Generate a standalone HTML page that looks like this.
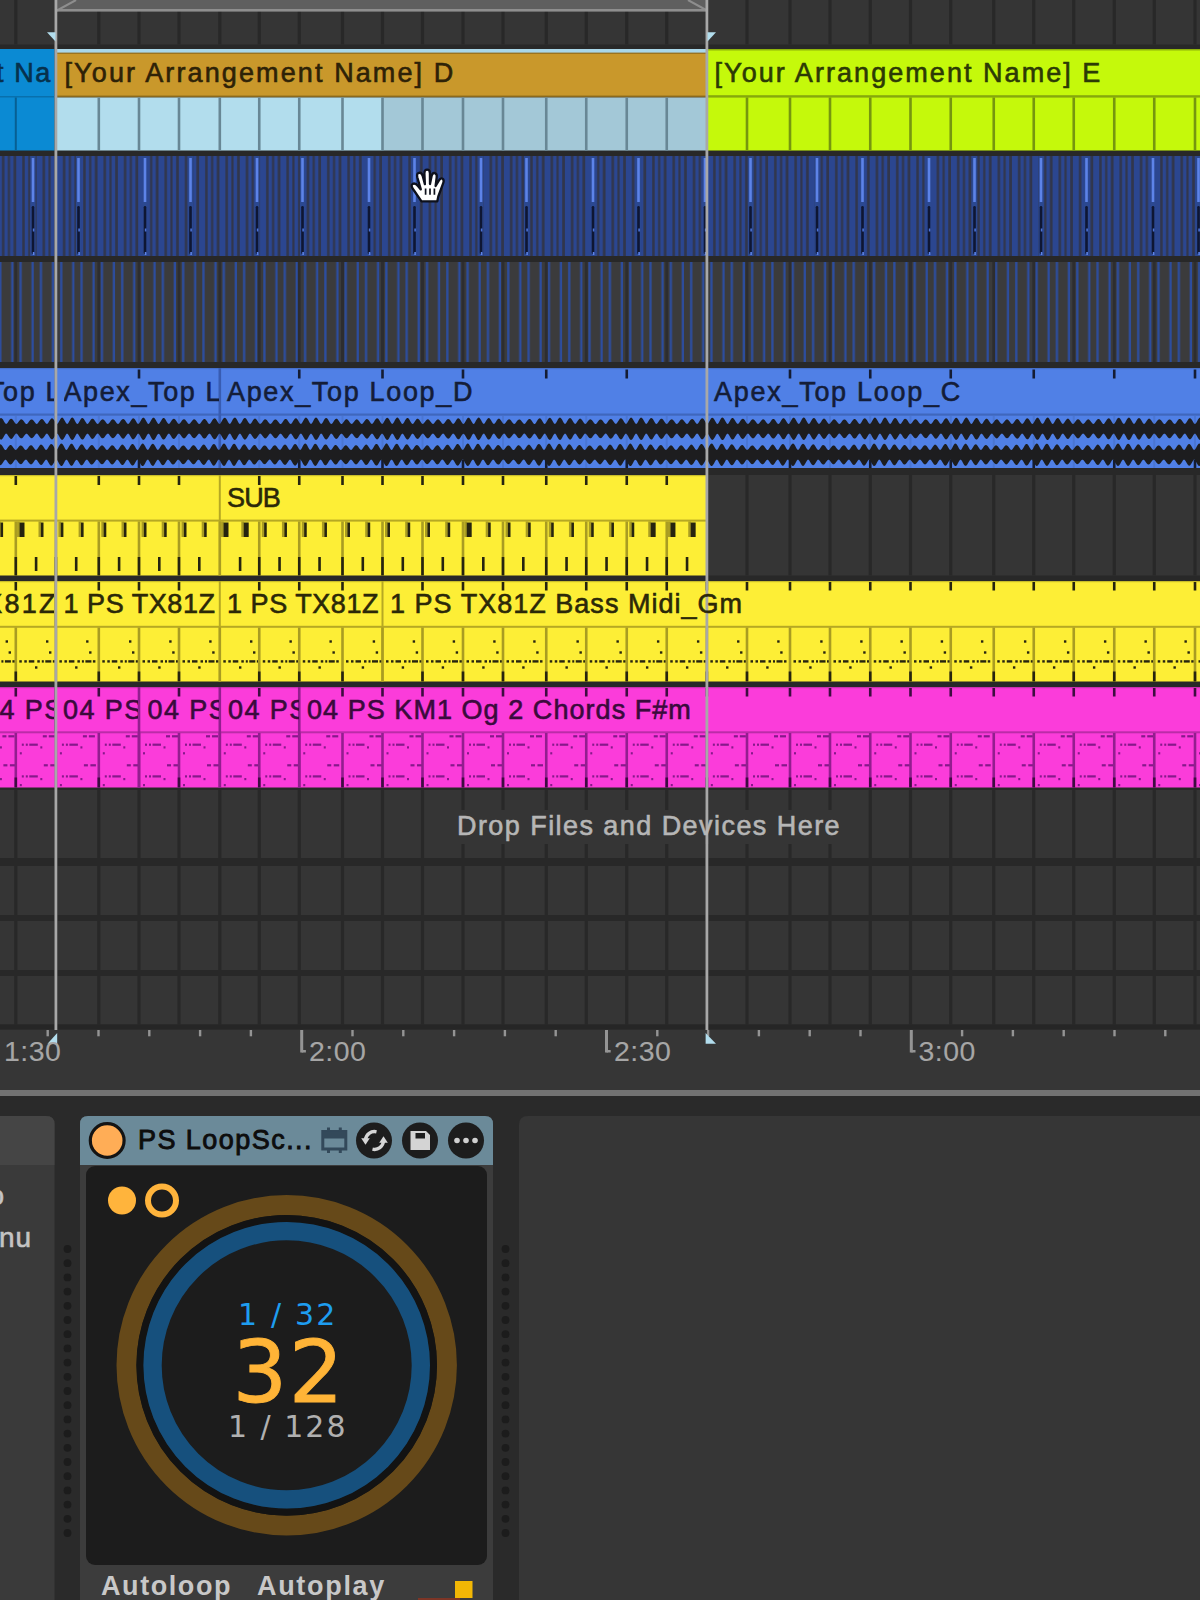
<!DOCTYPE html>
<html><head><meta charset="utf-8"><title>Arrangement</title>
<style>
html,body{margin:0;padding:0;background:#2a2a2a;}
#root{position:relative;width:1200px;height:1600px;overflow:hidden;background:#2a2a2a;}
#root svg{position:absolute;left:0;top:0;}
.t{position:absolute;white-space:nowrap;line-height:1.15;}
</style></head><body>
<div id="root">
<svg width="1200" height="1600" viewBox="0 0 1200 1600">
<rect x="0.00" y="0.00" width="1200.00" height="1600.00" fill="#282828"/>
<rect x="0.00" y="0.00" width="1200.00" height="44.50" fill="#353535"/>
<rect x="14.20" y="0.00" width="3.20" height="44.50" fill="#282828"/>
<rect x="54.30" y="0.00" width="3.20" height="44.50" fill="#282828"/>
<rect x="97.20" y="0.00" width="3.20" height="44.50" fill="#282828"/>
<rect x="137.40" y="0.00" width="3.20" height="44.50" fill="#282828"/>
<rect x="177.40" y="0.00" width="3.20" height="44.50" fill="#282828"/>
<rect x="218.20" y="0.00" width="3.20" height="44.50" fill="#282828"/>
<rect x="257.65" y="0.00" width="3.20" height="44.50" fill="#282828"/>
<rect x="297.65" y="0.00" width="3.20" height="44.50" fill="#282828"/>
<rect x="340.90" y="0.00" width="3.20" height="44.50" fill="#282828"/>
<rect x="380.90" y="0.00" width="3.20" height="44.50" fill="#282828"/>
<rect x="420.90" y="0.00" width="3.20" height="44.50" fill="#282828"/>
<rect x="461.40" y="0.00" width="3.20" height="44.50" fill="#282828"/>
<rect x="501.40" y="0.00" width="3.20" height="44.50" fill="#282828"/>
<rect x="544.65" y="0.00" width="3.20" height="44.50" fill="#282828"/>
<rect x="584.65" y="0.00" width="3.20" height="44.50" fill="#282828"/>
<rect x="625.15" y="0.00" width="3.20" height="44.50" fill="#282828"/>
<rect x="665.15" y="0.00" width="3.20" height="44.50" fill="#282828"/>
<rect x="705.25" y="0.00" width="3.20" height="44.50" fill="#282828"/>
<rect x="745.40" y="0.00" width="3.20" height="44.50" fill="#282828"/>
<rect x="788.40" y="0.00" width="3.20" height="44.50" fill="#282828"/>
<rect x="828.40" y="0.00" width="3.20" height="44.50" fill="#282828"/>
<rect x="868.65" y="0.00" width="3.20" height="44.50" fill="#282828"/>
<rect x="908.90" y="0.00" width="3.20" height="44.50" fill="#282828"/>
<rect x="949.15" y="0.00" width="3.20" height="44.50" fill="#282828"/>
<rect x="992.15" y="0.00" width="3.20" height="44.50" fill="#282828"/>
<rect x="1032.15" y="0.00" width="3.20" height="44.50" fill="#282828"/>
<rect x="1072.15" y="0.00" width="3.20" height="44.50" fill="#282828"/>
<rect x="1112.65" y="0.00" width="3.20" height="44.50" fill="#282828"/>
<rect x="1152.65" y="0.00" width="3.20" height="44.50" fill="#282828"/>
<rect x="1193.40" y="0.00" width="3.20" height="44.50" fill="#282828"/>
<rect x="0.00" y="790.00" width="1200.00" height="68.00" fill="#353535"/>
<rect x="14.20" y="790.00" width="3.20" height="68.00" fill="#282828"/>
<rect x="54.30" y="790.00" width="3.20" height="68.00" fill="#282828"/>
<rect x="97.20" y="790.00" width="3.20" height="68.00" fill="#282828"/>
<rect x="137.40" y="790.00" width="3.20" height="68.00" fill="#282828"/>
<rect x="177.40" y="790.00" width="3.20" height="68.00" fill="#282828"/>
<rect x="218.20" y="790.00" width="3.20" height="68.00" fill="#282828"/>
<rect x="257.65" y="790.00" width="3.20" height="68.00" fill="#282828"/>
<rect x="297.65" y="790.00" width="3.20" height="68.00" fill="#282828"/>
<rect x="340.90" y="790.00" width="3.20" height="68.00" fill="#282828"/>
<rect x="380.90" y="790.00" width="3.20" height="68.00" fill="#282828"/>
<rect x="420.90" y="790.00" width="3.20" height="68.00" fill="#282828"/>
<rect x="461.40" y="790.00" width="3.20" height="68.00" fill="#282828"/>
<rect x="501.40" y="790.00" width="3.20" height="68.00" fill="#282828"/>
<rect x="544.65" y="790.00" width="3.20" height="68.00" fill="#282828"/>
<rect x="584.65" y="790.00" width="3.20" height="68.00" fill="#282828"/>
<rect x="625.15" y="790.00" width="3.20" height="68.00" fill="#282828"/>
<rect x="665.15" y="790.00" width="3.20" height="68.00" fill="#282828"/>
<rect x="705.25" y="790.00" width="3.20" height="68.00" fill="#282828"/>
<rect x="745.40" y="790.00" width="3.20" height="68.00" fill="#282828"/>
<rect x="788.40" y="790.00" width="3.20" height="68.00" fill="#282828"/>
<rect x="828.40" y="790.00" width="3.20" height="68.00" fill="#282828"/>
<rect x="868.65" y="790.00" width="3.20" height="68.00" fill="#282828"/>
<rect x="908.90" y="790.00" width="3.20" height="68.00" fill="#282828"/>
<rect x="949.15" y="790.00" width="3.20" height="68.00" fill="#282828"/>
<rect x="992.15" y="790.00" width="3.20" height="68.00" fill="#282828"/>
<rect x="1032.15" y="790.00" width="3.20" height="68.00" fill="#282828"/>
<rect x="1072.15" y="790.00" width="3.20" height="68.00" fill="#282828"/>
<rect x="1112.65" y="790.00" width="3.20" height="68.00" fill="#282828"/>
<rect x="1152.65" y="790.00" width="3.20" height="68.00" fill="#282828"/>
<rect x="1193.40" y="790.00" width="3.20" height="68.00" fill="#282828"/>
<rect x="0.00" y="866.00" width="1200.00" height="49.00" fill="#353535"/>
<rect x="14.20" y="866.00" width="3.20" height="49.00" fill="#282828"/>
<rect x="54.30" y="866.00" width="3.20" height="49.00" fill="#282828"/>
<rect x="97.20" y="866.00" width="3.20" height="49.00" fill="#282828"/>
<rect x="137.40" y="866.00" width="3.20" height="49.00" fill="#282828"/>
<rect x="177.40" y="866.00" width="3.20" height="49.00" fill="#282828"/>
<rect x="218.20" y="866.00" width="3.20" height="49.00" fill="#282828"/>
<rect x="257.65" y="866.00" width="3.20" height="49.00" fill="#282828"/>
<rect x="297.65" y="866.00" width="3.20" height="49.00" fill="#282828"/>
<rect x="340.90" y="866.00" width="3.20" height="49.00" fill="#282828"/>
<rect x="380.90" y="866.00" width="3.20" height="49.00" fill="#282828"/>
<rect x="420.90" y="866.00" width="3.20" height="49.00" fill="#282828"/>
<rect x="461.40" y="866.00" width="3.20" height="49.00" fill="#282828"/>
<rect x="501.40" y="866.00" width="3.20" height="49.00" fill="#282828"/>
<rect x="544.65" y="866.00" width="3.20" height="49.00" fill="#282828"/>
<rect x="584.65" y="866.00" width="3.20" height="49.00" fill="#282828"/>
<rect x="625.15" y="866.00" width="3.20" height="49.00" fill="#282828"/>
<rect x="665.15" y="866.00" width="3.20" height="49.00" fill="#282828"/>
<rect x="705.25" y="866.00" width="3.20" height="49.00" fill="#282828"/>
<rect x="745.40" y="866.00" width="3.20" height="49.00" fill="#282828"/>
<rect x="788.40" y="866.00" width="3.20" height="49.00" fill="#282828"/>
<rect x="828.40" y="866.00" width="3.20" height="49.00" fill="#282828"/>
<rect x="868.65" y="866.00" width="3.20" height="49.00" fill="#282828"/>
<rect x="908.90" y="866.00" width="3.20" height="49.00" fill="#282828"/>
<rect x="949.15" y="866.00" width="3.20" height="49.00" fill="#282828"/>
<rect x="992.15" y="866.00" width="3.20" height="49.00" fill="#282828"/>
<rect x="1032.15" y="866.00" width="3.20" height="49.00" fill="#282828"/>
<rect x="1072.15" y="866.00" width="3.20" height="49.00" fill="#282828"/>
<rect x="1112.65" y="866.00" width="3.20" height="49.00" fill="#282828"/>
<rect x="1152.65" y="866.00" width="3.20" height="49.00" fill="#282828"/>
<rect x="1193.40" y="866.00" width="3.20" height="49.00" fill="#282828"/>
<rect x="0.00" y="921.00" width="1200.00" height="49.00" fill="#353535"/>
<rect x="14.20" y="921.00" width="3.20" height="49.00" fill="#282828"/>
<rect x="54.30" y="921.00" width="3.20" height="49.00" fill="#282828"/>
<rect x="97.20" y="921.00" width="3.20" height="49.00" fill="#282828"/>
<rect x="137.40" y="921.00" width="3.20" height="49.00" fill="#282828"/>
<rect x="177.40" y="921.00" width="3.20" height="49.00" fill="#282828"/>
<rect x="218.20" y="921.00" width="3.20" height="49.00" fill="#282828"/>
<rect x="257.65" y="921.00" width="3.20" height="49.00" fill="#282828"/>
<rect x="297.65" y="921.00" width="3.20" height="49.00" fill="#282828"/>
<rect x="340.90" y="921.00" width="3.20" height="49.00" fill="#282828"/>
<rect x="380.90" y="921.00" width="3.20" height="49.00" fill="#282828"/>
<rect x="420.90" y="921.00" width="3.20" height="49.00" fill="#282828"/>
<rect x="461.40" y="921.00" width="3.20" height="49.00" fill="#282828"/>
<rect x="501.40" y="921.00" width="3.20" height="49.00" fill="#282828"/>
<rect x="544.65" y="921.00" width="3.20" height="49.00" fill="#282828"/>
<rect x="584.65" y="921.00" width="3.20" height="49.00" fill="#282828"/>
<rect x="625.15" y="921.00" width="3.20" height="49.00" fill="#282828"/>
<rect x="665.15" y="921.00" width="3.20" height="49.00" fill="#282828"/>
<rect x="705.25" y="921.00" width="3.20" height="49.00" fill="#282828"/>
<rect x="745.40" y="921.00" width="3.20" height="49.00" fill="#282828"/>
<rect x="788.40" y="921.00" width="3.20" height="49.00" fill="#282828"/>
<rect x="828.40" y="921.00" width="3.20" height="49.00" fill="#282828"/>
<rect x="868.65" y="921.00" width="3.20" height="49.00" fill="#282828"/>
<rect x="908.90" y="921.00" width="3.20" height="49.00" fill="#282828"/>
<rect x="949.15" y="921.00" width="3.20" height="49.00" fill="#282828"/>
<rect x="992.15" y="921.00" width="3.20" height="49.00" fill="#282828"/>
<rect x="1032.15" y="921.00" width="3.20" height="49.00" fill="#282828"/>
<rect x="1072.15" y="921.00" width="3.20" height="49.00" fill="#282828"/>
<rect x="1112.65" y="921.00" width="3.20" height="49.00" fill="#282828"/>
<rect x="1152.65" y="921.00" width="3.20" height="49.00" fill="#282828"/>
<rect x="1193.40" y="921.00" width="3.20" height="49.00" fill="#282828"/>
<rect x="0.00" y="976.00" width="1200.00" height="48.50" fill="#353535"/>
<rect x="14.20" y="976.00" width="3.20" height="48.50" fill="#282828"/>
<rect x="54.30" y="976.00" width="3.20" height="48.50" fill="#282828"/>
<rect x="97.20" y="976.00" width="3.20" height="48.50" fill="#282828"/>
<rect x="137.40" y="976.00" width="3.20" height="48.50" fill="#282828"/>
<rect x="177.40" y="976.00" width="3.20" height="48.50" fill="#282828"/>
<rect x="218.20" y="976.00" width="3.20" height="48.50" fill="#282828"/>
<rect x="257.65" y="976.00" width="3.20" height="48.50" fill="#282828"/>
<rect x="297.65" y="976.00" width="3.20" height="48.50" fill="#282828"/>
<rect x="340.90" y="976.00" width="3.20" height="48.50" fill="#282828"/>
<rect x="380.90" y="976.00" width="3.20" height="48.50" fill="#282828"/>
<rect x="420.90" y="976.00" width="3.20" height="48.50" fill="#282828"/>
<rect x="461.40" y="976.00" width="3.20" height="48.50" fill="#282828"/>
<rect x="501.40" y="976.00" width="3.20" height="48.50" fill="#282828"/>
<rect x="544.65" y="976.00" width="3.20" height="48.50" fill="#282828"/>
<rect x="584.65" y="976.00" width="3.20" height="48.50" fill="#282828"/>
<rect x="625.15" y="976.00" width="3.20" height="48.50" fill="#282828"/>
<rect x="665.15" y="976.00" width="3.20" height="48.50" fill="#282828"/>
<rect x="705.25" y="976.00" width="3.20" height="48.50" fill="#282828"/>
<rect x="745.40" y="976.00" width="3.20" height="48.50" fill="#282828"/>
<rect x="788.40" y="976.00" width="3.20" height="48.50" fill="#282828"/>
<rect x="828.40" y="976.00" width="3.20" height="48.50" fill="#282828"/>
<rect x="868.65" y="976.00" width="3.20" height="48.50" fill="#282828"/>
<rect x="908.90" y="976.00" width="3.20" height="48.50" fill="#282828"/>
<rect x="949.15" y="976.00" width="3.20" height="48.50" fill="#282828"/>
<rect x="992.15" y="976.00" width="3.20" height="48.50" fill="#282828"/>
<rect x="1032.15" y="976.00" width="3.20" height="48.50" fill="#282828"/>
<rect x="1072.15" y="976.00" width="3.20" height="48.50" fill="#282828"/>
<rect x="1112.65" y="976.00" width="3.20" height="48.50" fill="#282828"/>
<rect x="1152.65" y="976.00" width="3.20" height="48.50" fill="#282828"/>
<rect x="1193.40" y="976.00" width="3.20" height="48.50" fill="#282828"/>
<rect x="708.00" y="475.00" width="492.00" height="100.50" fill="#353535"/>
<rect x="705.25" y="475.00" width="3.20" height="100.50" fill="#282828"/>
<rect x="745.40" y="475.00" width="3.20" height="100.50" fill="#282828"/>
<rect x="788.40" y="475.00" width="3.20" height="100.50" fill="#282828"/>
<rect x="828.40" y="475.00" width="3.20" height="100.50" fill="#282828"/>
<rect x="868.65" y="475.00" width="3.20" height="100.50" fill="#282828"/>
<rect x="908.90" y="475.00" width="3.20" height="100.50" fill="#282828"/>
<rect x="949.15" y="475.00" width="3.20" height="100.50" fill="#282828"/>
<rect x="992.15" y="475.00" width="3.20" height="100.50" fill="#282828"/>
<rect x="1032.15" y="475.00" width="3.20" height="100.50" fill="#282828"/>
<rect x="1072.15" y="475.00" width="3.20" height="100.50" fill="#282828"/>
<rect x="1112.65" y="475.00" width="3.20" height="100.50" fill="#282828"/>
<rect x="1152.65" y="475.00" width="3.20" height="100.50" fill="#282828"/>
<rect x="1193.40" y="475.00" width="3.20" height="100.50" fill="#282828"/>
<rect x="57.00" y="0.00" width="650.00" height="9.50" fill="#5f5f5f"/>
<rect x="57.00" y="9.00" width="650.00" height="2.60" fill="#8e8e8e"/>
<path d="M57 10.5 L76 0" stroke="#8e8e8e" stroke-width="2" fill="none"/>
<path d="M707 10.5 L688 0" stroke="#8e8e8e" stroke-width="2" fill="none"/>
<rect x="0.00" y="49.00" width="54.50" height="101.50" fill="#0b8ad3"/>
<rect x="0.00" y="96.00" width="54.50" height="1.50" fill="#0870ad"/>
<rect x="14.80" y="97.50" width="2.00" height="53.00" fill="#075f93"/>
<rect x="57.00" y="49.00" width="650.00" height="4.00" fill="#a9d7e9"/>
<rect x="57.00" y="53.00" width="650.00" height="43.50" fill="#c9982b"/>
<rect x="57.00" y="52.60" width="650.00" height="1.20" fill="#8f6c1e"/>
<rect x="57.00" y="95.60" width="650.00" height="2.00" fill="#8a691d"/>
<rect x="57.00" y="97.50" width="325.00" height="53.00" fill="#b2dded"/>
<rect x="382.00" y="97.50" width="325.00" height="53.00" fill="#a3c8d7"/>
<rect x="97.50" y="97.50" width="2.60" height="53.00" fill="#688795"/>
<rect x="137.70" y="97.50" width="2.60" height="53.00" fill="#688795"/>
<rect x="177.70" y="97.50" width="2.60" height="53.00" fill="#688795"/>
<rect x="218.50" y="97.50" width="2.60" height="53.00" fill="#688795"/>
<rect x="257.95" y="97.50" width="2.60" height="53.00" fill="#688795"/>
<rect x="297.95" y="97.50" width="2.60" height="53.00" fill="#688795"/>
<rect x="341.20" y="97.50" width="2.60" height="53.00" fill="#688795"/>
<rect x="381.20" y="97.50" width="2.60" height="53.00" fill="#688795"/>
<rect x="421.20" y="97.50" width="2.60" height="53.00" fill="#688795"/>
<rect x="461.70" y="97.50" width="2.60" height="53.00" fill="#688795"/>
<rect x="501.70" y="97.50" width="2.60" height="53.00" fill="#688795"/>
<rect x="544.95" y="97.50" width="2.60" height="53.00" fill="#688795"/>
<rect x="584.95" y="97.50" width="2.60" height="53.00" fill="#688795"/>
<rect x="625.45" y="97.50" width="2.60" height="53.00" fill="#688795"/>
<rect x="665.45" y="97.50" width="2.60" height="53.00" fill="#688795"/>
<rect x="708.00" y="49.00" width="492.00" height="101.50" fill="#c5f90b"/>
<rect x="708.00" y="49.00" width="492.00" height="1.50" fill="#8fb40a"/>
<rect x="708.00" y="95.20" width="492.00" height="2.40" fill="#86a80c"/>
<rect x="745.70" y="97.50" width="2.60" height="53.00" fill="#76960f"/>
<rect x="788.70" y="97.50" width="2.60" height="53.00" fill="#76960f"/>
<rect x="828.70" y="97.50" width="2.60" height="53.00" fill="#76960f"/>
<rect x="868.95" y="97.50" width="2.60" height="53.00" fill="#76960f"/>
<rect x="909.20" y="97.50" width="2.60" height="53.00" fill="#76960f"/>
<rect x="949.45" y="97.50" width="2.60" height="53.00" fill="#76960f"/>
<rect x="992.45" y="97.50" width="2.60" height="53.00" fill="#76960f"/>
<rect x="1032.45" y="97.50" width="2.60" height="53.00" fill="#76960f"/>
<rect x="1072.45" y="97.50" width="2.60" height="53.00" fill="#76960f"/>
<rect x="1112.95" y="97.50" width="2.60" height="53.00" fill="#76960f"/>
<rect x="1152.95" y="97.50" width="2.60" height="53.00" fill="#76960f"/>
<rect x="1193.70" y="97.50" width="2.60" height="53.00" fill="#76960f"/>
<rect x="1234.20" y="97.50" width="2.60" height="53.00" fill="#76960f"/>
<defs><pattern id="st1" x="56.9" y="0" width="20.32" height="10" patternUnits="userSpaceOnUse"><rect x="0" y="0" width="20.32" height="10" fill="#2b4690"/><rect x="6" y="0" width="2.5" height="10" fill="#31364c"/><rect x="11.9" y="0" width="2.2" height="10" fill="#31364c"/><rect x="17.6" y="0" width="2.72" height="10" fill="#31364c"/></pattern><pattern id="st2" x="57" y="0" width="20.32" height="10" patternUnits="userSpaceOnUse"><rect x="0" y="0" width="20.32" height="10" fill="#3b3b3c"/><rect x="3.1" y="0" width="2.3" height="10" fill="#2c4d9f"/><rect x="15.1" y="0" width="2.3" height="10" fill="#2c4d9f"/></pattern></defs>
<rect x="0.00" y="156.00" width="1200.00" height="100.00" fill="url(#st1)"/>
<rect x="30.40" y="156.00" width="5.20" height="100.00" fill="#2b4890"/>
<rect x="31.70" y="158.00" width="2.60" height="44.00" fill="#5d83e8"/>
<rect x="31.70" y="206.00" width="2.60" height="48.00" fill="#0e1633" rx="1.3"/>
<rect x="32.80" y="228.50" width="1.60" height="3.00" fill="#4c72d4"/>
<rect x="32.80" y="252.00" width="1.60" height="3.00" fill="#5d83e8"/>
<rect x="75.90" y="156.00" width="5.20" height="100.00" fill="#2b4890"/>
<rect x="77.20" y="158.00" width="2.60" height="44.00" fill="#5d83e8"/>
<rect x="77.20" y="206.00" width="2.60" height="48.00" fill="#0e1633" rx="1.3"/>
<rect x="78.30" y="228.50" width="1.60" height="3.00" fill="#4c72d4"/>
<rect x="78.30" y="252.00" width="1.60" height="3.00" fill="#5d83e8"/>
<rect x="142.40" y="156.00" width="5.20" height="100.00" fill="#2b4890"/>
<rect x="143.70" y="158.00" width="2.60" height="44.00" fill="#5d83e8"/>
<rect x="143.70" y="206.00" width="2.60" height="48.00" fill="#0e1633" rx="1.3"/>
<rect x="144.80" y="228.50" width="1.60" height="3.00" fill="#4c72d4"/>
<rect x="144.80" y="252.00" width="1.60" height="3.00" fill="#5d83e8"/>
<rect x="187.90" y="156.00" width="5.20" height="100.00" fill="#2b4890"/>
<rect x="189.20" y="158.00" width="2.60" height="44.00" fill="#5d83e8"/>
<rect x="189.20" y="206.00" width="2.60" height="48.00" fill="#0e1633" rx="1.3"/>
<rect x="190.30" y="228.50" width="1.60" height="3.00" fill="#4c72d4"/>
<rect x="190.30" y="252.00" width="1.60" height="3.00" fill="#5d83e8"/>
<rect x="254.40" y="156.00" width="5.20" height="100.00" fill="#2b4890"/>
<rect x="255.70" y="158.00" width="2.60" height="44.00" fill="#5d83e8"/>
<rect x="255.70" y="206.00" width="2.60" height="48.00" fill="#0e1633" rx="1.3"/>
<rect x="256.80" y="228.50" width="1.60" height="3.00" fill="#4c72d4"/>
<rect x="256.80" y="252.00" width="1.60" height="3.00" fill="#5d83e8"/>
<rect x="299.90" y="156.00" width="5.20" height="100.00" fill="#2b4890"/>
<rect x="301.20" y="158.00" width="2.60" height="44.00" fill="#5d83e8"/>
<rect x="301.20" y="206.00" width="2.60" height="48.00" fill="#0e1633" rx="1.3"/>
<rect x="302.30" y="228.50" width="1.60" height="3.00" fill="#4c72d4"/>
<rect x="302.30" y="252.00" width="1.60" height="3.00" fill="#5d83e8"/>
<rect x="366.40" y="156.00" width="5.20" height="100.00" fill="#2b4890"/>
<rect x="367.70" y="158.00" width="2.60" height="44.00" fill="#5d83e8"/>
<rect x="367.70" y="206.00" width="2.60" height="48.00" fill="#0e1633" rx="1.3"/>
<rect x="368.80" y="228.50" width="1.60" height="3.00" fill="#4c72d4"/>
<rect x="368.80" y="252.00" width="1.60" height="3.00" fill="#5d83e8"/>
<rect x="411.90" y="156.00" width="5.20" height="100.00" fill="#2b4890"/>
<rect x="413.20" y="158.00" width="2.60" height="44.00" fill="#5d83e8"/>
<rect x="413.20" y="206.00" width="2.60" height="48.00" fill="#0e1633" rx="1.3"/>
<rect x="414.30" y="228.50" width="1.60" height="3.00" fill="#4c72d4"/>
<rect x="414.30" y="252.00" width="1.60" height="3.00" fill="#5d83e8"/>
<rect x="478.40" y="156.00" width="5.20" height="100.00" fill="#2b4890"/>
<rect x="479.70" y="158.00" width="2.60" height="44.00" fill="#5d83e8"/>
<rect x="479.70" y="206.00" width="2.60" height="48.00" fill="#0e1633" rx="1.3"/>
<rect x="480.80" y="228.50" width="1.60" height="3.00" fill="#4c72d4"/>
<rect x="480.80" y="252.00" width="1.60" height="3.00" fill="#5d83e8"/>
<rect x="523.90" y="156.00" width="5.20" height="100.00" fill="#2b4890"/>
<rect x="525.20" y="158.00" width="2.60" height="44.00" fill="#5d83e8"/>
<rect x="525.20" y="206.00" width="2.60" height="48.00" fill="#0e1633" rx="1.3"/>
<rect x="526.30" y="228.50" width="1.60" height="3.00" fill="#4c72d4"/>
<rect x="526.30" y="252.00" width="1.60" height="3.00" fill="#5d83e8"/>
<rect x="590.40" y="156.00" width="5.20" height="100.00" fill="#2b4890"/>
<rect x="591.70" y="158.00" width="2.60" height="44.00" fill="#5d83e8"/>
<rect x="591.70" y="206.00" width="2.60" height="48.00" fill="#0e1633" rx="1.3"/>
<rect x="592.80" y="228.50" width="1.60" height="3.00" fill="#4c72d4"/>
<rect x="592.80" y="252.00" width="1.60" height="3.00" fill="#5d83e8"/>
<rect x="635.90" y="156.00" width="5.20" height="100.00" fill="#2b4890"/>
<rect x="637.20" y="158.00" width="2.60" height="44.00" fill="#5d83e8"/>
<rect x="637.20" y="206.00" width="2.60" height="48.00" fill="#0e1633" rx="1.3"/>
<rect x="638.30" y="228.50" width="1.60" height="3.00" fill="#4c72d4"/>
<rect x="638.30" y="252.00" width="1.60" height="3.00" fill="#5d83e8"/>
<rect x="702.40" y="156.00" width="5.20" height="100.00" fill="#2b4890"/>
<rect x="703.70" y="158.00" width="2.60" height="44.00" fill="#5d83e8"/>
<rect x="703.70" y="206.00" width="2.60" height="48.00" fill="#0e1633" rx="1.3"/>
<rect x="704.80" y="228.50" width="1.60" height="3.00" fill="#4c72d4"/>
<rect x="704.80" y="252.00" width="1.60" height="3.00" fill="#5d83e8"/>
<rect x="747.90" y="156.00" width="5.20" height="100.00" fill="#2b4890"/>
<rect x="749.20" y="158.00" width="2.60" height="44.00" fill="#5d83e8"/>
<rect x="749.20" y="206.00" width="2.60" height="48.00" fill="#0e1633" rx="1.3"/>
<rect x="750.30" y="228.50" width="1.60" height="3.00" fill="#4c72d4"/>
<rect x="750.30" y="252.00" width="1.60" height="3.00" fill="#5d83e8"/>
<rect x="814.40" y="156.00" width="5.20" height="100.00" fill="#2b4890"/>
<rect x="815.70" y="158.00" width="2.60" height="44.00" fill="#5d83e8"/>
<rect x="815.70" y="206.00" width="2.60" height="48.00" fill="#0e1633" rx="1.3"/>
<rect x="816.80" y="228.50" width="1.60" height="3.00" fill="#4c72d4"/>
<rect x="816.80" y="252.00" width="1.60" height="3.00" fill="#5d83e8"/>
<rect x="859.90" y="156.00" width="5.20" height="100.00" fill="#2b4890"/>
<rect x="861.20" y="158.00" width="2.60" height="44.00" fill="#5d83e8"/>
<rect x="861.20" y="206.00" width="2.60" height="48.00" fill="#0e1633" rx="1.3"/>
<rect x="862.30" y="228.50" width="1.60" height="3.00" fill="#4c72d4"/>
<rect x="862.30" y="252.00" width="1.60" height="3.00" fill="#5d83e8"/>
<rect x="926.40" y="156.00" width="5.20" height="100.00" fill="#2b4890"/>
<rect x="927.70" y="158.00" width="2.60" height="44.00" fill="#5d83e8"/>
<rect x="927.70" y="206.00" width="2.60" height="48.00" fill="#0e1633" rx="1.3"/>
<rect x="928.80" y="228.50" width="1.60" height="3.00" fill="#4c72d4"/>
<rect x="928.80" y="252.00" width="1.60" height="3.00" fill="#5d83e8"/>
<rect x="971.90" y="156.00" width="5.20" height="100.00" fill="#2b4890"/>
<rect x="973.20" y="158.00" width="2.60" height="44.00" fill="#5d83e8"/>
<rect x="973.20" y="206.00" width="2.60" height="48.00" fill="#0e1633" rx="1.3"/>
<rect x="974.30" y="228.50" width="1.60" height="3.00" fill="#4c72d4"/>
<rect x="974.30" y="252.00" width="1.60" height="3.00" fill="#5d83e8"/>
<rect x="1038.40" y="156.00" width="5.20" height="100.00" fill="#2b4890"/>
<rect x="1039.70" y="158.00" width="2.60" height="44.00" fill="#5d83e8"/>
<rect x="1039.70" y="206.00" width="2.60" height="48.00" fill="#0e1633" rx="1.3"/>
<rect x="1040.80" y="228.50" width="1.60" height="3.00" fill="#4c72d4"/>
<rect x="1040.80" y="252.00" width="1.60" height="3.00" fill="#5d83e8"/>
<rect x="1083.90" y="156.00" width="5.20" height="100.00" fill="#2b4890"/>
<rect x="1085.20" y="158.00" width="2.60" height="44.00" fill="#5d83e8"/>
<rect x="1085.20" y="206.00" width="2.60" height="48.00" fill="#0e1633" rx="1.3"/>
<rect x="1086.30" y="228.50" width="1.60" height="3.00" fill="#4c72d4"/>
<rect x="1086.30" y="252.00" width="1.60" height="3.00" fill="#5d83e8"/>
<rect x="1150.40" y="156.00" width="5.20" height="100.00" fill="#2b4890"/>
<rect x="1151.70" y="158.00" width="2.60" height="44.00" fill="#5d83e8"/>
<rect x="1151.70" y="206.00" width="2.60" height="48.00" fill="#0e1633" rx="1.3"/>
<rect x="1152.80" y="228.50" width="1.60" height="3.00" fill="#4c72d4"/>
<rect x="1152.80" y="252.00" width="1.60" height="3.00" fill="#5d83e8"/>
<rect x="1195.90" y="156.00" width="5.20" height="100.00" fill="#2b4890"/>
<rect x="1197.20" y="158.00" width="2.60" height="44.00" fill="#5d83e8"/>
<rect x="1197.20" y="206.00" width="2.60" height="48.00" fill="#0e1633" rx="1.3"/>
<rect x="1198.30" y="228.50" width="1.60" height="3.00" fill="#4c72d4"/>
<rect x="1198.30" y="252.00" width="1.60" height="3.00" fill="#5d83e8"/>
<rect x="0.00" y="262.00" width="1200.00" height="100.00" fill="url(#st2)"/>
<rect x="-26.00" y="262.00" width="2.80" height="100.00" fill="#2d2d2f"/>
<rect x="14.40" y="262.00" width="2.80" height="100.00" fill="#2d2d2f"/>
<rect x="54.50" y="262.00" width="2.80" height="100.00" fill="#2d2d2f"/>
<rect x="97.40" y="262.00" width="2.80" height="100.00" fill="#2d2d2f"/>
<rect x="137.60" y="262.00" width="2.80" height="100.00" fill="#2d2d2f"/>
<rect x="177.60" y="262.00" width="2.80" height="100.00" fill="#2d2d2f"/>
<rect x="218.40" y="262.00" width="2.80" height="100.00" fill="#2d2d2f"/>
<rect x="257.85" y="262.00" width="2.80" height="100.00" fill="#2d2d2f"/>
<rect x="297.85" y="262.00" width="2.80" height="100.00" fill="#2d2d2f"/>
<rect x="341.10" y="262.00" width="2.80" height="100.00" fill="#2d2d2f"/>
<rect x="381.10" y="262.00" width="2.80" height="100.00" fill="#2d2d2f"/>
<rect x="421.10" y="262.00" width="2.80" height="100.00" fill="#2d2d2f"/>
<rect x="461.60" y="262.00" width="2.80" height="100.00" fill="#2d2d2f"/>
<rect x="501.60" y="262.00" width="2.80" height="100.00" fill="#2d2d2f"/>
<rect x="544.85" y="262.00" width="2.80" height="100.00" fill="#2d2d2f"/>
<rect x="584.85" y="262.00" width="2.80" height="100.00" fill="#2d2d2f"/>
<rect x="625.35" y="262.00" width="2.80" height="100.00" fill="#2d2d2f"/>
<rect x="665.35" y="262.00" width="2.80" height="100.00" fill="#2d2d2f"/>
<rect x="705.45" y="262.00" width="2.80" height="100.00" fill="#2d2d2f"/>
<rect x="745.60" y="262.00" width="2.80" height="100.00" fill="#2d2d2f"/>
<rect x="788.60" y="262.00" width="2.80" height="100.00" fill="#2d2d2f"/>
<rect x="828.60" y="262.00" width="2.80" height="100.00" fill="#2d2d2f"/>
<rect x="868.85" y="262.00" width="2.80" height="100.00" fill="#2d2d2f"/>
<rect x="909.10" y="262.00" width="2.80" height="100.00" fill="#2d2d2f"/>
<rect x="949.35" y="262.00" width="2.80" height="100.00" fill="#2d2d2f"/>
<rect x="992.35" y="262.00" width="2.80" height="100.00" fill="#2d2d2f"/>
<rect x="1032.35" y="262.00" width="2.80" height="100.00" fill="#2d2d2f"/>
<rect x="1072.35" y="262.00" width="2.80" height="100.00" fill="#2d2d2f"/>
<rect x="1112.85" y="262.00" width="2.80" height="100.00" fill="#2d2d2f"/>
<rect x="1152.85" y="262.00" width="2.80" height="100.00" fill="#2d2d2f"/>
<rect x="1193.60" y="262.00" width="2.80" height="100.00" fill="#2d2d2f"/>
<rect x="1234.10" y="262.00" width="2.80" height="100.00" fill="#2d2d2f"/>
<rect x="0.00" y="368.00" width="1200.00" height="100.00" fill="#5080e6"/>
<rect x="0.00" y="368.00" width="1200.00" height="1.20" fill="#456fca"/>
<rect x="0.00" y="413.50" width="1200.00" height="2.20" fill="#3f67bd"/>
<rect x="-25.60" y="416.00" width="2.00" height="52.00" fill="#4a76d3"/>
<rect x="14.80" y="416.00" width="2.00" height="52.00" fill="#4a76d3"/>
<rect x="54.90" y="416.00" width="2.00" height="52.00" fill="#4a76d3"/>
<rect x="97.80" y="416.00" width="2.00" height="52.00" fill="#4a76d3"/>
<rect x="138.00" y="416.00" width="2.00" height="52.00" fill="#4a76d3"/>
<rect x="178.00" y="416.00" width="2.00" height="52.00" fill="#4a76d3"/>
<rect x="218.80" y="416.00" width="2.00" height="52.00" fill="#4a76d3"/>
<rect x="258.25" y="416.00" width="2.00" height="52.00" fill="#4a76d3"/>
<rect x="298.25" y="416.00" width="2.00" height="52.00" fill="#4a76d3"/>
<rect x="341.50" y="416.00" width="2.00" height="52.00" fill="#4a76d3"/>
<rect x="381.50" y="416.00" width="2.00" height="52.00" fill="#4a76d3"/>
<rect x="421.50" y="416.00" width="2.00" height="52.00" fill="#4a76d3"/>
<rect x="462.00" y="416.00" width="2.00" height="52.00" fill="#4a76d3"/>
<rect x="502.00" y="416.00" width="2.00" height="52.00" fill="#4a76d3"/>
<rect x="545.25" y="416.00" width="2.00" height="52.00" fill="#4a76d3"/>
<rect x="585.25" y="416.00" width="2.00" height="52.00" fill="#4a76d3"/>
<rect x="625.75" y="416.00" width="2.00" height="52.00" fill="#4a76d3"/>
<rect x="665.75" y="416.00" width="2.00" height="52.00" fill="#4a76d3"/>
<rect x="705.85" y="416.00" width="2.00" height="52.00" fill="#4a76d3"/>
<rect x="746.00" y="416.00" width="2.00" height="52.00" fill="#4a76d3"/>
<rect x="789.00" y="416.00" width="2.00" height="52.00" fill="#4a76d3"/>
<rect x="829.00" y="416.00" width="2.00" height="52.00" fill="#4a76d3"/>
<rect x="869.25" y="416.00" width="2.00" height="52.00" fill="#4a76d3"/>
<rect x="909.50" y="416.00" width="2.00" height="52.00" fill="#4a76d3"/>
<rect x="949.75" y="416.00" width="2.00" height="52.00" fill="#4a76d3"/>
<rect x="992.75" y="416.00" width="2.00" height="52.00" fill="#4a76d3"/>
<rect x="1032.75" y="416.00" width="2.00" height="52.00" fill="#4a76d3"/>
<rect x="1072.75" y="416.00" width="2.00" height="52.00" fill="#4a76d3"/>
<rect x="1113.25" y="416.00" width="2.00" height="52.00" fill="#4a76d3"/>
<rect x="1153.25" y="416.00" width="2.00" height="52.00" fill="#4a76d3"/>
<rect x="1194.00" y="416.00" width="2.00" height="52.00" fill="#4a76d3"/>
<rect x="1234.50" y="416.00" width="2.00" height="52.00" fill="#4a76d3"/>
<rect x="218.50" y="368.00" width="2.60" height="100.00" fill="#385cb2"/>
<rect x="54.00" y="368.00" width="1.00" height="100.00" fill="#3f67bd"/>
<rect x="-25.90" y="369.50" width="2.60" height="9.00" fill="#141c33"/>
<rect x="-25.90" y="460.00" width="2.60" height="8.00" fill="#141c33"/>
<rect x="137.70" y="369.50" width="2.60" height="9.00" fill="#141c33"/>
<rect x="137.70" y="460.00" width="2.60" height="8.00" fill="#141c33"/>
<rect x="297.95" y="369.50" width="2.60" height="9.00" fill="#141c33"/>
<rect x="297.95" y="460.00" width="2.60" height="8.00" fill="#141c33"/>
<rect x="381.20" y="369.50" width="2.60" height="9.00" fill="#141c33"/>
<rect x="381.20" y="460.00" width="2.60" height="8.00" fill="#141c33"/>
<rect x="461.70" y="369.50" width="2.60" height="9.00" fill="#141c33"/>
<rect x="461.70" y="460.00" width="2.60" height="8.00" fill="#141c33"/>
<rect x="544.95" y="369.50" width="2.60" height="9.00" fill="#141c33"/>
<rect x="544.95" y="460.00" width="2.60" height="8.00" fill="#141c33"/>
<rect x="625.45" y="369.50" width="2.60" height="9.00" fill="#141c33"/>
<rect x="625.45" y="460.00" width="2.60" height="8.00" fill="#141c33"/>
<rect x="788.70" y="369.50" width="2.60" height="9.00" fill="#141c33"/>
<rect x="788.70" y="460.00" width="2.60" height="8.00" fill="#141c33"/>
<rect x="868.95" y="369.50" width="2.60" height="9.00" fill="#141c33"/>
<rect x="868.95" y="460.00" width="2.60" height="8.00" fill="#141c33"/>
<rect x="949.45" y="369.50" width="2.60" height="9.00" fill="#141c33"/>
<rect x="949.45" y="460.00" width="2.60" height="8.00" fill="#141c33"/>
<rect x="1032.45" y="369.50" width="2.60" height="9.00" fill="#141c33"/>
<rect x="1032.45" y="460.00" width="2.60" height="8.00" fill="#141c33"/>
<rect x="1112.95" y="369.50" width="2.60" height="9.00" fill="#141c33"/>
<rect x="1112.95" y="460.00" width="2.60" height="8.00" fill="#141c33"/>
<rect x="1193.70" y="369.50" width="2.60" height="9.00" fill="#141c33"/>
<rect x="1193.70" y="460.00" width="2.60" height="8.00" fill="#141c33"/>
<path d="M-2.0 421.7 L-1.0 419.9 L0.0 418.5 L1.0 417.9 L2.0 418.4 L3.0 419.6 L4.0 421.4 L5.0 423.0 L6.0 424.0 L7.0 423.6 L8.0 422.2 L9.0 420.6 L10.0 419.3 L11.0 418.7 L12.0 418.9 L13.0 420.0 L14.0 421.5 L15.0 423.0 L16.0 424.0 L17.0 423.8 L18.0 422.6 L19.0 421.2 L20.0 419.9 L21.0 419.3 L22.0 419.4 L23.0 420.2 L24.0 421.5 L25.0 422.9 L26.0 423.9 L27.0 423.9 L28.0 422.9 L29.0 421.5 L30.0 420.3 L31.0 419.5 L32.0 419.4 L33.0 420.0 L34.0 421.2 L35.0 422.6 L36.0 423.8 L37.0 424.0 L38.0 423.1 L39.0 421.6 L40.0 420.2 L41.0 419.2 L42.0 418.9 L43.0 419.5 L44.0 420.7 L45.0 422.2 L46.0 423.6 L47.0 424.1 L48.0 423.2 L49.0 421.6 L50.0 419.9 L51.0 418.7 L52.0 418.2 L53.0 418.7 L54.0 420.0 L55.0 421.7 L56.0 423.3 L57.0 424.1 L58.0 423.3 L59.0 421.6 L60.0 419.7 L61.0 418.3 L62.0 417.6 L63.0 418.0 L64.0 419.4 L65.0 421.2 L66.0 423.0 L67.0 424.1 L68.0 423.4 L69.0 421.8 L70.0 419.9 L71.0 418.3 L72.0 417.6 L73.0 417.8 L74.0 419.1 L75.0 420.9 L76.0 422.8 L77.0 424.0 L78.0 423.7 L79.0 422.2 L80.0 420.4 L81.0 418.8 L82.0 418.0 L83.0 418.2 L84.0 419.2 L85.0 420.9 L86.0 422.6 L87.0 423.9 L88.0 423.8 L89.0 422.6 L90.0 421.0 L91.0 419.6 L92.0 418.7 L93.0 418.8 L94.0 419.6 L95.0 421.0 L96.0 422.6 L97.0 423.8 L98.0 424.0 L99.0 423.0 L100.0 421.6 L101.0 420.2 L102.0 419.4 L103.0 419.3 L104.0 419.9 L105.0 421.1 L106.0 422.5 L107.0 423.7 L108.0 424.1 L109.0 423.3 L110.0 421.9 L111.0 420.6 L112.0 419.6 L113.0 419.3 L114.0 419.8 L115.0 420.8 L116.0 422.2 L117.0 423.5 L118.0 424.1 L119.0 423.4 L120.0 422.1 L121.0 420.6 L122.0 419.4 L123.0 418.9 L124.0 419.2 L125.0 420.3 L126.0 421.8 L127.0 423.2 L128.0 424.1 L129.0 423.5 L130.0 422.1 L131.0 420.4 L132.0 418.9 L133.0 418.2 L134.0 418.5 L135.0 419.5 L136.0 421.2 L137.0 422.9 L138.0 424.0 L139.0 423.6 L140.0 422.1 L141.0 420.2 L142.0 418.6 L143.0 417.7 L144.0 417.8 L145.0 418.9 L146.0 420.7 L147.0 422.5 L148.0 423.9 L149.0 423.8 L150.0 422.3 L151.0 420.4 L152.0 418.7 L153.0 417.7 L154.0 417.7 L155.0 418.7 L156.0 420.4 L157.0 422.3 L158.0 423.7 L159.0 423.9 L160.0 422.6 L161.0 420.9 L162.0 419.2 L163.0 418.1 L164.0 418.0 L165.0 418.8 L166.0 420.4 L167.0 422.2 L168.0 423.6 L169.0 424.0 L170.0 423.0 L171.0 421.5 L172.0 419.9 L173.0 418.9 L174.0 418.7 L175.0 419.3 L176.0 420.6 L177.0 422.1 L178.0 423.5 L179.0 424.1 L180.0 423.3 L181.0 422.0 L182.0 420.6 L183.0 419.6 L184.0 419.2 L185.0 419.6 L186.0 420.7 L187.0 422.1 L188.0 423.4 L189.0 424.1 L190.0 423.6 L191.0 422.3 L192.0 420.9 L193.0 419.8 L194.0 419.3 L195.0 419.6 L196.0 420.5 L197.0 421.8 L198.0 423.2 L199.0 424.0 L200.0 423.7 L201.0 422.5 L202.0 421.0 L203.0 419.7 L204.0 419.0 L205.0 419.1 L206.0 419.9 L207.0 421.3 L208.0 422.9 L209.0 423.9 L210.0 423.8 L211.0 422.5 L212.0 420.8 L213.0 419.3 L214.0 418.4 L215.0 418.3 L216.0 419.2 L217.0 420.7 L218.0 422.4 L219.0 423.8 L220.0 423.9 L221.0 422.6 L222.0 420.8 L223.0 419.0 L224.0 417.9 L225.0 417.7 L226.0 418.5 L227.0 420.1 L228.0 422.0 L229.0 423.6 L230.0 424.0 L231.0 422.8 L232.0 420.9 L233.0 419.1 L234.0 417.9 L235.0 417.6 L236.0 418.3 L237.0 419.8 L238.0 421.8 L239.0 423.4 L240.0 424.1 L241.0 423.1 L242.0 421.4 L243.0 419.6 L244.0 418.3 L245.0 417.9 L246.0 418.5 L247.0 419.9 L248.0 421.7 L249.0 423.3 L250.0 424.1 L251.0 423.4 L252.0 421.9 L253.0 420.3 L254.0 419.1 L255.0 418.6 L256.0 419.0 L257.0 420.2 L258.0 421.7 L259.0 423.2 L260.0 424.1 L261.0 423.6 L262.0 422.4 L263.0 421.0 L264.0 419.8 L265.0 419.2 L266.0 419.4 L267.0 420.3 L268.0 421.7 L269.0 423.1 L270.0 424.0 L271.0 423.8 L272.0 422.7 L273.0 421.3 L274.0 420.1 L275.0 419.4 L276.0 419.4 L277.0 420.2 L278.0 421.4 L279.0 422.8 L280.0 423.9 L281.0 423.9 L282.0 422.9 L283.0 421.4 L284.0 420.0 L285.0 419.1 L286.0 418.9 L287.0 419.6 L288.0 420.9 L289.0 422.5 L290.0 423.7 L291.0 424.0 L292.0 422.9 L293.0 421.3 L294.0 419.7 L295.0 418.5 L296.0 418.2 L297.0 418.8 L298.0 420.2 L299.0 422.0 L300.0 423.5 L301.0 424.1 L302.0 423.0 L303.0 421.3 L304.0 419.5 L305.0 418.1 L306.0 417.6 L307.0 418.2 L308.0 419.6 L309.0 421.5 L310.0 423.2 L311.0 424.1 L312.0 423.2 L313.0 421.5 L314.0 419.6 L315.0 418.1 L316.0 417.5 L317.0 418.0 L318.0 419.4 L319.0 421.2 L320.0 423.0 L321.0 424.1 L322.0 423.5 L323.0 421.9 L324.0 420.1 L325.0 418.6 L326.0 418.0 L327.0 418.3 L328.0 419.5 L329.0 421.2 L330.0 422.9 L331.0 424.0 L332.0 423.7 L333.0 422.4 L334.0 420.7 L335.0 419.4 L336.0 418.7 L337.0 418.8 L338.0 419.8 L339.0 421.3 L340.0 422.8 L341.0 423.9 L342.0 423.9 L343.0 422.8 L344.0 421.4 L345.0 420.1 L346.0 419.3 L347.0 419.3 L348.0 420.0 L349.0 421.3 L350.0 422.7 L351.0 423.8 L352.0 424.0 L353.0 423.1 L354.0 421.7 L355.0 420.4 L356.0 419.5 L357.0 419.3 L358.0 419.9 L359.0 421.1 L360.0 422.5 L361.0 423.7 L362.0 424.1 L363.0 423.2 L364.0 421.8 L365.0 420.4 L366.0 419.3 L367.0 418.9 L368.0 419.4 L369.0 420.5 L370.0 422.0 L371.0 423.4 L372.0 424.1 L373.0 423.3 L374.0 421.8 L375.0 420.1 L376.0 418.8 L377.0 418.2 L378.0 418.6 L379.0 419.8 L380.0 421.5 L381.0 423.1 L382.0 424.1 L383.0 423.4 L384.0 421.8 L385.0 419.9 L386.0 418.4 L387.0 417.7 L388.0 417.9 L389.0 419.2 L390.0 421.0 L391.0 422.8 L392.0 424.0 L393.0 423.6 L394.0 422.0 L395.0 420.1 L396.0 418.5 L397.0 417.6 L398.0 417.8 L399.0 418.9 L400.0 420.7 L401.0 422.6 L402.0 423.9 L403.0 423.8 L404.0 422.4 L405.0 420.6 L406.0 419.0 L407.0 418.0 L408.0 418.1 L409.0 419.1 L410.0 420.7 L411.0 422.4 L412.0 423.8 L413.0 423.9 L414.0 422.8 L415.0 421.2 L416.0 419.7 L417.0 418.8 L418.0 418.7 L419.0 419.5 L420.0 420.8 L421.0 422.4 L422.0 423.7 L423.0 424.0 L424.0 423.1 L425.0 421.8 L426.0 420.4 L427.0 419.5 L428.0 419.2 L429.0 419.8 L430.0 420.9 L431.0 422.3 L432.0 423.5 L433.0 424.1 L434.0 423.4 L435.0 422.1 L436.0 420.7 L437.0 419.7 L438.0 419.3 L439.0 419.7 L440.0 420.7 L441.0 422.1 L442.0 423.4 L443.0 424.1 L444.0 423.5 L445.0 422.2 L446.0 420.7 L447.0 419.5 L448.0 418.9 L449.0 419.2 L450.0 420.1 L451.0 421.6 L452.0 423.1 L453.0 424.0 L454.0 423.6 L455.0 422.3 L456.0 420.6 L457.0 419.1 L458.0 418.3 L459.0 418.4 L460.0 419.4 L461.0 421.0 L462.0 422.7 L463.0 423.9 L464.0 423.7 L465.0 422.3 L466.0 420.5 L467.0 418.8 L468.0 417.8 L469.0 417.8 L470.0 418.7 L471.0 420.4 L472.0 422.3 L473.0 423.8 L474.0 423.9 L475.0 422.5 L476.0 420.6 L477.0 418.9 L478.0 417.7 L479.0 417.6 L480.0 418.5 L481.0 420.1 L482.0 422.1 L483.0 423.6 L484.0 424.0 L485.0 422.8 L486.0 421.1 L487.0 419.4 L488.0 418.2 L489.0 418.0 L490.0 418.7 L491.0 420.2 L492.0 422.0 L493.0 423.5 L494.0 424.1 L495.0 423.2 L496.0 421.7 L497.0 420.1 L498.0 419.0 L499.0 418.6 L500.0 419.2 L501.0 420.4 L502.0 422.0 L503.0 423.4 L504.0 424.1 L505.0 423.5 L506.0 422.2 L507.0 420.7 L508.0 419.7 L509.0 419.2 L510.0 419.5 L511.0 420.5 L512.0 421.9 L513.0 423.2 L514.0 424.1 L515.0 423.7 L516.0 422.5 L517.0 421.1 L518.0 419.9 L519.0 419.4 L520.0 419.5 L521.0 420.4 L522.0 421.7 L523.0 423.0 L524.0 424.0 L525.0 423.8 L526.0 422.6 L527.0 421.1 L528.0 419.8 L529.0 419.0 L530.0 419.0 L531.0 419.8 L532.0 421.2 L533.0 422.7 L534.0 423.9 L535.0 423.9 L536.0 422.7 L537.0 421.0 L538.0 419.4 L539.0 418.4 L540.0 418.3 L541.0 419.0 L542.0 420.5 L543.0 422.2 L544.0 423.7 L545.0 424.0 L546.0 422.8 L547.0 421.0 L548.0 419.2 L549.0 418.0 L550.0 417.7 L551.0 418.4 L552.0 419.9 L553.0 421.8 L554.0 423.4 L555.0 424.1 L556.0 423.0 L557.0 421.2 L558.0 419.3 L559.0 418.0 L560.0 417.5 L561.0 418.2 L562.0 419.6 L563.0 421.5 L564.0 423.2 L565.0 424.1 L566.0 423.3 L567.0 421.6 L568.0 419.8 L569.0 418.5 L570.0 417.9 L571.0 418.4 L572.0 419.7 L573.0 421.5 L574.0 423.1 L575.0 424.1 L576.0 423.5 L577.0 422.1 L578.0 420.5 L579.0 419.2 L580.0 418.6 L581.0 418.9 L582.0 420.0 L583.0 421.5 L584.0 423.0 L585.0 424.0 L586.0 423.7 L587.0 422.6 L588.0 421.1 L589.0 419.9 L590.0 419.3 L591.0 419.4 L592.0 420.2 L593.0 421.5 L594.0 422.9 L595.0 423.9 L596.0 423.9 L597.0 422.9 L598.0 421.5 L599.0 420.2 L600.0 419.5 L601.0 419.4 L602.0 420.1 L603.0 421.3 L604.0 422.7 L605.0 423.8 L606.0 424.0 L607.0 423.0 L608.0 421.6 L609.0 420.1 L610.0 419.2 L611.0 418.9 L612.0 419.5 L613.0 420.7 L614.0 422.3 L615.0 423.6 L616.0 424.1 L617.0 423.1 L618.0 421.5 L619.0 419.9 L620.0 418.6 L621.0 418.2 L622.0 418.7 L623.0 420.0 L624.0 421.8 L625.0 423.3 L626.0 424.1 L627.0 423.2 L628.0 421.5 L629.0 419.7 L630.0 418.2 L631.0 417.6 L632.0 418.1 L633.0 419.4 L634.0 421.3 L635.0 423.1 L636.0 424.1 L637.0 423.4 L638.0 421.7 L639.0 419.8 L640.0 418.3 L641.0 417.5 L642.0 417.9 L643.0 419.2 L644.0 421.0 L645.0 422.8 L646.0 424.0 L647.0 423.6 L648.0 422.1 L649.0 420.3 L650.0 418.8 L651.0 418.0 L652.0 418.2 L653.0 419.3 L654.0 421.0 L655.0 422.7 L656.0 423.9 L657.0 423.8 L658.0 422.6 L659.0 420.9 L660.0 419.5 L661.0 418.7 L662.0 418.8 L663.0 419.6 L664.0 421.1 L665.0 422.6 L666.0 423.8 L667.0 424.0 L668.0 422.9 L669.0 421.5 L670.0 420.2 L671.0 419.4 L672.0 419.3 L673.0 419.9 L674.0 421.1 L675.0 422.5 L676.0 423.7 L677.0 424.0 L678.0 423.2 L679.0 421.9 L680.0 420.5 L681.0 419.6 L682.0 419.3 L683.0 419.8 L684.0 420.9 L685.0 422.3 L686.0 423.5 L687.0 424.1 L688.0 423.4 L689.0 422.0 L690.0 420.5 L691.0 419.4 L692.0 418.9 L693.0 419.3 L694.0 420.3 L695.0 421.8 L696.0 423.3 L697.0 424.1 L698.0 423.5 L699.0 422.0 L700.0 420.3 L701.0 418.9 L702.0 418.2 L703.0 418.5 L704.0 419.6 L705.0 421.3 L706.0 422.9 L707.0 424.0 L708.0 423.6 L709.0 422.0 L710.0 420.2 L711.0 418.6 L712.0 417.7 L713.0 417.9 L714.0 419.0 L715.0 420.7 L716.0 422.6 L717.0 423.9 L718.0 423.7 L719.0 422.2 L720.0 420.3 L721.0 418.6 L722.0 417.6 L723.0 417.7 L724.0 418.7 L725.0 420.4 L726.0 422.3 L727.0 423.8 L728.0 423.9 L729.0 422.6 L730.0 420.8 L731.0 419.1 L732.0 418.1 L733.0 418.0 L734.0 418.9 L735.0 420.5 L736.0 422.2 L737.0 423.6 L738.0 424.0 L739.0 423.0 L740.0 421.4 L741.0 419.9 L742.0 418.9 L743.0 418.7 L744.0 419.3 L745.0 420.6 L746.0 422.2 L747.0 423.5 L748.0 424.1 L749.0 423.3 L750.0 421.9 L751.0 420.5 L752.0 419.5 L753.0 419.2 L754.0 419.7 L755.0 420.7 L756.0 422.1 L757.0 423.4 L758.0 424.1 L759.0 423.5 L760.0 422.3 L761.0 420.9 L762.0 419.8 L763.0 419.3 L764.0 419.6 L765.0 420.5 L766.0 421.9 L767.0 423.2 L768.0 424.1 L769.0 423.6 L770.0 422.4 L771.0 420.9 L772.0 419.6 L773.0 419.0 L774.0 419.1 L775.0 420.0 L776.0 421.4 L777.0 422.9 L778.0 424.0 L779.0 423.7 L780.0 422.4 L781.0 420.8 L782.0 419.2 L783.0 418.3 L784.0 418.3 L785.0 419.2 L786.0 420.8 L787.0 422.5 L788.0 423.8 L789.0 423.9 L790.0 422.5 L791.0 420.7 L792.0 419.0 L793.0 417.8 L794.0 417.7 L795.0 418.6 L796.0 420.2 L797.0 422.1 L798.0 423.6 L799.0 424.0 L800.0 422.7 L801.0 420.9 L802.0 419.0 L803.0 417.8 L804.0 417.6 L805.0 418.3 L806.0 419.9 L807.0 421.8 L808.0 423.5 L809.0 424.1 L810.0 423.0 L811.0 421.3 L812.0 419.5 L813.0 418.3 L814.0 417.9 L815.0 418.6 L816.0 420.0 L817.0 421.7 L818.0 423.3 L819.0 424.1 L820.0 423.3 L821.0 421.9 L822.0 420.3 L823.0 419.1 L824.0 418.6 L825.0 419.1 L826.0 420.2 L827.0 421.8 L828.0 423.2 L829.0 424.1 L830.0 423.6 L831.0 422.3 L832.0 420.9 L833.0 419.8 L834.0 419.2 L835.0 419.5 L836.0 420.4 L837.0 421.7 L838.0 423.1 L839.0 424.0 L840.0 423.8 L841.0 422.7 L842.0 421.3 L843.0 420.1 L844.0 419.4 L845.0 419.5 L846.0 420.2 L847.0 421.5 L848.0 422.9 L849.0 423.9 L850.0 423.9 L851.0 422.8 L852.0 421.3 L853.0 419.9 L854.0 419.1 L855.0 419.0 L856.0 419.7 L857.0 421.0 L858.0 422.5 L859.0 423.8 L860.0 424.0 L861.0 422.9 L862.0 421.2 L863.0 419.6 L864.0 418.5 L865.0 418.2 L866.0 418.9 L867.0 420.3 L868.0 422.0 L869.0 423.5 L870.0 424.0 L871.0 423.0 L872.0 421.2 L873.0 419.4 L874.0 418.1 L875.0 417.6 L876.0 418.2 L877.0 419.7 L878.0 421.6 L879.0 423.3 L880.0 424.1 L881.0 423.2 L882.0 421.4 L883.0 419.5 L884.0 418.1 L885.0 417.5 L886.0 418.0 L887.0 419.4 L888.0 421.3 L889.0 423.1 L890.0 424.1 L891.0 423.4 L892.0 421.8 L893.0 420.0 L894.0 418.6 L895.0 417.9 L896.0 418.3 L897.0 419.5 L898.0 421.2 L899.0 422.9 L900.0 424.0 L901.0 423.7 L902.0 422.3 L903.0 420.7 L904.0 419.3 L905.0 418.7 L906.0 418.9 L907.0 419.8 L908.0 421.3 L909.0 422.9 L910.0 423.9 L911.0 423.8 L912.0 422.7 L913.0 421.3 L914.0 420.0 L915.0 419.3 L916.0 419.3 L917.0 420.1 L918.0 421.3 L919.0 422.8 L920.0 423.8 L921.0 424.0 L922.0 423.0 L923.0 421.7 L924.0 420.4 L925.0 419.5 L926.0 419.4 L927.0 419.9 L928.0 421.1 L929.0 422.5 L930.0 423.7 L931.0 424.0 L932.0 423.2 L933.0 421.8 L934.0 420.3 L935.0 419.2 L936.0 418.9 L937.0 419.4 L938.0 420.6 L939.0 422.1 L940.0 423.5 L941.0 424.1 L942.0 423.3 L943.0 421.7 L944.0 420.0 L945.0 418.7 L946.0 418.2 L947.0 418.6 L948.0 419.8 L949.0 421.5 L950.0 423.2 L951.0 424.1 L952.0 423.4 L953.0 421.7 L954.0 419.9 L955.0 418.4 L956.0 417.7 L957.0 418.0 L958.0 419.2 L959.0 421.0 L960.0 422.9 L961.0 424.0 L962.0 423.5 L963.0 421.9 L964.0 420.0 L965.0 418.4 L966.0 417.6 L967.0 417.8 L968.0 419.0 L969.0 420.8 L970.0 422.6 L971.0 423.9 L972.0 423.7 L973.0 422.3 L974.0 420.5 L975.0 418.9 L976.0 418.0 L977.0 418.1 L978.0 419.1 L979.0 420.7 L980.0 422.5 L981.0 423.8 L982.0 423.9 L983.0 422.7 L984.0 421.1 L985.0 419.7 L986.0 418.8 L987.0 418.7 L988.0 419.5 L989.0 420.9 L990.0 422.4 L991.0 423.7 L992.0 424.0 L993.0 423.1 L994.0 421.7 L995.0 420.3 L996.0 419.4 L997.0 419.2 L998.0 419.8 L999.0 421.0 L1000.0 422.4 L1001.0 423.6 L1002.0 424.1 L1003.0 423.3 L1004.0 422.1 L1005.0 420.7 L1006.0 419.7 L1007.0 419.3 L1008.0 419.7 L1009.0 420.7 L1010.0 422.1 L1011.0 423.4 L1012.0 424.1 L1013.0 423.5 L1014.0 422.2 L1015.0 420.7 L1016.0 419.5 L1017.0 418.9 L1018.0 419.2 L1019.0 420.2 L1020.0 421.7 L1021.0 423.1 L1022.0 424.1 L1023.0 423.6 L1024.0 422.2 L1025.0 420.5 L1026.0 419.0 L1027.0 418.3 L1028.0 418.4 L1029.0 419.4 L1030.0 421.1 L1031.0 422.8 L1032.0 424.0 L1033.0 423.7 L1034.0 422.3 L1035.0 420.4 L1036.0 418.7 L1037.0 417.8 L1038.0 417.8 L1039.0 418.8 L1040.0 420.5 L1041.0 422.4 L1042.0 423.8 L1043.0 423.8 L1044.0 422.5 L1045.0 420.6 L1046.0 418.8 L1047.0 417.7 L1048.0 417.6 L1049.0 418.5 L1050.0 420.2 L1051.0 422.1 L1052.0 423.7 L1053.0 424.0 L1054.0 422.8 L1055.0 421.0 L1056.0 419.3 L1057.0 418.2 L1058.0 418.0 L1059.0 418.8 L1060.0 420.2 L1061.0 422.0 L1062.0 423.5 L1063.0 424.1 L1064.0 423.1 L1065.0 421.6 L1066.0 420.0 L1067.0 418.9 L1068.0 418.6 L1069.0 419.2 L1070.0 420.5 L1071.0 422.0 L1072.0 423.4 L1073.0 424.1 L1074.0 423.4 L1075.0 422.1 L1076.0 420.7 L1077.0 419.6 L1078.0 419.2 L1079.0 419.6 L1080.0 420.6 L1081.0 422.0 L1082.0 423.3 L1083.0 424.1 L1084.0 423.6 L1085.0 422.4 L1086.0 421.1 L1087.0 419.9 L1088.0 419.3 L1089.0 419.5 L1090.0 420.4 L1091.0 421.7 L1092.0 423.1 L1093.0 424.0 L1094.0 423.8 L1095.0 422.6 L1096.0 421.1 L1097.0 419.8 L1098.0 419.0 L1099.0 419.0 L1100.0 419.8 L1101.0 421.2 L1102.0 422.7 L1103.0 423.9 L1104.0 423.9 L1105.0 422.6 L1106.0 421.0 L1107.0 419.4 L1108.0 418.4 L1109.0 418.3 L1110.0 419.1 L1111.0 420.6 L1112.0 422.3 L1113.0 423.7 L1114.0 424.0 L1115.0 422.7 L1116.0 420.9 L1117.0 419.1 L1118.0 417.9 L1119.0 417.7 L1120.0 418.4 L1121.0 420.0 L1122.0 421.9 L1123.0 423.5 L1124.0 424.0 L1125.0 422.9 L1126.0 421.1 L1127.0 419.2 L1128.0 417.9 L1129.0 417.5 L1130.0 418.2 L1131.0 419.7 L1132.0 421.6 L1133.0 423.3 L1134.0 424.1 L1135.0 423.2 L1136.0 421.5 L1137.0 419.7 L1138.0 418.4 L1139.0 417.9 L1140.0 418.4 L1141.0 419.8 L1142.0 421.5 L1143.0 423.2 L1144.0 424.1 L1145.0 423.5 L1146.0 422.0 L1147.0 420.4 L1148.0 419.2 L1149.0 418.6 L1150.0 419.0 L1151.0 420.1 L1152.0 421.6 L1153.0 423.1 L1154.0 424.0 L1155.0 423.7 L1156.0 422.5 L1157.0 421.1 L1158.0 419.9 L1159.0 419.2 L1160.0 419.4 L1161.0 420.3 L1162.0 421.6 L1163.0 423.0 L1164.0 423.9 L1165.0 423.9 L1166.0 422.8 L1167.0 421.4 L1168.0 420.2 L1169.0 419.4 L1170.0 419.4 L1171.0 420.1 L1172.0 421.3 L1173.0 422.7 L1174.0 423.8 L1175.0 424.0 L1176.0 423.0 L1177.0 421.5 L1178.0 420.1 L1179.0 419.1 L1180.0 418.9 L1181.0 419.5 L1182.0 420.8 L1183.0 422.3 L1184.0 423.6 L1185.0 424.0 L1186.0 423.0 L1187.0 421.4 L1188.0 419.8 L1189.0 418.6 L1190.0 418.2 L1191.0 418.8 L1192.0 420.1 L1193.0 421.8 L1194.0 423.4 L1195.0 424.1 L1196.0 423.2 L1197.0 421.4 L1198.0 419.6 L1199.0 418.2 L1200.0 417.6 L1201.0 418.1 L1202.0 419.5 L1202.0 438.1 L1201.0 439.5 L1200.0 440.0 L1199.0 439.4 L1198.0 438.0 L1197.0 436.2 L1196.0 434.4 L1195.0 433.5 L1194.0 434.2 L1193.0 435.8 L1192.0 437.5 L1191.0 438.8 L1190.0 439.4 L1189.0 439.0 L1188.0 437.8 L1187.0 436.2 L1186.0 434.6 L1185.0 433.6 L1184.0 434.0 L1183.0 435.3 L1182.0 436.8 L1181.0 438.1 L1180.0 438.7 L1179.0 438.5 L1178.0 437.5 L1177.0 436.1 L1176.0 434.6 L1175.0 433.6 L1174.0 433.8 L1173.0 434.9 L1172.0 436.3 L1171.0 437.5 L1170.0 438.2 L1169.0 438.2 L1168.0 437.4 L1167.0 436.2 L1166.0 434.8 L1165.0 433.7 L1164.0 433.7 L1163.0 434.6 L1162.0 436.0 L1161.0 437.3 L1160.0 438.2 L1159.0 438.4 L1158.0 437.7 L1157.0 436.5 L1156.0 435.1 L1155.0 433.9 L1154.0 433.6 L1153.0 434.5 L1152.0 436.0 L1151.0 437.5 L1150.0 438.6 L1149.0 439.0 L1148.0 438.4 L1147.0 437.2 L1146.0 435.6 L1145.0 434.1 L1144.0 433.5 L1143.0 434.4 L1142.0 436.1 L1141.0 437.8 L1140.0 439.2 L1139.0 439.7 L1138.0 439.2 L1137.0 437.9 L1136.0 436.1 L1135.0 434.4 L1134.0 433.5 L1133.0 434.3 L1132.0 436.0 L1131.0 437.9 L1130.0 439.4 L1129.0 440.1 L1128.0 439.7 L1127.0 438.4 L1126.0 436.5 L1125.0 434.7 L1124.0 433.6 L1123.0 434.1 L1122.0 435.7 L1121.0 437.6 L1120.0 439.2 L1119.0 439.9 L1118.0 439.7 L1117.0 438.5 L1116.0 436.7 L1115.0 434.9 L1114.0 433.6 L1113.0 433.9 L1112.0 435.3 L1111.0 437.0 L1110.0 438.5 L1109.0 439.3 L1108.0 439.2 L1107.0 438.2 L1106.0 436.6 L1105.0 435.0 L1104.0 433.7 L1103.0 433.7 L1102.0 434.9 L1101.0 436.4 L1100.0 437.8 L1099.0 438.6 L1098.0 438.6 L1097.0 437.8 L1096.0 436.5 L1095.0 435.0 L1094.0 433.8 L1093.0 433.6 L1092.0 434.5 L1091.0 435.9 L1090.0 437.2 L1089.0 438.1 L1088.0 438.3 L1087.0 437.7 L1086.0 436.5 L1085.0 435.2 L1084.0 434.0 L1083.0 433.5 L1082.0 434.3 L1081.0 435.6 L1080.0 437.0 L1079.0 438.0 L1078.0 438.4 L1077.0 438.0 L1076.0 436.9 L1075.0 435.5 L1074.0 434.2 L1073.0 433.5 L1072.0 434.2 L1071.0 435.6 L1070.0 437.1 L1069.0 438.4 L1068.0 439.0 L1067.0 438.7 L1066.0 437.6 L1065.0 436.0 L1064.0 434.5 L1063.0 433.5 L1062.0 434.1 L1061.0 435.6 L1060.0 437.4 L1059.0 438.8 L1058.0 439.6 L1057.0 439.4 L1056.0 438.3 L1055.0 436.6 L1054.0 434.8 L1053.0 433.6 L1052.0 433.9 L1051.0 435.5 L1050.0 437.4 L1049.0 439.1 L1048.0 440.0 L1047.0 439.9 L1046.0 438.8 L1045.0 437.0 L1044.0 435.1 L1043.0 433.8 L1042.0 433.8 L1041.0 435.2 L1040.0 437.1 L1039.0 438.8 L1038.0 439.8 L1037.0 439.8 L1036.0 438.9 L1035.0 437.2 L1034.0 435.3 L1033.0 433.9 L1032.0 433.6 L1031.0 434.8 L1030.0 436.5 L1029.0 438.2 L1028.0 439.2 L1027.0 439.3 L1026.0 438.6 L1025.0 437.1 L1024.0 435.4 L1023.0 434.0 L1022.0 433.5 L1021.0 434.5 L1020.0 435.9 L1019.0 437.4 L1018.0 438.4 L1017.0 438.7 L1016.0 438.1 L1015.0 436.9 L1014.0 435.4 L1013.0 434.1 L1012.0 433.5 L1011.0 434.2 L1010.0 435.5 L1009.0 436.9 L1008.0 437.9 L1007.0 438.3 L1006.0 437.9 L1005.0 436.9 L1004.0 435.5 L1003.0 434.3 L1002.0 433.5 L1001.0 434.0 L1000.0 435.2 L999.0 436.6 L998.0 437.8 L997.0 438.4 L996.0 438.2 L995.0 437.3 L994.0 435.9 L993.0 434.5 L992.0 433.6 L991.0 433.9 L990.0 435.2 L989.0 436.7 L988.0 438.1 L987.0 438.9 L986.0 438.8 L985.0 437.9 L984.0 436.5 L983.0 434.9 L982.0 433.7 L981.0 433.8 L980.0 435.1 L979.0 436.9 L978.0 438.5 L977.0 439.5 L976.0 439.6 L975.0 438.7 L974.0 437.1 L973.0 435.3 L972.0 433.9 L971.0 433.7 L970.0 435.0 L969.0 436.8 L968.0 438.6 L967.0 439.8 L966.0 440.0 L965.0 439.2 L964.0 437.6 L963.0 435.7 L962.0 434.1 L961.0 433.6 L960.0 434.7 L959.0 436.6 L958.0 438.4 L957.0 439.6 L956.0 439.9 L955.0 439.2 L954.0 437.7 L953.0 435.9 L952.0 434.2 L951.0 433.5 L950.0 434.4 L949.0 436.1 L948.0 437.8 L947.0 439.0 L946.0 439.4 L945.0 438.9 L944.0 437.6 L943.0 435.9 L942.0 434.3 L941.0 433.5 L940.0 434.1 L939.0 435.5 L938.0 437.0 L937.0 438.2 L936.0 438.7 L935.0 438.4 L934.0 437.3 L933.0 435.8 L932.0 434.4 L931.0 433.6 L930.0 433.9 L929.0 435.1 L928.0 436.5 L927.0 437.7 L926.0 438.2 L925.0 438.1 L924.0 437.2 L923.0 435.9 L922.0 434.6 L921.0 433.6 L920.0 433.8 L919.0 434.8 L918.0 436.3 L917.0 437.5 L916.0 438.3 L915.0 438.3 L914.0 437.6 L913.0 436.3 L912.0 434.9 L911.0 433.8 L910.0 433.7 L909.0 434.7 L908.0 436.3 L907.0 437.8 L906.0 438.7 L905.0 438.9 L904.0 438.3 L903.0 436.9 L902.0 435.3 L901.0 433.9 L900.0 433.6 L899.0 434.7 L898.0 436.4 L897.0 438.1 L896.0 439.3 L895.0 439.7 L894.0 439.0 L893.0 437.6 L892.0 435.8 L891.0 434.2 L890.0 433.5 L889.0 434.5 L888.0 436.3 L887.0 438.2 L886.0 439.6 L885.0 440.1 L884.0 439.5 L883.0 438.1 L882.0 436.2 L881.0 434.4 L880.0 433.5 L879.0 434.3 L878.0 436.0 L877.0 437.9 L876.0 439.4 L875.0 440.0 L874.0 439.5 L873.0 438.2 L872.0 436.4 L871.0 434.6 L870.0 433.6 L869.0 434.1 L868.0 435.6 L867.0 437.3 L866.0 438.7 L865.0 439.4 L864.0 439.1 L863.0 438.0 L862.0 436.4 L861.0 434.7 L860.0 433.6 L859.0 433.8 L858.0 435.1 L857.0 436.6 L856.0 437.9 L855.0 438.6 L854.0 438.5 L853.0 437.7 L852.0 436.3 L851.0 434.8 L850.0 433.7 L849.0 433.7 L848.0 434.7 L847.0 436.1 L846.0 437.4 L845.0 438.1 L844.0 438.2 L843.0 437.5 L842.0 436.3 L841.0 434.9 L840.0 433.8 L839.0 433.6 L838.0 434.5 L837.0 435.9 L836.0 437.2 L835.0 438.1 L834.0 438.4 L833.0 437.8 L832.0 436.7 L831.0 435.3 L830.0 434.0 L829.0 433.5 L828.0 434.4 L827.0 435.8 L826.0 437.4 L825.0 438.5 L824.0 439.0 L823.0 438.5 L822.0 437.3 L821.0 435.7 L820.0 434.3 L819.0 433.5 L818.0 434.3 L817.0 435.9 L816.0 437.6 L815.0 439.0 L814.0 439.7 L813.0 439.3 L812.0 438.1 L811.0 436.3 L810.0 434.6 L809.0 433.5 L808.0 434.1 L807.0 435.8 L806.0 437.7 L805.0 439.3 L804.0 440.0 L803.0 439.8 L802.0 438.6 L801.0 436.7 L800.0 434.9 L799.0 433.6 L798.0 434.0 L797.0 435.5 L796.0 437.4 L795.0 439.0 L794.0 439.9 L793.0 439.8 L792.0 438.6 L791.0 436.9 L790.0 435.1 L789.0 433.7 L788.0 433.8 L787.0 435.1 L786.0 436.8 L785.0 438.4 L784.0 439.3 L783.0 439.3 L782.0 438.4 L781.0 436.8 L780.0 435.2 L779.0 433.9 L778.0 433.6 L777.0 434.7 L776.0 436.2 L775.0 437.6 L774.0 438.5 L773.0 438.6 L772.0 438.0 L771.0 436.7 L770.0 435.2 L769.0 434.0 L768.0 433.5 L767.0 434.4 L766.0 435.7 L765.0 437.1 L764.0 438.0 L763.0 438.3 L762.0 437.8 L761.0 436.7 L760.0 435.3 L759.0 434.1 L758.0 433.5 L757.0 434.2 L756.0 435.5 L755.0 436.9 L754.0 437.9 L753.0 438.4 L752.0 438.1 L751.0 437.1 L750.0 435.7 L749.0 434.3 L748.0 433.5 L747.0 434.1 L746.0 435.4 L745.0 437.0 L744.0 438.3 L743.0 438.9 L742.0 438.7 L741.0 437.7 L740.0 436.2 L739.0 434.6 L738.0 433.6 L737.0 434.0 L736.0 435.4 L735.0 437.1 L734.0 438.7 L733.0 439.6 L732.0 439.5 L731.0 438.5 L730.0 436.8 L729.0 435.0 L728.0 433.7 L727.0 433.8 L726.0 435.3 L725.0 437.2 L724.0 438.9 L723.0 439.9 L722.0 440.0 L721.0 439.0 L720.0 437.3 L719.0 435.4 L718.0 433.9 L717.0 433.7 L716.0 435.0 L715.0 436.9 L714.0 438.6 L713.0 439.7 L712.0 439.9 L711.0 439.0 L710.0 437.4 L709.0 435.6 L708.0 434.0 L707.0 433.6 L706.0 434.7 L705.0 436.3 L704.0 438.0 L703.0 439.1 L702.0 439.4 L701.0 438.7 L700.0 437.3 L699.0 435.6 L698.0 434.1 L697.0 433.5 L696.0 434.3 L695.0 435.8 L694.0 437.3 L693.0 438.3 L692.0 438.7 L691.0 438.2 L690.0 437.1 L689.0 435.6 L688.0 434.2 L687.0 433.5 L686.0 434.1 L685.0 435.3 L684.0 436.7 L683.0 437.8 L682.0 438.3 L681.0 438.0 L680.0 437.1 L679.0 435.7 L678.0 434.4 L677.0 433.6 L676.0 433.9 L675.0 435.1 L674.0 436.5 L673.0 437.7 L672.0 438.3 L671.0 438.2 L670.0 437.4 L669.0 436.1 L668.0 434.7 L667.0 433.6 L666.0 433.8 L665.0 435.0 L664.0 436.5 L663.0 438.0 L662.0 438.8 L661.0 438.9 L660.0 438.1 L659.0 436.7 L658.0 435.0 L657.0 433.8 L656.0 433.7 L655.0 434.9 L654.0 436.6 L653.0 438.3 L652.0 439.4 L651.0 439.6 L650.0 438.8 L649.0 437.3 L648.0 435.5 L647.0 434.0 L646.0 433.6 L645.0 434.8 L644.0 436.6 L643.0 438.4 L642.0 439.7 L641.0 440.1 L640.0 439.3 L639.0 437.8 L638.0 435.9 L637.0 434.2 L636.0 433.5 L635.0 434.5 L634.0 436.3 L633.0 438.2 L632.0 439.5 L631.0 440.0 L630.0 439.4 L629.0 437.9 L628.0 436.1 L627.0 434.4 L626.0 433.5 L625.0 434.3 L624.0 435.8 L623.0 437.6 L622.0 438.9 L621.0 439.4 L620.0 439.0 L619.0 437.7 L618.0 436.1 L617.0 434.5 L616.0 433.5 L615.0 434.0 L614.0 435.3 L613.0 436.9 L612.0 438.1 L611.0 438.7 L610.0 438.4 L609.0 437.5 L608.0 436.0 L607.0 434.6 L606.0 433.6 L605.0 433.8 L604.0 434.9 L603.0 436.3 L602.0 437.5 L601.0 438.2 L600.0 438.1 L599.0 437.4 L598.0 436.1 L597.0 434.7 L596.0 433.7 L595.0 433.7 L594.0 434.7 L593.0 436.1 L592.0 437.4 L591.0 438.2 L590.0 438.3 L589.0 437.7 L588.0 436.5 L587.0 435.0 L586.0 433.9 L585.0 433.6 L584.0 434.6 L583.0 436.1 L582.0 437.6 L581.0 438.7 L580.0 439.0 L579.0 438.4 L578.0 437.1 L577.0 435.5 L576.0 434.1 L575.0 433.5 L574.0 434.5 L573.0 436.1 L572.0 437.9 L571.0 439.2 L570.0 439.7 L569.0 439.1 L568.0 437.8 L567.0 436.0 L566.0 434.3 L565.0 433.5 L564.0 434.4 L563.0 436.1 L562.0 438.0 L561.0 439.4 L560.0 440.1 L559.0 439.6 L558.0 438.3 L557.0 436.4 L556.0 434.6 L555.0 433.5 L554.0 434.2 L553.0 435.8 L552.0 437.7 L551.0 439.2 L550.0 439.9 L549.0 439.6 L548.0 438.4 L547.0 436.6 L546.0 434.8 L545.0 433.6 L544.0 433.9 L543.0 435.4 L542.0 437.1 L541.0 438.6 L540.0 439.3 L539.0 439.2 L538.0 438.2 L537.0 436.6 L536.0 434.9 L535.0 433.7 L534.0 433.7 L533.0 434.9 L532.0 436.4 L531.0 437.8 L530.0 438.6 L529.0 438.6 L528.0 437.8 L527.0 436.5 L526.0 435.0 L525.0 433.8 L524.0 433.6 L523.0 434.6 L522.0 435.9 L521.0 437.2 L520.0 438.1 L519.0 438.2 L518.0 437.7 L517.0 436.5 L516.0 435.1 L515.0 433.9 L514.0 433.5 L513.0 434.4 L512.0 435.7 L511.0 437.1 L510.0 438.1 L509.0 438.4 L508.0 437.9 L507.0 436.9 L506.0 435.4 L505.0 434.1 L504.0 433.5 L503.0 434.2 L502.0 435.6 L501.0 437.2 L500.0 438.4 L499.0 439.0 L498.0 438.6 L497.0 437.5 L496.0 435.9 L495.0 434.4 L494.0 433.5 L493.0 434.1 L492.0 435.6 L491.0 437.4 L490.0 438.9 L489.0 439.6 L488.0 439.4 L487.0 438.2 L486.0 436.5 L485.0 434.8 L484.0 433.6 L483.0 434.0 L482.0 435.5 L481.0 437.5 L480.0 439.1 L479.0 440.0 L478.0 439.9 L477.0 438.7 L476.0 437.0 L475.0 435.1 L474.0 433.7 L473.0 433.8 L472.0 435.3 L471.0 437.2 L470.0 438.9 L469.0 439.8 L468.0 439.8 L467.0 438.8 L466.0 437.1 L465.0 435.3 L464.0 433.9 L463.0 433.7 L462.0 434.9 L461.0 436.6 L460.0 438.2 L459.0 439.2 L458.0 439.3 L457.0 438.5 L456.0 437.0 L455.0 435.3 L454.0 434.0 L453.0 433.6 L452.0 434.5 L451.0 436.0 L450.0 437.5 L449.0 438.4 L448.0 438.7 L447.0 438.1 L446.0 436.9 L445.0 435.4 L444.0 434.1 L443.0 433.5 L442.0 434.2 L441.0 435.5 L440.0 436.9 L439.0 437.9 L438.0 438.3 L437.0 437.9 L436.0 436.9 L435.0 435.5 L434.0 434.2 L433.0 433.5 L432.0 434.1 L431.0 435.3 L430.0 436.7 L429.0 437.8 L428.0 438.4 L427.0 438.1 L426.0 437.2 L425.0 435.8 L424.0 434.5 L423.0 433.6 L422.0 433.9 L421.0 435.2 L420.0 436.8 L419.0 438.1 L418.0 438.9 L417.0 438.8 L416.0 437.9 L415.0 436.4 L414.0 434.8 L413.0 433.7 L412.0 433.8 L411.0 435.2 L410.0 436.9 L409.0 438.5 L408.0 439.5 L407.0 439.6 L406.0 438.6 L405.0 437.0 L404.0 435.2 L403.0 433.8 L402.0 433.7 L401.0 435.0 L400.0 436.9 L399.0 438.7 L398.0 439.8 L397.0 440.0 L396.0 439.1 L395.0 437.5 L394.0 435.6 L393.0 434.0 L392.0 433.6 L391.0 434.8 L390.0 436.6 L389.0 438.4 L388.0 439.7 L387.0 439.9 L386.0 439.2 L385.0 437.7 L384.0 435.8 L383.0 434.2 L382.0 433.5 L381.0 434.5 L380.0 436.1 L379.0 437.8 L378.0 439.0 L377.0 439.4 L376.0 438.8 L375.0 437.5 L374.0 435.8 L373.0 434.3 L372.0 433.5 L371.0 434.2 L370.0 435.6 L369.0 437.1 L368.0 438.2 L367.0 438.7 L366.0 438.3 L365.0 437.2 L364.0 435.8 L363.0 434.4 L362.0 433.5 L361.0 433.9 L360.0 435.1 L359.0 436.5 L358.0 437.7 L357.0 438.3 L356.0 438.1 L355.0 437.2 L354.0 435.9 L353.0 434.5 L352.0 433.6 L351.0 433.8 L350.0 434.9 L349.0 436.3 L348.0 437.6 L347.0 438.3 L346.0 438.3 L345.0 437.5 L344.0 436.2 L343.0 434.8 L342.0 433.7 L341.0 433.7 L340.0 434.8 L339.0 436.3 L338.0 437.8 L337.0 438.8 L336.0 438.9 L335.0 438.2 L334.0 436.9 L333.0 435.2 L332.0 433.9 L331.0 433.6 L330.0 434.7 L329.0 436.4 L328.0 438.1 L327.0 439.3 L326.0 439.6 L325.0 439.0 L324.0 437.5 L323.0 435.7 L322.0 434.1 L321.0 433.5 L320.0 434.6 L319.0 436.4 L318.0 438.2 L317.0 439.6 L316.0 440.1 L315.0 439.5 L314.0 438.0 L313.0 436.1 L312.0 434.4 L311.0 433.5 L310.0 434.4 L309.0 436.1 L308.0 438.0 L307.0 439.4 L306.0 440.0 L305.0 439.5 L304.0 438.1 L303.0 436.3 L302.0 434.6 L301.0 433.5 L300.0 434.1 L299.0 435.6 L298.0 437.4 L297.0 438.8 L296.0 439.4 L295.0 439.1 L294.0 437.9 L293.0 436.3 L292.0 434.7 L291.0 433.6 L290.0 433.9 L289.0 435.1 L288.0 436.7 L287.0 438.0 L286.0 438.7 L285.0 438.5 L284.0 437.6 L283.0 436.2 L282.0 434.7 L281.0 433.7 L280.0 433.7 L279.0 434.8 L278.0 436.2 L277.0 437.4 L276.0 438.2 L275.0 438.2 L274.0 437.5 L273.0 436.3 L272.0 434.9 L271.0 433.8 L270.0 433.6 L269.0 434.5 L268.0 435.9 L267.0 437.3 L266.0 438.2 L265.0 438.4 L264.0 437.8 L263.0 436.6 L262.0 435.2 L261.0 434.0 L260.0 433.5 L259.0 434.4 L258.0 435.9 L257.0 437.4 L256.0 438.6 L255.0 439.0 L254.0 438.5 L253.0 437.3 L252.0 435.7 L251.0 434.2 L250.0 433.5 L249.0 434.3 L248.0 435.9 L247.0 437.7 L246.0 439.1 L245.0 439.7 L244.0 439.3 L243.0 438.0 L242.0 436.2 L241.0 434.5 L240.0 433.5 L239.0 434.2 L238.0 435.8 L237.0 437.8 L236.0 439.3 L235.0 440.0 L234.0 439.7 L233.0 438.5 L232.0 436.7 L231.0 434.8 L230.0 433.6 L229.0 434.0 L228.0 435.6 L227.0 437.5 L226.0 439.1 L225.0 439.9 L224.0 439.7 L223.0 438.6 L222.0 436.8 L221.0 435.0 L220.0 433.7 L219.0 433.8 L218.0 435.2 L217.0 436.9 L216.0 438.4 L215.0 439.3 L214.0 439.2 L213.0 438.3 L212.0 436.8 L211.0 435.1 L210.0 433.8 L209.0 433.7 L208.0 434.7 L207.0 436.3 L206.0 437.7 L205.0 438.5 L204.0 438.6 L203.0 437.9 L202.0 436.6 L201.0 435.1 L200.0 433.9 L199.0 433.6 L198.0 434.4 L197.0 435.8 L196.0 437.1 L195.0 438.0 L194.0 438.3 L193.0 437.8 L192.0 436.7 L191.0 435.3 L190.0 434.0 L189.0 433.5 L188.0 434.2 L187.0 435.5 L186.0 436.9 L185.0 438.0 L184.0 438.4 L183.0 438.0 L182.0 437.0 L181.0 435.6 L180.0 434.3 L179.0 433.5 L178.0 434.1 L177.0 435.5 L176.0 437.0 L175.0 438.3 L174.0 438.9 L173.0 438.7 L172.0 437.7 L171.0 436.1 L170.0 434.6 L169.0 433.6 L168.0 434.0 L167.0 435.4 L166.0 437.2 L165.0 438.8 L164.0 439.6 L163.0 439.5 L162.0 438.4 L161.0 436.7 L160.0 435.0 L159.0 433.7 L158.0 433.9 L157.0 435.3 L156.0 437.2 L155.0 438.9 L154.0 439.9 L153.0 439.9 L152.0 438.9 L151.0 437.2 L150.0 435.3 L149.0 433.8 L148.0 433.7 L147.0 435.1 L146.0 436.9 L145.0 438.7 L144.0 439.8 L143.0 439.9 L142.0 439.0 L141.0 437.4 L140.0 435.5 L139.0 434.0 L138.0 433.6 L137.0 434.7 L136.0 436.4 L135.0 438.1 L134.0 439.1 L133.0 439.4 L132.0 438.7 L131.0 437.2 L130.0 435.5 L129.0 434.1 L128.0 433.5 L127.0 434.4 L126.0 435.8 L125.0 437.3 L124.0 438.4 L123.0 438.7 L122.0 438.2 L121.0 437.0 L120.0 435.5 L119.0 434.2 L118.0 433.5 L117.0 434.1 L116.0 435.4 L115.0 436.8 L114.0 437.8 L113.0 438.3 L112.0 438.0 L111.0 437.0 L110.0 435.7 L109.0 434.3 L108.0 433.5 L107.0 433.9 L106.0 435.1 L105.0 436.5 L104.0 437.7 L103.0 438.3 L102.0 438.2 L101.0 437.4 L100.0 436.0 L99.0 434.6 L98.0 433.6 L97.0 433.8 L96.0 435.0 L95.0 436.6 L94.0 438.0 L93.0 438.8 L92.0 438.9 L91.0 438.0 L90.0 436.6 L89.0 435.0 L88.0 433.8 L87.0 433.7 L86.0 435.0 L85.0 436.7 L84.0 438.4 L83.0 439.4 L82.0 439.6 L81.0 438.8 L80.0 437.2 L79.0 435.4 L78.0 433.9 L77.0 433.6 L76.0 434.8 L75.0 436.7 L74.0 438.5 L73.0 439.8 L72.0 440.0 L71.0 439.3 L70.0 437.7 L69.0 435.8 L68.0 434.2 L67.0 433.5 L66.0 434.6 L65.0 436.4 L64.0 438.2 L63.0 439.6 L62.0 440.0 L61.0 439.3 L60.0 437.9 L59.0 436.0 L58.0 434.3 L57.0 433.5 L56.0 434.3 L55.0 435.9 L54.0 437.6 L53.0 438.9 L52.0 439.4 L51.0 438.9 L50.0 437.7 L49.0 436.0 L48.0 434.4 L47.0 433.5 L46.0 434.0 L45.0 435.4 L44.0 436.9 L43.0 438.1 L42.0 438.7 L41.0 438.4 L40.0 437.4 L39.0 436.0 L38.0 434.5 L37.0 433.6 L36.0 433.8 L35.0 435.0 L34.0 436.4 L33.0 437.6 L32.0 438.2 L31.0 438.1 L30.0 437.3 L29.0 436.1 L28.0 434.7 L27.0 433.7 L26.0 433.7 L25.0 434.7 L24.0 436.1 L23.0 437.4 L22.0 438.2 L21.0 438.3 L20.0 437.7 L19.0 436.4 L18.0 435.0 L17.0 433.8 L16.0 433.6 L15.0 434.6 L14.0 436.1 L13.0 437.6 L12.0 438.7 L11.0 438.9 L10.0 438.3 L9.0 437.0 L8.0 435.4 L7.0 434.0 L6.0 433.6 L5.0 434.6 L4.0 436.2 L3.0 438.0 L2.0 439.2 L1.0 439.7 L0.0 439.1 L-1.0 437.7 L-2.0 435.9Z" fill="#1d1d1f"/>
<path d="M-2.0 446.5 L-1.0 445.1 L0.0 444.3 L1.0 444.5 L2.0 445.5 L3.0 447.1 L4.0 448.7 L5.0 449.9 L6.0 449.9 L7.0 448.7 L8.0 447.2 L9.0 445.9 L10.0 445.1 L11.0 445.1 L12.0 445.8 L13.0 447.2 L14.0 448.6 L15.0 449.8 L16.0 450.0 L17.0 449.1 L18.0 447.7 L19.0 446.4 L20.0 445.5 L21.0 445.4 L22.0 445.9 L23.0 447.1 L24.0 448.5 L25.0 449.7 L26.0 450.1 L27.0 449.3 L28.0 447.9 L29.0 446.5 L30.0 445.5 L31.0 445.2 L32.0 445.6 L33.0 446.7 L34.0 448.1 L35.0 449.5 L36.0 450.1 L37.0 449.4 L38.0 447.9 L39.0 446.4 L40.0 445.1 L41.0 444.6 L42.0 444.9 L43.0 446.0 L44.0 447.6 L45.0 449.2 L46.0 450.1 L47.0 449.5 L48.0 447.9 L49.0 446.2 L50.0 444.7 L51.0 443.9 L52.0 444.2 L53.0 445.3 L54.0 447.0 L55.0 448.8 L56.0 450.0 L57.0 449.6 L58.0 448.1 L59.0 446.1 L60.0 444.5 L61.0 443.6 L62.0 443.7 L63.0 444.8 L64.0 446.6 L65.0 448.5 L66.0 449.9 L67.0 449.8 L68.0 448.3 L69.0 446.5 L70.0 444.8 L71.0 443.8 L72.0 443.8 L73.0 444.8 L74.0 446.5 L75.0 448.3 L76.0 449.7 L77.0 449.9 L78.0 448.7 L79.0 447.0 L80.0 445.4 L81.0 444.4 L82.0 444.3 L83.0 445.1 L84.0 446.6 L85.0 448.3 L86.0 449.6 L87.0 450.0 L88.0 449.1 L89.0 447.6 L90.0 446.2 L91.0 445.2 L92.0 445.0 L93.0 445.6 L94.0 446.8 L95.0 448.2 L96.0 449.5 L97.0 450.1 L98.0 449.4 L99.0 448.1 L100.0 446.7 L101.0 445.7 L102.0 445.3 L103.0 445.7 L104.0 446.7 L105.0 448.1 L106.0 449.4 L107.0 450.1 L108.0 449.6 L109.0 448.3 L110.0 446.9 L111.0 445.7 L112.0 445.2 L113.0 445.4 L114.0 446.3 L115.0 447.7 L116.0 449.1 L117.0 450.0 L118.0 449.7 L119.0 448.4 L120.0 446.8 L121.0 445.4 L122.0 444.6 L123.0 444.7 L124.0 445.7 L125.0 447.1 L126.0 448.8 L127.0 449.9 L128.0 449.8 L129.0 448.4 L130.0 446.6 L131.0 445.0 L132.0 444.0 L133.0 444.0 L134.0 444.9 L135.0 446.5 L136.0 448.4 L137.0 449.8 L138.0 449.9 L139.0 448.6 L140.0 446.7 L141.0 444.9 L142.0 443.7 L143.0 443.6 L144.0 444.4 L145.0 446.1 L146.0 448.0 L147.0 449.6 L148.0 450.0 L149.0 448.8 L150.0 447.0 L151.0 445.2 L152.0 444.0 L153.0 443.7 L154.0 444.4 L155.0 446.0 L156.0 447.8 L157.0 449.4 L158.0 450.1 L159.0 449.1 L160.0 447.5 L161.0 445.8 L162.0 444.6 L163.0 444.3 L164.0 444.8 L165.0 446.1 L166.0 447.8 L167.0 449.3 L168.0 450.1 L169.0 449.4 L170.0 448.1 L171.0 446.6 L172.0 445.4 L173.0 445.0 L174.0 445.3 L175.0 446.4 L176.0 447.8 L177.0 449.2 L178.0 450.1 L179.0 449.7 L180.0 448.5 L181.0 447.1 L182.0 445.9 L183.0 445.4 L184.0 445.5 L185.0 446.4 L186.0 447.7 L187.0 449.1 L188.0 450.0 L189.0 449.8 L190.0 448.7 L191.0 447.3 L192.0 446.0 L193.0 445.3 L194.0 445.3 L195.0 446.0 L196.0 447.3 L197.0 448.8 L198.0 449.9 L199.0 449.9 L200.0 448.8 L201.0 447.2 L202.0 445.8 L203.0 444.8 L204.0 444.6 L205.0 445.3 L206.0 446.7 L207.0 448.3 L208.0 449.7 L209.0 450.0 L210.0 448.9 L211.0 447.2 L212.0 445.4 L213.0 444.2 L214.0 443.9 L215.0 444.6 L216.0 446.0 L217.0 447.9 L218.0 449.5 L219.0 450.1 L220.0 449.0 L221.0 447.2 L222.0 445.4 L223.0 444.0 L224.0 443.5 L225.0 444.1 L226.0 445.6 L227.0 447.5 L228.0 449.2 L229.0 450.1 L230.0 449.2 L231.0 447.5 L232.0 445.7 L233.0 444.2 L234.0 443.7 L235.0 444.1 L236.0 445.5 L237.0 447.3 L238.0 449.0 L239.0 450.1 L240.0 449.5 L241.0 448.0 L242.0 446.3 L243.0 444.9 L244.0 444.3 L245.0 444.6 L246.0 445.7 L247.0 447.3 L248.0 448.9 L249.0 450.0 L250.0 449.7 L251.0 448.5 L252.0 447.0 L253.0 445.7 L254.0 445.0 L255.0 445.1 L256.0 446.0 L257.0 447.4 L258.0 448.9 L259.0 449.9 L260.0 449.9 L261.0 448.9 L262.0 447.5 L263.0 446.2 L264.0 445.5 L265.0 445.4 L266.0 446.1 L267.0 447.3 L268.0 448.7 L269.0 449.8 L270.0 450.0 L271.0 449.1 L272.0 447.7 L273.0 446.3 L274.0 445.4 L275.0 445.2 L276.0 445.7 L277.0 446.9 L278.0 448.4 L279.0 449.6 L280.0 450.1 L281.0 449.2 L282.0 447.7 L283.0 446.1 L284.0 445.0 L285.0 444.6 L286.0 445.0 L287.0 446.3 L288.0 447.9 L289.0 449.4 L290.0 450.1 L291.0 449.3 L292.0 447.7 L293.0 445.9 L294.0 444.5 L295.0 443.9 L296.0 444.3 L297.0 445.6 L298.0 447.3 L299.0 449.1 L300.0 450.1 L301.0 449.4 L302.0 447.8 L303.0 445.8 L304.0 444.3 L305.0 443.5 L306.0 443.8 L307.0 445.1 L308.0 446.9 L309.0 448.8 L310.0 450.0 L311.0 449.6 L312.0 448.1 L313.0 446.2 L314.0 444.6 L315.0 443.7 L316.0 443.9 L317.0 445.0 L318.0 446.8 L319.0 448.6 L320.0 449.9 L321.0 449.8 L322.0 448.5 L323.0 446.8 L324.0 445.2 L325.0 444.4 L326.0 444.4 L327.0 445.3 L328.0 446.9 L329.0 448.5 L330.0 449.8 L331.0 450.0 L332.0 448.9 L333.0 447.4 L334.0 446.0 L335.0 445.1 L336.0 445.0 L337.0 445.7 L338.0 447.0 L339.0 448.5 L340.0 449.7 L341.0 450.0 L342.0 449.2 L343.0 447.9 L344.0 446.5 L345.0 445.6 L346.0 445.3 L347.0 445.8 L348.0 446.9 L349.0 448.3 L350.0 449.5 L351.0 450.1 L352.0 449.4 L353.0 448.1 L354.0 446.7 L355.0 445.6 L356.0 445.2 L357.0 445.5 L358.0 446.5 L359.0 448.0 L360.0 449.3 L361.0 450.1 L362.0 449.5 L363.0 448.1 L364.0 446.6 L365.0 445.2 L366.0 444.6 L367.0 444.8 L368.0 445.9 L369.0 447.4 L370.0 449.0 L371.0 450.0 L372.0 449.6 L373.0 448.2 L374.0 446.4 L375.0 444.8 L376.0 444.0 L377.0 444.1 L378.0 445.1 L379.0 446.8 L380.0 448.6 L381.0 449.9 L382.0 449.7 L383.0 448.3 L384.0 446.4 L385.0 444.7 L386.0 443.6 L387.0 443.6 L388.0 444.7 L389.0 446.4 L390.0 448.3 L391.0 449.8 L392.0 449.9 L393.0 448.6 L394.0 446.7 L395.0 444.9 L396.0 443.9 L397.0 443.8 L398.0 444.6 L399.0 446.3 L400.0 448.1 L401.0 449.6 L402.0 450.0 L403.0 448.9 L404.0 447.2 L405.0 445.6 L406.0 444.5 L407.0 444.3 L408.0 445.0 L409.0 446.4 L410.0 448.1 L411.0 449.5 L412.0 450.1 L413.0 449.3 L414.0 447.8 L415.0 446.3 L416.0 445.3 L417.0 445.0 L418.0 445.4 L419.0 446.6 L420.0 448.1 L421.0 449.4 L422.0 450.1 L423.0 449.5 L424.0 448.3 L425.0 446.9 L426.0 445.8 L427.0 445.3 L428.0 445.6 L429.0 446.6 L430.0 447.9 L431.0 449.2 L432.0 450.1 L433.0 449.7 L434.0 448.5 L435.0 447.1 L436.0 445.9 L437.0 445.2 L438.0 445.3 L439.0 446.2 L440.0 447.6 L441.0 449.0 L442.0 450.0 L443.0 449.8 L444.0 448.6 L445.0 447.0 L446.0 445.6 L447.0 444.7 L448.0 444.7 L449.0 445.5 L450.0 447.0 L451.0 448.6 L452.0 449.8 L453.0 449.9 L454.0 448.6 L455.0 446.9 L456.0 445.2 L457.0 444.1 L458.0 443.9 L459.0 444.8 L460.0 446.3 L461.0 448.1 L462.0 449.6 L463.0 450.0 L464.0 448.8 L465.0 446.9 L466.0 445.1 L467.0 443.8 L468.0 443.5 L469.0 444.3 L470.0 445.9 L471.0 447.8 L472.0 449.4 L473.0 450.1 L474.0 449.0 L475.0 447.2 L476.0 445.4 L477.0 444.1 L478.0 443.7 L479.0 444.3 L480.0 445.7 L481.0 447.6 L482.0 449.3 L483.0 450.1 L484.0 449.3 L485.0 447.7 L486.0 446.0 L487.0 444.7 L488.0 444.3 L489.0 444.7 L490.0 446.0 L491.0 447.6 L492.0 449.2 L493.0 450.1 L494.0 449.6 L495.0 448.2 L496.0 446.7 L497.0 445.5 L498.0 445.0 L499.0 445.2 L500.0 446.2 L501.0 447.6 L502.0 449.1 L503.0 450.0 L504.0 449.8 L505.0 448.6 L506.0 447.2 L507.0 446.0 L508.0 445.4 L509.0 445.5 L510.0 446.3 L511.0 447.5 L512.0 448.9 L513.0 449.9 L514.0 449.9 L515.0 448.9 L516.0 447.5 L517.0 446.2 L518.0 445.3 L519.0 445.2 L520.0 445.9 L521.0 447.1 L522.0 448.6 L523.0 449.8 L524.0 450.0 L525.0 449.0 L526.0 447.4 L527.0 445.9 L528.0 444.9 L529.0 444.6 L530.0 445.2 L531.0 446.5 L532.0 448.1 L533.0 449.6 L534.0 450.1 L535.0 449.0 L536.0 447.4 L537.0 445.6 L538.0 444.3 L539.0 443.9 L540.0 444.4 L541.0 445.8 L542.0 447.6 L543.0 449.3 L544.0 450.1 L545.0 449.2 L546.0 447.5 L547.0 445.6 L548.0 444.1 L549.0 443.5 L550.0 444.0 L551.0 445.4 L552.0 447.2 L553.0 449.0 L554.0 450.1 L555.0 449.4 L556.0 447.8 L557.0 445.9 L558.0 444.4 L559.0 443.7 L560.0 444.0 L561.0 445.3 L562.0 447.1 L563.0 448.9 L564.0 450.0 L565.0 449.6 L566.0 448.2 L567.0 446.5 L568.0 445.0 L569.0 444.3 L570.0 444.5 L571.0 445.5 L572.0 447.1 L573.0 448.8 L574.0 449.9 L575.0 449.8 L576.0 448.7 L577.0 447.1 L578.0 445.8 L579.0 445.0 L580.0 445.1 L581.0 445.9 L582.0 447.2 L583.0 448.7 L584.0 449.8 L585.0 450.0 L586.0 449.0 L587.0 447.6 L588.0 446.3 L589.0 445.5 L590.0 445.4 L591.0 446.0 L592.0 447.2 L593.0 448.5 L594.0 449.7 L595.0 450.0 L596.0 449.2 L597.0 447.9 L598.0 446.5 L599.0 445.5 L600.0 445.2 L601.0 445.6 L602.0 446.8 L603.0 448.2 L604.0 449.5 L605.0 450.1 L606.0 449.3 L607.0 447.9 L608.0 446.3 L609.0 445.1 L610.0 444.6 L611.0 444.9 L612.0 446.1 L613.0 447.7 L614.0 449.2 L615.0 450.1 L616.0 449.4 L617.0 447.9 L618.0 446.1 L619.0 444.6 L620.0 443.9 L621.0 444.2 L622.0 445.4 L623.0 447.1 L624.0 448.9 L625.0 450.0 L626.0 449.6 L627.0 448.0 L628.0 446.1 L629.0 444.4 L630.0 443.6 L631.0 443.7 L632.0 444.9 L633.0 446.7 L634.0 448.6 L635.0 449.9 L636.0 449.7 L637.0 448.3 L638.0 446.4 L639.0 444.7 L640.0 443.8 L641.0 443.8 L642.0 444.9 L643.0 446.5 L644.0 448.4 L645.0 449.8 L646.0 449.9 L647.0 448.7 L648.0 447.0 L649.0 445.4 L650.0 444.4 L651.0 444.4 L652.0 445.2 L653.0 446.7 L654.0 448.3 L655.0 449.7 L656.0 450.0 L657.0 449.0 L658.0 447.6 L659.0 446.1 L660.0 445.2 L661.0 445.0 L662.0 445.6 L663.0 446.8 L664.0 448.3 L665.0 449.6 L666.0 450.1 L667.0 449.3 L668.0 448.0 L669.0 446.7 L670.0 445.7 L671.0 445.3 L672.0 445.7 L673.0 446.8 L674.0 448.2 L675.0 449.4 L676.0 450.1 L677.0 449.5 L678.0 448.3 L679.0 446.8 L680.0 445.7 L681.0 445.2 L682.0 445.4 L683.0 446.4 L684.0 447.8 L685.0 449.2 L686.0 450.1 L687.0 449.6 L688.0 448.3 L689.0 446.7 L690.0 445.4 L691.0 444.6 L692.0 444.8 L693.0 445.7 L694.0 447.2 L695.0 448.8 L696.0 450.0 L697.0 449.7 L698.0 448.4 L699.0 446.6 L700.0 445.0 L701.0 444.0 L702.0 444.0 L703.0 445.0 L704.0 446.6 L705.0 448.4 L706.0 449.8 L707.0 449.9 L708.0 448.5 L709.0 446.6 L710.0 444.8 L711.0 443.7 L712.0 443.6 L713.0 444.5 L714.0 446.2 L715.0 448.1 L716.0 449.6 L717.0 450.0 L718.0 448.8 L719.0 446.9 L720.0 445.1 L721.0 443.9 L722.0 443.7 L723.0 444.5 L724.0 446.0 L725.0 447.9 L726.0 449.5 L727.0 450.1 L728.0 449.1 L729.0 447.4 L730.0 445.8 L731.0 444.6 L732.0 444.3 L733.0 444.9 L734.0 446.2 L735.0 447.9 L736.0 449.4 L737.0 450.1 L738.0 449.4 L739.0 448.0 L740.0 446.5 L741.0 445.4 L742.0 445.0 L743.0 445.3 L744.0 446.4 L745.0 447.9 L746.0 449.3 L747.0 450.1 L748.0 449.6 L749.0 448.4 L750.0 447.0 L751.0 445.9 L752.0 445.4 L753.0 445.6 L754.0 446.4 L755.0 447.8 L756.0 449.1 L757.0 450.0 L758.0 449.8 L759.0 448.6 L760.0 447.2 L761.0 446.0 L762.0 445.3 L763.0 445.3 L764.0 446.1 L765.0 447.4 L766.0 448.8 L767.0 449.9 L768.0 449.9 L769.0 448.7 L770.0 447.2 L771.0 445.7 L772.0 444.8 L773.0 444.6 L774.0 445.4 L775.0 446.8 L776.0 448.4 L777.0 449.7 L778.0 450.0 L779.0 448.8 L780.0 447.1 L781.0 445.4 L782.0 444.2 L783.0 443.9 L784.0 444.6 L785.0 446.1 L786.0 447.9 L787.0 449.5 L788.0 450.0 L789.0 449.0 L790.0 447.1 L791.0 445.3 L792.0 443.9 L793.0 443.5 L794.0 444.1 L795.0 445.6 L796.0 447.5 L797.0 449.3 L798.0 450.1 L799.0 449.2 L800.0 447.5 L801.0 445.6 L802.0 444.2 L803.0 443.7 L804.0 444.2 L805.0 445.5 L806.0 447.4 L807.0 449.1 L808.0 450.1 L809.0 449.5 L810.0 447.9 L811.0 446.2 L812.0 444.9 L813.0 444.3 L814.0 444.6 L815.0 445.8 L816.0 447.4 L817.0 449.0 L818.0 450.0 L819.0 449.7 L820.0 448.4 L821.0 446.9 L822.0 445.6 L823.0 445.0 L824.0 445.2 L825.0 446.1 L826.0 447.5 L827.0 448.9 L828.0 449.9 L829.0 449.9 L830.0 448.8 L831.0 447.4 L832.0 446.2 L833.0 445.4 L834.0 445.4 L835.0 446.1 L836.0 447.4 L837.0 448.7 L838.0 449.8 L839.0 450.0 L840.0 449.0 L841.0 447.6 L842.0 446.3 L843.0 445.4 L844.0 445.2 L845.0 445.8 L846.0 447.0 L847.0 448.4 L848.0 449.7 L849.0 450.0 L850.0 449.1 L851.0 447.6 L852.0 446.1 L853.0 444.9 L854.0 444.6 L855.0 445.1 L856.0 446.3 L857.0 447.9 L858.0 449.4 L859.0 450.1 L860.0 449.2 L861.0 447.6 L862.0 445.8 L863.0 444.4 L864.0 443.9 L865.0 444.3 L866.0 445.6 L867.0 447.4 L868.0 449.1 L869.0 450.1 L870.0 449.4 L871.0 447.7 L872.0 445.8 L873.0 444.2 L874.0 443.5 L875.0 443.9 L876.0 445.2 L877.0 447.0 L878.0 448.8 L879.0 450.0 L880.0 449.6 L881.0 448.0 L882.0 446.1 L883.0 444.5 L884.0 443.7 L885.0 443.9 L886.0 445.1 L887.0 446.8 L888.0 448.7 L889.0 449.9 L890.0 449.8 L891.0 448.4 L892.0 446.7 L893.0 445.2 L894.0 444.4 L895.0 444.4 L896.0 445.4 L897.0 446.9 L898.0 448.6 L899.0 449.8 L900.0 449.9 L901.0 448.8 L902.0 447.3 L903.0 445.9 L904.0 445.1 L905.0 445.0 L906.0 445.8 L907.0 447.0 L908.0 448.5 L909.0 449.7 L910.0 450.0 L911.0 449.2 L912.0 447.8 L913.0 446.5 L914.0 445.6 L915.0 445.4 L916.0 445.9 L917.0 447.0 L918.0 448.4 L919.0 449.6 L920.0 450.1 L921.0 449.3 L922.0 448.0 L923.0 446.6 L924.0 445.6 L925.0 445.2 L926.0 445.5 L927.0 446.6 L928.0 448.0 L929.0 449.4 L930.0 450.1 L931.0 449.5 L932.0 448.1 L933.0 446.5 L934.0 445.2 L935.0 444.6 L936.0 444.9 L937.0 445.9 L938.0 447.5 L939.0 449.1 L940.0 450.0 L941.0 449.6 L942.0 448.1 L943.0 446.3 L944.0 444.8 L945.0 443.9 L946.0 444.1 L947.0 445.2 L948.0 446.9 L949.0 448.7 L950.0 449.9 L951.0 449.7 L952.0 448.2 L953.0 446.3 L954.0 444.6 L955.0 443.6 L956.0 443.7 L957.0 444.7 L958.0 446.5 L959.0 448.4 L960.0 449.8 L961.0 449.9 L962.0 448.5 L963.0 446.6 L964.0 444.9 L965.0 443.8 L966.0 443.8 L967.0 444.7 L968.0 446.3 L969.0 448.2 L970.0 449.7 L971.0 450.0 L972.0 448.8 L973.0 447.2 L974.0 445.5 L975.0 444.5 L976.0 444.3 L977.0 445.0 L978.0 446.5 L979.0 448.1 L980.0 449.5 L981.0 450.1 L982.0 449.2 L983.0 447.8 L984.0 446.3 L985.0 445.3 L986.0 445.0 L987.0 445.5 L988.0 446.6 L989.0 448.1 L990.0 449.4 L991.0 450.1 L992.0 449.5 L993.0 448.2 L994.0 446.8 L995.0 445.8 L996.0 445.3 L997.0 445.7 L998.0 446.6 L999.0 448.0 L1000.0 449.3 L1001.0 450.1 L1002.0 449.6 L1003.0 448.4 L1004.0 447.0 L1005.0 445.8 L1006.0 445.2 L1007.0 445.4 L1008.0 446.3 L1009.0 447.6 L1010.0 449.0 L1011.0 450.0 L1012.0 449.7 L1013.0 448.5 L1014.0 446.9 L1015.0 445.5 L1016.0 444.7 L1017.0 444.7 L1018.0 445.6 L1019.0 447.0 L1020.0 448.6 L1021.0 449.9 L1022.0 449.8 L1023.0 448.6 L1024.0 446.8 L1025.0 445.1 L1026.0 444.1 L1027.0 444.0 L1028.0 444.8 L1029.0 446.4 L1030.0 448.2 L1031.0 449.7 L1032.0 450.0 L1033.0 448.7 L1034.0 446.8 L1035.0 445.0 L1036.0 443.8 L1037.0 443.5 L1038.0 444.3 L1039.0 445.9 L1040.0 447.9 L1041.0 449.5 L1042.0 450.0 L1043.0 448.9 L1044.0 447.1 L1045.0 445.3 L1046.0 444.0 L1047.0 443.7 L1048.0 444.3 L1049.0 445.8 L1050.0 447.7 L1051.0 449.3 L1052.0 450.1 L1053.0 449.3 L1054.0 447.7 L1055.0 446.0 L1056.0 444.7 L1057.0 444.3 L1058.0 444.8 L1059.0 446.0 L1060.0 447.7 L1061.0 449.2 L1062.0 450.1 L1063.0 449.5 L1064.0 448.2 L1065.0 446.7 L1066.0 445.5 L1067.0 445.0 L1068.0 445.3 L1069.0 446.3 L1070.0 447.7 L1071.0 449.1 L1072.0 450.0 L1073.0 449.7 L1074.0 448.6 L1075.0 447.2 L1076.0 446.0 L1077.0 445.4 L1078.0 445.5 L1079.0 446.3 L1080.0 447.6 L1081.0 449.0 L1082.0 449.9 L1083.0 449.9 L1084.0 448.8 L1085.0 447.4 L1086.0 446.1 L1087.0 445.3 L1088.0 445.2 L1089.0 445.9 L1090.0 447.2 L1091.0 448.7 L1092.0 449.8 L1093.0 450.0 L1094.0 448.9 L1095.0 447.4 L1096.0 445.9 L1097.0 444.8 L1098.0 444.6 L1099.0 445.2 L1100.0 446.6 L1101.0 448.2 L1102.0 449.6 L1103.0 450.0 L1104.0 449.0 L1105.0 447.3 L1106.0 445.6 L1107.0 444.3 L1108.0 443.9 L1109.0 444.5 L1110.0 445.9 L1111.0 447.7 L1112.0 449.3 L1113.0 450.1 L1114.0 449.1 L1115.0 447.4 L1116.0 445.5 L1117.0 444.1 L1118.0 443.5 L1119.0 444.0 L1120.0 445.4 L1121.0 447.3 L1122.0 449.1 L1123.0 450.1 L1124.0 449.4 L1125.0 447.7 L1126.0 445.8 L1127.0 444.3 L1128.0 443.7 L1129.0 444.1 L1130.0 445.3 L1131.0 447.1 L1132.0 448.9 L1133.0 450.0 L1134.0 449.6 L1135.0 448.1 L1136.0 446.4 L1137.0 445.0 L1138.0 444.3 L1139.0 444.5 L1140.0 445.6 L1141.0 447.2 L1142.0 448.8 L1143.0 449.9 L1144.0 449.8 L1145.0 448.6 L1146.0 447.1 L1147.0 445.8 L1148.0 445.0 L1149.0 445.1 L1150.0 445.9 L1151.0 447.3 L1152.0 448.7 L1153.0 449.8 L1154.0 449.9 L1155.0 449.0 L1156.0 447.6 L1157.0 446.3 L1158.0 445.5 L1159.0 445.4 L1160.0 446.0 L1161.0 447.2 L1162.0 448.6 L1163.0 449.7 L1164.0 450.0 L1165.0 449.2 L1166.0 447.8 L1167.0 446.4 L1168.0 445.5 L1169.0 445.2 L1170.0 445.7 L1171.0 446.8 L1172.0 448.3 L1173.0 449.5 L1174.0 450.1 L1175.0 449.3 L1176.0 447.8 L1177.0 446.3 L1178.0 445.1 L1179.0 444.6 L1180.0 445.0 L1181.0 446.1 L1182.0 447.7 L1183.0 449.3 L1184.0 450.1 L1185.0 449.4 L1186.0 447.8 L1187.0 446.0 L1188.0 444.6 L1189.0 443.9 L1190.0 444.2 L1191.0 445.4 L1192.0 447.2 L1193.0 448.9 L1194.0 450.0 L1195.0 449.5 L1196.0 447.9 L1197.0 446.0 L1198.0 444.4 L1199.0 443.6 L1200.0 443.8 L1201.0 445.0 L1202.0 446.8 L1202.0 462.8 L1201.0 464.6 L1200.0 465.8 L1199.0 466.0 L1198.0 465.2 L1197.0 463.6 L1196.0 461.7 L1195.0 460.1 L1194.0 459.6 L1193.0 460.7 L1192.0 462.4 L1191.0 464.2 L1190.0 465.4 L1189.0 465.7 L1188.0 465.0 L1187.0 463.6 L1186.0 461.8 L1185.0 460.2 L1184.0 459.5 L1183.0 460.3 L1182.0 461.9 L1181.0 463.5 L1180.0 464.6 L1179.0 465.0 L1178.0 464.5 L1177.0 463.3 L1176.0 461.8 L1175.0 460.3 L1174.0 459.5 L1173.0 460.1 L1172.0 461.3 L1171.0 462.8 L1170.0 463.9 L1169.0 464.4 L1168.0 464.1 L1167.0 463.2 L1166.0 461.8 L1165.0 460.4 L1164.0 459.6 L1163.0 459.9 L1162.0 461.0 L1161.0 462.4 L1160.0 463.6 L1159.0 464.2 L1158.0 464.1 L1157.0 463.3 L1156.0 462.0 L1155.0 460.6 L1154.0 459.7 L1153.0 459.8 L1152.0 460.9 L1151.0 462.3 L1150.0 463.7 L1149.0 464.5 L1148.0 464.6 L1147.0 463.8 L1146.0 462.5 L1145.0 461.0 L1144.0 459.8 L1143.0 459.7 L1142.0 460.8 L1141.0 462.4 L1140.0 464.0 L1139.0 465.1 L1138.0 465.3 L1137.0 464.6 L1136.0 463.2 L1135.0 461.5 L1134.0 460.0 L1133.0 459.6 L1132.0 460.7 L1131.0 462.5 L1130.0 464.3 L1129.0 465.5 L1128.0 465.9 L1127.0 465.3 L1126.0 463.8 L1125.0 461.9 L1124.0 460.2 L1123.0 459.5 L1122.0 460.5 L1121.0 462.3 L1120.0 464.2 L1119.0 465.6 L1118.0 466.1 L1117.0 465.5 L1116.0 464.1 L1115.0 462.2 L1114.0 460.5 L1113.0 459.5 L1112.0 460.3 L1111.0 461.9 L1110.0 463.7 L1109.0 465.1 L1108.0 465.7 L1107.0 465.3 L1106.0 464.0 L1105.0 462.3 L1104.0 460.6 L1103.0 459.6 L1102.0 460.0 L1101.0 461.4 L1100.0 463.0 L1099.0 464.4 L1098.0 465.0 L1097.0 464.8 L1096.0 463.7 L1095.0 462.2 L1094.0 460.7 L1093.0 459.6 L1092.0 459.8 L1091.0 460.9 L1090.0 462.4 L1089.0 463.7 L1088.0 464.4 L1087.0 464.3 L1086.0 463.5 L1085.0 462.2 L1084.0 460.8 L1083.0 459.7 L1082.0 459.7 L1081.0 460.6 L1080.0 462.0 L1079.0 463.3 L1078.0 464.1 L1077.0 464.2 L1076.0 463.6 L1075.0 462.4 L1074.0 461.0 L1073.0 459.9 L1072.0 459.6 L1071.0 460.5 L1070.0 461.9 L1069.0 463.3 L1068.0 464.3 L1067.0 464.6 L1066.0 464.1 L1065.0 462.9 L1064.0 461.4 L1063.0 460.1 L1062.0 459.5 L1061.0 460.4 L1060.0 461.9 L1059.0 463.6 L1058.0 464.8 L1057.0 465.3 L1056.0 464.9 L1055.0 463.6 L1054.0 461.9 L1053.0 460.3 L1052.0 459.5 L1051.0 460.3 L1050.0 461.9 L1049.0 463.8 L1048.0 465.3 L1047.0 465.9 L1046.0 465.6 L1045.0 464.3 L1044.0 462.5 L1043.0 460.7 L1042.0 459.6 L1041.0 460.1 L1040.0 461.7 L1039.0 463.7 L1038.0 465.3 L1037.0 466.1 L1036.0 465.8 L1035.0 464.6 L1034.0 462.8 L1033.0 460.9 L1032.0 459.6 L1031.0 459.9 L1030.0 461.4 L1029.0 463.2 L1028.0 464.8 L1027.0 465.6 L1026.0 465.5 L1025.0 464.5 L1024.0 462.8 L1023.0 461.0 L1022.0 459.8 L1021.0 459.7 L1020.0 461.0 L1019.0 462.6 L1018.0 464.0 L1017.0 464.9 L1016.0 464.9 L1015.0 464.1 L1014.0 462.7 L1013.0 461.1 L1012.0 459.9 L1011.0 459.6 L1010.0 460.6 L1009.0 462.0 L1008.0 463.3 L1007.0 464.2 L1006.0 464.4 L1005.0 463.8 L1004.0 462.6 L1003.0 461.2 L1002.0 460.0 L1001.0 459.5 L1000.0 460.3 L999.0 461.6 L998.0 463.0 L997.0 463.9 L996.0 464.3 L995.0 463.8 L994.0 462.8 L993.0 461.4 L992.0 460.1 L991.0 459.5 L990.0 460.2 L989.0 461.5 L988.0 463.0 L987.0 464.1 L986.0 464.6 L985.0 464.3 L984.0 463.3 L983.0 461.8 L982.0 460.4 L981.0 459.5 L980.0 460.1 L979.0 461.5 L978.0 463.1 L977.0 464.6 L976.0 465.3 L975.0 465.1 L974.0 464.1 L973.0 462.4 L972.0 460.8 L971.0 459.6 L970.0 459.9 L969.0 461.4 L968.0 463.3 L967.0 464.9 L966.0 465.8 L965.0 465.8 L964.0 464.7 L963.0 463.0 L962.0 461.1 L961.0 459.7 L960.0 459.8 L959.0 461.2 L958.0 463.1 L957.0 464.9 L956.0 465.9 L955.0 466.0 L954.0 465.0 L953.0 463.3 L952.0 461.4 L951.0 459.9 L950.0 459.7 L949.0 460.9 L948.0 462.7 L947.0 464.4 L946.0 465.5 L945.0 465.7 L944.0 464.8 L943.0 463.3 L942.0 461.5 L941.0 460.0 L940.0 459.6 L939.0 460.5 L938.0 462.1 L937.0 463.7 L936.0 464.7 L935.0 465.0 L934.0 464.4 L933.0 463.1 L932.0 461.5 L931.0 460.1 L930.0 459.5 L929.0 460.2 L928.0 461.6 L927.0 463.0 L926.0 464.1 L925.0 464.4 L924.0 464.0 L923.0 463.0 L922.0 461.6 L921.0 460.3 L920.0 459.5 L919.0 460.0 L918.0 461.2 L917.0 462.6 L916.0 463.7 L915.0 464.2 L914.0 464.0 L913.0 463.1 L912.0 461.8 L911.0 460.4 L910.0 459.6 L909.0 459.9 L908.0 461.1 L907.0 462.6 L906.0 463.8 L905.0 464.6 L904.0 464.5 L903.0 463.7 L902.0 462.3 L901.0 460.8 L900.0 459.7 L899.0 459.8 L898.0 461.0 L897.0 462.7 L896.0 464.2 L895.0 465.2 L894.0 465.2 L893.0 464.4 L892.0 462.9 L891.0 461.2 L890.0 459.8 L889.0 459.7 L888.0 460.9 L887.0 462.8 L886.0 464.5 L885.0 465.7 L884.0 465.9 L883.0 465.1 L882.0 463.5 L881.0 461.6 L880.0 460.0 L879.0 459.6 L878.0 460.8 L877.0 462.6 L876.0 464.4 L875.0 465.7 L874.0 466.1 L873.0 465.4 L872.0 463.8 L871.0 461.9 L870.0 460.2 L869.0 459.5 L868.0 460.5 L867.0 462.2 L866.0 464.0 L865.0 465.3 L864.0 465.7 L863.0 465.2 L862.0 463.8 L861.0 462.0 L860.0 460.4 L859.0 459.5 L858.0 460.2 L857.0 461.7 L856.0 463.3 L855.0 464.5 L854.0 465.0 L853.0 464.7 L852.0 463.5 L851.0 462.0 L850.0 460.5 L849.0 459.6 L848.0 459.9 L847.0 461.2 L846.0 462.6 L845.0 463.8 L844.0 464.4 L843.0 464.2 L842.0 463.3 L841.0 462.0 L840.0 460.6 L839.0 459.6 L838.0 459.8 L837.0 460.9 L836.0 462.2 L835.0 463.5 L834.0 464.2 L833.0 464.2 L832.0 463.4 L831.0 462.2 L830.0 460.8 L829.0 459.7 L828.0 459.7 L827.0 460.7 L826.0 462.1 L825.0 463.5 L824.0 464.4 L823.0 464.6 L822.0 464.0 L821.0 462.7 L820.0 461.2 L819.0 459.9 L818.0 459.6 L817.0 460.6 L816.0 462.2 L815.0 463.8 L814.0 465.0 L813.0 465.3 L812.0 464.7 L811.0 463.4 L810.0 461.7 L809.0 460.1 L808.0 459.5 L807.0 460.5 L806.0 462.2 L805.0 464.1 L804.0 465.4 L803.0 465.9 L802.0 465.4 L801.0 464.0 L800.0 462.1 L799.0 460.4 L798.0 459.5 L797.0 460.3 L796.0 462.1 L795.0 464.0 L794.0 465.5 L793.0 466.1 L792.0 465.7 L791.0 464.3 L790.0 462.5 L789.0 460.6 L788.0 459.6 L787.0 460.1 L786.0 461.7 L785.0 463.5 L784.0 465.0 L783.0 465.7 L782.0 465.4 L781.0 464.2 L780.0 462.5 L779.0 460.8 L778.0 459.6 L777.0 459.9 L776.0 461.2 L775.0 462.8 L774.0 464.2 L773.0 465.0 L772.0 464.8 L771.0 463.9 L770.0 462.4 L769.0 460.9 L768.0 459.7 L767.0 459.7 L766.0 460.8 L765.0 462.2 L764.0 463.5 L763.0 464.3 L762.0 464.3 L761.0 463.6 L760.0 462.4 L759.0 461.0 L758.0 459.8 L757.0 459.6 L756.0 460.5 L755.0 461.8 L754.0 463.2 L753.0 464.0 L752.0 464.2 L751.0 463.7 L750.0 462.6 L749.0 461.2 L748.0 460.0 L747.0 459.5 L746.0 460.3 L745.0 461.7 L744.0 463.2 L743.0 464.3 L742.0 464.6 L741.0 464.2 L740.0 463.1 L739.0 461.6 L738.0 460.2 L737.0 459.5 L736.0 460.2 L735.0 461.7 L734.0 463.4 L733.0 464.7 L732.0 465.3 L731.0 465.0 L730.0 463.8 L729.0 462.2 L728.0 460.5 L727.0 459.5 L726.0 460.1 L725.0 461.7 L724.0 463.6 L723.0 465.1 L722.0 465.9 L721.0 465.7 L720.0 464.5 L719.0 462.7 L718.0 460.8 L717.0 459.6 L716.0 460.0 L715.0 461.5 L714.0 463.4 L713.0 465.1 L712.0 466.0 L711.0 465.9 L710.0 464.8 L709.0 463.0 L708.0 461.1 L707.0 459.7 L706.0 459.8 L705.0 461.2 L704.0 463.0 L703.0 464.6 L702.0 465.6 L701.0 465.6 L700.0 464.6 L699.0 463.0 L698.0 461.2 L697.0 459.9 L696.0 459.6 L695.0 460.8 L694.0 462.4 L693.0 463.9 L692.0 464.8 L691.0 465.0 L690.0 464.2 L689.0 462.9 L688.0 461.3 L687.0 460.0 L686.0 459.5 L685.0 460.4 L684.0 461.8 L683.0 463.2 L682.0 464.2 L681.0 464.4 L680.0 463.9 L679.0 462.8 L678.0 461.3 L677.0 460.1 L676.0 459.5 L675.0 460.2 L674.0 461.4 L673.0 462.8 L672.0 463.9 L671.0 464.3 L670.0 463.9 L669.0 462.9 L668.0 461.6 L667.0 460.3 L666.0 459.5 L665.0 460.0 L664.0 461.3 L663.0 462.8 L662.0 464.0 L661.0 464.6 L660.0 464.4 L659.0 463.5 L658.0 462.0 L657.0 460.6 L656.0 459.6 L655.0 459.9 L654.0 461.3 L653.0 462.9 L652.0 464.4 L651.0 465.2 L650.0 465.2 L649.0 464.2 L648.0 462.6 L647.0 460.9 L646.0 459.7 L645.0 459.8 L644.0 461.2 L643.0 463.1 L642.0 464.7 L641.0 465.8 L640.0 465.8 L639.0 464.9 L638.0 463.2 L637.0 461.3 L636.0 459.9 L635.0 459.7 L634.0 461.0 L633.0 462.9 L632.0 464.7 L631.0 465.9 L630.0 466.0 L629.0 465.2 L628.0 463.5 L627.0 461.6 L626.0 460.0 L625.0 459.6 L624.0 460.7 L623.0 462.5 L622.0 464.2 L621.0 465.4 L620.0 465.7 L619.0 465.0 L618.0 463.5 L617.0 461.7 L616.0 460.2 L615.0 459.5 L614.0 460.4 L613.0 461.9 L612.0 463.5 L611.0 464.7 L610.0 465.0 L609.0 464.5 L608.0 463.3 L607.0 461.7 L606.0 460.3 L605.0 459.5 L604.0 460.1 L603.0 461.4 L602.0 462.8 L601.0 464.0 L600.0 464.4 L599.0 464.1 L598.0 463.1 L597.0 461.7 L596.0 460.4 L595.0 459.6 L594.0 459.9 L593.0 461.1 L592.0 462.4 L591.0 463.6 L590.0 464.2 L589.0 464.1 L588.0 463.3 L587.0 462.0 L586.0 460.6 L585.0 459.6 L584.0 459.8 L583.0 460.9 L582.0 462.4 L581.0 463.7 L580.0 464.5 L579.0 464.6 L578.0 463.8 L577.0 462.5 L576.0 460.9 L575.0 459.8 L574.0 459.7 L573.0 460.8 L572.0 462.5 L571.0 464.1 L570.0 465.1 L569.0 465.3 L568.0 464.6 L567.0 463.1 L566.0 461.4 L565.0 460.0 L564.0 459.6 L563.0 460.7 L562.0 462.5 L561.0 464.3 L560.0 465.6 L559.0 465.9 L558.0 465.2 L557.0 463.7 L556.0 461.8 L555.0 460.2 L554.0 459.5 L553.0 460.6 L552.0 462.4 L551.0 464.2 L550.0 465.6 L549.0 466.1 L548.0 465.5 L547.0 464.0 L546.0 462.1 L545.0 460.4 L544.0 459.5 L543.0 460.3 L542.0 462.0 L541.0 463.8 L540.0 465.2 L539.0 465.7 L538.0 465.3 L537.0 464.0 L536.0 462.2 L535.0 460.6 L534.0 459.5 L533.0 460.0 L532.0 461.5 L531.0 463.1 L530.0 464.4 L529.0 465.0 L528.0 464.7 L527.0 463.7 L526.0 462.2 L525.0 460.6 L524.0 459.6 L523.0 459.8 L522.0 461.0 L521.0 462.5 L520.0 463.7 L519.0 464.4 L518.0 464.3 L517.0 463.4 L516.0 462.1 L515.0 460.7 L514.0 459.7 L513.0 459.7 L512.0 460.7 L511.0 462.1 L510.0 463.3 L509.0 464.1 L508.0 464.2 L507.0 463.6 L506.0 462.4 L505.0 461.0 L504.0 459.8 L503.0 459.6 L502.0 460.5 L501.0 462.0 L500.0 463.4 L499.0 464.4 L498.0 464.6 L497.0 464.1 L496.0 462.9 L495.0 461.4 L494.0 460.0 L493.0 459.5 L492.0 460.4 L491.0 462.0 L490.0 463.6 L489.0 464.9 L488.0 465.3 L487.0 464.9 L486.0 463.6 L485.0 461.9 L484.0 460.3 L483.0 459.5 L482.0 460.3 L481.0 462.0 L480.0 463.9 L479.0 465.3 L478.0 465.9 L477.0 465.5 L476.0 464.2 L475.0 462.4 L474.0 460.6 L473.0 459.5 L472.0 460.2 L471.0 461.8 L470.0 463.7 L469.0 465.3 L468.0 466.1 L467.0 465.8 L466.0 464.5 L465.0 462.7 L464.0 460.8 L463.0 459.6 L462.0 460.0 L461.0 461.5 L460.0 463.3 L459.0 464.8 L458.0 465.7 L457.0 465.5 L456.0 464.4 L455.0 462.7 L454.0 461.0 L453.0 459.7 L452.0 459.8 L451.0 461.0 L450.0 462.6 L449.0 464.1 L448.0 464.9 L447.0 464.9 L446.0 464.0 L445.0 462.6 L444.0 461.0 L443.0 459.8 L442.0 459.6 L441.0 460.6 L440.0 462.0 L439.0 463.4 L438.0 464.3 L437.0 464.4 L436.0 463.7 L435.0 462.5 L434.0 461.1 L433.0 459.9 L432.0 459.5 L431.0 460.4 L430.0 461.7 L429.0 463.0 L428.0 464.0 L427.0 464.3 L426.0 463.8 L425.0 462.7 L424.0 461.3 L423.0 460.1 L422.0 459.5 L421.0 460.2 L420.0 461.5 L419.0 463.0 L418.0 464.2 L417.0 464.6 L416.0 464.3 L415.0 463.3 L414.0 461.8 L413.0 460.3 L412.0 459.5 L411.0 460.1 L410.0 461.5 L409.0 463.2 L408.0 464.6 L407.0 465.3 L406.0 465.1 L405.0 464.0 L404.0 462.4 L403.0 460.7 L402.0 459.6 L401.0 460.0 L400.0 461.5 L399.0 463.3 L398.0 465.0 L397.0 465.8 L396.0 465.7 L395.0 464.7 L394.0 462.9 L393.0 461.0 L392.0 459.7 L391.0 459.8 L390.0 461.3 L389.0 463.2 L388.0 464.9 L387.0 466.0 L386.0 466.0 L385.0 464.9 L384.0 463.2 L383.0 461.3 L382.0 459.9 L381.0 459.7 L380.0 461.0 L379.0 462.8 L378.0 464.5 L377.0 465.5 L376.0 465.6 L375.0 464.8 L374.0 463.2 L373.0 461.4 L372.0 460.0 L371.0 459.6 L370.0 460.6 L369.0 462.2 L368.0 463.7 L367.0 464.8 L366.0 465.0 L365.0 464.4 L364.0 463.0 L363.0 461.5 L362.0 460.1 L361.0 459.5 L360.0 460.3 L359.0 461.6 L358.0 463.1 L357.0 464.1 L356.0 464.4 L355.0 464.0 L354.0 462.9 L353.0 461.5 L352.0 460.2 L351.0 459.5 L350.0 460.1 L349.0 461.3 L348.0 462.7 L347.0 463.8 L346.0 464.3 L345.0 464.0 L344.0 463.1 L343.0 461.7 L342.0 460.4 L341.0 459.6 L340.0 459.9 L339.0 461.1 L338.0 462.6 L337.0 463.9 L336.0 464.6 L335.0 464.5 L334.0 463.6 L333.0 462.2 L332.0 460.7 L331.0 459.6 L330.0 459.8 L329.0 461.1 L328.0 462.7 L327.0 464.3 L326.0 465.2 L325.0 465.2 L324.0 464.4 L323.0 462.8 L322.0 461.1 L321.0 459.8 L320.0 459.7 L319.0 461.0 L318.0 462.8 L317.0 464.6 L316.0 465.7 L315.0 465.9 L314.0 465.0 L313.0 463.4 L312.0 461.5 L311.0 460.0 L310.0 459.6 L309.0 460.8 L308.0 462.7 L307.0 464.5 L306.0 465.8 L305.0 466.1 L304.0 465.3 L303.0 463.8 L302.0 461.8 L301.0 460.2 L300.0 459.5 L299.0 460.5 L298.0 462.3 L297.0 464.0 L296.0 465.3 L295.0 465.7 L294.0 465.1 L293.0 463.7 L292.0 461.9 L291.0 460.3 L290.0 459.5 L289.0 460.2 L288.0 461.7 L287.0 463.3 L286.0 464.6 L285.0 465.0 L284.0 464.6 L283.0 463.5 L282.0 461.9 L281.0 460.4 L280.0 459.5 L279.0 460.0 L278.0 461.2 L277.0 462.7 L276.0 463.9 L275.0 464.4 L274.0 464.2 L273.0 463.3 L272.0 461.9 L271.0 460.5 L270.0 459.6 L269.0 459.8 L268.0 460.9 L267.0 462.3 L266.0 463.5 L265.0 464.2 L264.0 464.1 L263.0 463.4 L262.0 462.1 L261.0 460.7 L260.0 459.7 L259.0 459.7 L258.0 460.7 L257.0 462.2 L256.0 463.6 L255.0 464.5 L254.0 464.6 L253.0 463.9 L252.0 462.6 L251.0 461.1 L250.0 459.9 L249.0 459.6 L248.0 460.7 L247.0 462.3 L246.0 463.9 L245.0 465.0 L244.0 465.3 L243.0 464.7 L242.0 463.3 L241.0 461.6 L240.0 460.1 L239.0 459.5 L238.0 460.6 L237.0 462.3 L236.0 464.1 L235.0 465.5 L234.0 465.9 L233.0 465.4 L232.0 463.9 L231.0 462.1 L230.0 460.4 L229.0 459.5 L228.0 460.4 L227.0 462.1 L226.0 464.0 L225.0 465.5 L224.0 466.1 L223.0 465.6 L222.0 464.2 L221.0 462.4 L220.0 460.6 L219.0 459.5 L218.0 460.1 L217.0 461.7 L216.0 463.6 L215.0 465.0 L214.0 465.7 L213.0 465.4 L212.0 464.2 L211.0 462.4 L210.0 460.7 L209.0 459.6 L208.0 459.9 L207.0 461.3 L206.0 462.9 L205.0 464.3 L204.0 465.0 L203.0 464.8 L202.0 463.8 L201.0 462.4 L200.0 460.8 L199.0 459.7 L198.0 459.7 L197.0 460.8 L196.0 462.3 L195.0 463.6 L194.0 464.3 L193.0 464.3 L192.0 463.6 L191.0 462.3 L190.0 460.9 L189.0 459.8 L188.0 459.6 L187.0 460.5 L186.0 461.9 L185.0 463.2 L184.0 464.1 L183.0 464.2 L182.0 463.7 L181.0 462.5 L180.0 461.1 L179.0 459.9 L178.0 459.5 L177.0 460.4 L176.0 461.8 L175.0 463.2 L174.0 464.3 L173.0 464.6 L172.0 464.2 L171.0 463.0 L170.0 461.5 L169.0 460.2 L168.0 459.5 L167.0 460.3 L166.0 461.8 L165.0 463.5 L164.0 464.8 L163.0 465.3 L162.0 465.0 L161.0 463.8 L160.0 462.1 L159.0 460.5 L158.0 459.5 L157.0 460.2 L156.0 461.8 L155.0 463.6 L154.0 465.2 L153.0 465.9 L152.0 465.6 L151.0 464.4 L150.0 462.6 L149.0 460.8 L148.0 459.6 L147.0 460.0 L146.0 461.6 L145.0 463.5 L144.0 465.2 L143.0 466.0 L142.0 465.9 L141.0 464.7 L140.0 462.9 L139.0 461.0 L138.0 459.7 L137.0 459.8 L136.0 461.2 L135.0 463.1 L134.0 464.7 L133.0 465.6 L132.0 465.6 L131.0 464.6 L130.0 463.0 L129.0 461.2 L128.0 459.8 L127.0 459.7 L126.0 460.8 L125.0 462.5 L124.0 463.9 L123.0 464.9 L122.0 465.0 L121.0 464.2 L120.0 462.8 L119.0 461.2 L118.0 459.9 L117.0 459.6 L116.0 460.5 L115.0 461.9 L114.0 463.3 L113.0 464.2 L112.0 464.4 L111.0 463.9 L110.0 462.7 L109.0 461.3 L108.0 460.0 L107.0 459.5 L106.0 460.2 L105.0 461.5 L104.0 462.9 L103.0 463.9 L102.0 464.3 L101.0 463.9 L100.0 462.9 L99.0 461.5 L98.0 460.2 L97.0 459.5 L96.0 460.1 L95.0 461.4 L94.0 462.8 L93.0 464.0 L92.0 464.6 L91.0 464.4 L90.0 463.4 L89.0 462.0 L88.0 460.5 L87.0 459.6 L86.0 460.0 L85.0 461.3 L84.0 463.0 L83.0 464.5 L82.0 465.3 L81.0 465.2 L80.0 464.2 L79.0 462.6 L78.0 460.9 L77.0 459.7 L76.0 459.9 L75.0 461.3 L74.0 463.1 L73.0 464.8 L72.0 465.8 L71.0 465.8 L70.0 464.8 L69.0 463.1 L68.0 461.3 L67.0 459.8 L66.0 459.7 L65.0 461.1 L64.0 463.0 L63.0 464.8 L62.0 465.9 L61.0 466.0 L60.0 465.1 L59.0 463.5 L58.0 461.5 L57.0 460.0 L56.0 459.6 L55.0 460.8 L54.0 462.6 L53.0 464.3 L52.0 465.4 L51.0 465.7 L50.0 464.9 L49.0 463.4 L48.0 461.7 L47.0 460.1 L46.0 459.5 L45.0 460.4 L44.0 462.0 L43.0 463.6 L42.0 464.7 L41.0 465.0 L40.0 464.5 L39.0 463.2 L38.0 461.7 L37.0 460.2 L36.0 459.5 L35.0 460.1 L34.0 461.5 L33.0 462.9 L32.0 464.0 L31.0 464.4 L30.0 464.1 L29.0 463.1 L28.0 461.7 L27.0 460.3 L26.0 459.5 L25.0 459.9 L24.0 461.1 L23.0 462.5 L22.0 463.7 L21.0 464.2 L20.0 464.1 L19.0 463.2 L18.0 461.9 L17.0 460.5 L16.0 459.6 L15.0 459.8 L14.0 461.0 L13.0 462.4 L12.0 463.8 L11.0 464.5 L10.0 464.5 L9.0 463.7 L8.0 462.4 L7.0 460.9 L6.0 459.7 L5.0 459.7 L4.0 460.9 L3.0 462.5 L2.0 464.1 L1.0 465.1 L0.0 465.3 L-1.0 464.5 L-2.0 463.1Z" fill="#1d1d1f"/>
<rect x="0.00" y="475.00" width="707.00" height="100.50" fill="#fdee36"/>
<rect x="0.00" y="475.00" width="707.00" height="1.20" fill="#c9bd2a"/>
<rect x="0.00" y="519.60" width="707.00" height="2.00" fill="#b6a823"/>
<rect x="218.80" y="475.00" width="2.00" height="100.50" fill="#b6a823"/>
<rect x="-25.90" y="521.50" width="2.60" height="54.00" fill="#a99c22"/>
<rect x="-25.90" y="476.00" width="2.60" height="9.00" fill="#26240f"/>
<rect x="-22.10" y="521.50" width="2.60" height="15.50" fill="#a99c22"/>
<rect x="-19.70" y="522.50" width="2.60" height="14.50" fill="#26240f"/>
<rect x="-1.90" y="521.50" width="2.60" height="15.50" fill="#a99c22"/>
<rect x="0.50" y="522.50" width="2.60" height="14.50" fill="#26240f"/>
<rect x="-25.90" y="557.00" width="2.60" height="18.50" fill="#26240f"/>
<rect x="-5.60" y="557.00" width="2.60" height="14.00" fill="#26240f"/>
<rect x="14.50" y="521.50" width="2.60" height="54.00" fill="#a99c22"/>
<rect x="14.50" y="476.00" width="2.60" height="9.00" fill="#26240f"/>
<rect x="17.10" y="521.50" width="2.60" height="15.50" fill="#a99c22"/>
<rect x="19.50" y="522.50" width="5.00" height="14.50" fill="#26240f"/>
<rect x="38.50" y="521.50" width="2.60" height="15.50" fill="#a99c22"/>
<rect x="40.90" y="522.50" width="2.60" height="14.50" fill="#26240f"/>
<rect x="14.50" y="557.00" width="2.60" height="18.50" fill="#26240f"/>
<rect x="34.80" y="557.00" width="2.60" height="14.00" fill="#26240f"/>
<rect x="54.60" y="521.50" width="2.60" height="54.00" fill="#a99c22"/>
<rect x="58.40" y="521.50" width="2.60" height="15.50" fill="#a99c22"/>
<rect x="60.80" y="522.50" width="2.60" height="14.50" fill="#26240f"/>
<rect x="78.60" y="521.50" width="2.60" height="15.50" fill="#a99c22"/>
<rect x="81.00" y="522.50" width="2.60" height="14.50" fill="#26240f"/>
<rect x="54.60" y="557.00" width="2.60" height="18.50" fill="#26240f"/>
<rect x="74.90" y="557.00" width="2.60" height="14.00" fill="#26240f"/>
<rect x="97.50" y="521.50" width="2.60" height="54.00" fill="#a99c22"/>
<rect x="97.50" y="476.00" width="2.60" height="9.00" fill="#26240f"/>
<rect x="101.30" y="521.50" width="2.60" height="15.50" fill="#a99c22"/>
<rect x="103.70" y="522.50" width="2.60" height="14.50" fill="#26240f"/>
<rect x="121.50" y="521.50" width="2.60" height="15.50" fill="#a99c22"/>
<rect x="123.90" y="522.50" width="2.60" height="14.50" fill="#26240f"/>
<rect x="97.50" y="557.00" width="2.60" height="18.50" fill="#26240f"/>
<rect x="117.80" y="557.00" width="2.60" height="14.00" fill="#26240f"/>
<rect x="137.70" y="521.50" width="2.60" height="54.00" fill="#a99c22"/>
<rect x="137.70" y="476.00" width="2.60" height="9.00" fill="#26240f"/>
<rect x="141.50" y="521.50" width="2.60" height="15.50" fill="#a99c22"/>
<rect x="143.90" y="522.50" width="2.60" height="14.50" fill="#26240f"/>
<rect x="161.70" y="521.50" width="2.60" height="15.50" fill="#a99c22"/>
<rect x="164.10" y="522.50" width="2.60" height="14.50" fill="#26240f"/>
<rect x="137.70" y="557.00" width="2.60" height="18.50" fill="#26240f"/>
<rect x="158.00" y="557.00" width="2.60" height="14.00" fill="#26240f"/>
<rect x="177.70" y="521.50" width="2.60" height="54.00" fill="#a99c22"/>
<rect x="177.70" y="476.00" width="2.60" height="9.00" fill="#26240f"/>
<rect x="181.50" y="521.50" width="2.60" height="15.50" fill="#a99c22"/>
<rect x="183.90" y="522.50" width="2.60" height="14.50" fill="#26240f"/>
<rect x="201.70" y="521.50" width="2.60" height="15.50" fill="#a99c22"/>
<rect x="204.10" y="522.50" width="2.60" height="14.50" fill="#26240f"/>
<rect x="177.70" y="557.00" width="2.60" height="18.50" fill="#26240f"/>
<rect x="198.00" y="557.00" width="2.60" height="14.00" fill="#26240f"/>
<rect x="218.50" y="521.50" width="2.60" height="54.00" fill="#a99c22"/>
<rect x="221.10" y="521.50" width="2.60" height="15.50" fill="#a99c22"/>
<rect x="223.50" y="522.50" width="5.00" height="14.50" fill="#26240f"/>
<rect x="241.30" y="521.50" width="2.60" height="15.50" fill="#a99c22"/>
<rect x="243.70" y="522.50" width="5.00" height="14.50" fill="#26240f"/>
<rect x="238.80" y="557.00" width="2.60" height="14.00" fill="#26240f"/>
<rect x="257.95" y="521.50" width="2.60" height="54.00" fill="#a99c22"/>
<rect x="257.95" y="476.00" width="2.60" height="9.00" fill="#26240f"/>
<rect x="261.75" y="521.50" width="2.60" height="15.50" fill="#a99c22"/>
<rect x="264.15" y="522.50" width="2.60" height="14.50" fill="#26240f"/>
<rect x="281.95" y="521.50" width="2.60" height="15.50" fill="#a99c22"/>
<rect x="284.35" y="522.50" width="2.60" height="14.50" fill="#26240f"/>
<rect x="257.95" y="557.00" width="2.60" height="18.50" fill="#26240f"/>
<rect x="278.25" y="557.00" width="2.60" height="14.00" fill="#26240f"/>
<rect x="297.95" y="521.50" width="2.60" height="54.00" fill="#a99c22"/>
<rect x="297.95" y="476.00" width="2.60" height="9.00" fill="#26240f"/>
<rect x="301.75" y="521.50" width="2.60" height="15.50" fill="#a99c22"/>
<rect x="304.15" y="522.50" width="2.60" height="14.50" fill="#26240f"/>
<rect x="321.95" y="521.50" width="2.60" height="15.50" fill="#a99c22"/>
<rect x="324.35" y="522.50" width="2.60" height="14.50" fill="#26240f"/>
<rect x="297.95" y="557.00" width="2.60" height="18.50" fill="#26240f"/>
<rect x="318.25" y="557.00" width="2.60" height="14.00" fill="#26240f"/>
<rect x="341.20" y="521.50" width="2.60" height="54.00" fill="#a99c22"/>
<rect x="341.20" y="476.00" width="2.60" height="9.00" fill="#26240f"/>
<rect x="345.00" y="521.50" width="2.60" height="15.50" fill="#a99c22"/>
<rect x="347.40" y="522.50" width="2.60" height="14.50" fill="#26240f"/>
<rect x="365.20" y="521.50" width="2.60" height="15.50" fill="#a99c22"/>
<rect x="367.60" y="522.50" width="2.60" height="14.50" fill="#26240f"/>
<rect x="341.20" y="557.00" width="2.60" height="18.50" fill="#26240f"/>
<rect x="361.50" y="557.00" width="2.60" height="14.00" fill="#26240f"/>
<rect x="381.20" y="521.50" width="2.60" height="54.00" fill="#a99c22"/>
<rect x="381.20" y="476.00" width="2.60" height="9.00" fill="#26240f"/>
<rect x="385.00" y="521.50" width="2.60" height="15.50" fill="#a99c22"/>
<rect x="387.40" y="522.50" width="2.60" height="14.50" fill="#26240f"/>
<rect x="405.20" y="521.50" width="2.60" height="15.50" fill="#a99c22"/>
<rect x="407.60" y="522.50" width="2.60" height="14.50" fill="#26240f"/>
<rect x="381.20" y="557.00" width="2.60" height="18.50" fill="#26240f"/>
<rect x="401.50" y="557.00" width="2.60" height="14.00" fill="#26240f"/>
<rect x="421.20" y="521.50" width="2.60" height="54.00" fill="#a99c22"/>
<rect x="421.20" y="476.00" width="2.60" height="9.00" fill="#26240f"/>
<rect x="425.00" y="521.50" width="2.60" height="15.50" fill="#a99c22"/>
<rect x="427.40" y="522.50" width="2.60" height="14.50" fill="#26240f"/>
<rect x="445.20" y="521.50" width="2.60" height="15.50" fill="#a99c22"/>
<rect x="447.60" y="522.50" width="2.60" height="14.50" fill="#26240f"/>
<rect x="421.20" y="557.00" width="2.60" height="18.50" fill="#26240f"/>
<rect x="441.50" y="557.00" width="2.60" height="14.00" fill="#26240f"/>
<rect x="461.70" y="521.50" width="2.60" height="54.00" fill="#a99c22"/>
<rect x="461.70" y="476.00" width="2.60" height="9.00" fill="#26240f"/>
<rect x="464.30" y="521.50" width="2.60" height="15.50" fill="#a99c22"/>
<rect x="466.70" y="522.50" width="5.00" height="14.50" fill="#26240f"/>
<rect x="485.70" y="521.50" width="2.60" height="15.50" fill="#a99c22"/>
<rect x="488.10" y="522.50" width="2.60" height="14.50" fill="#26240f"/>
<rect x="461.70" y="557.00" width="2.60" height="18.50" fill="#26240f"/>
<rect x="482.00" y="557.00" width="2.60" height="14.00" fill="#26240f"/>
<rect x="501.70" y="521.50" width="2.60" height="54.00" fill="#a99c22"/>
<rect x="501.70" y="476.00" width="2.60" height="9.00" fill="#26240f"/>
<rect x="505.50" y="521.50" width="2.60" height="15.50" fill="#a99c22"/>
<rect x="507.90" y="522.50" width="2.60" height="14.50" fill="#26240f"/>
<rect x="525.70" y="521.50" width="2.60" height="15.50" fill="#a99c22"/>
<rect x="528.10" y="522.50" width="2.60" height="14.50" fill="#26240f"/>
<rect x="501.70" y="557.00" width="2.60" height="18.50" fill="#26240f"/>
<rect x="522.00" y="557.00" width="2.60" height="14.00" fill="#26240f"/>
<rect x="544.95" y="521.50" width="2.60" height="54.00" fill="#a99c22"/>
<rect x="544.95" y="476.00" width="2.60" height="9.00" fill="#26240f"/>
<rect x="548.75" y="521.50" width="2.60" height="15.50" fill="#a99c22"/>
<rect x="551.15" y="522.50" width="2.60" height="14.50" fill="#26240f"/>
<rect x="568.95" y="521.50" width="2.60" height="15.50" fill="#a99c22"/>
<rect x="571.35" y="522.50" width="2.60" height="14.50" fill="#26240f"/>
<rect x="544.95" y="557.00" width="2.60" height="18.50" fill="#26240f"/>
<rect x="565.25" y="557.00" width="2.60" height="14.00" fill="#26240f"/>
<rect x="584.95" y="521.50" width="2.60" height="54.00" fill="#a99c22"/>
<rect x="584.95" y="476.00" width="2.60" height="9.00" fill="#26240f"/>
<rect x="588.75" y="521.50" width="2.60" height="15.50" fill="#a99c22"/>
<rect x="591.15" y="522.50" width="2.60" height="14.50" fill="#26240f"/>
<rect x="608.95" y="521.50" width="2.60" height="15.50" fill="#a99c22"/>
<rect x="611.35" y="522.50" width="2.60" height="14.50" fill="#26240f"/>
<rect x="584.95" y="557.00" width="2.60" height="18.50" fill="#26240f"/>
<rect x="605.25" y="557.00" width="2.60" height="14.00" fill="#26240f"/>
<rect x="625.45" y="521.50" width="2.60" height="54.00" fill="#a99c22"/>
<rect x="625.45" y="476.00" width="2.60" height="9.00" fill="#26240f"/>
<rect x="629.25" y="521.50" width="2.60" height="15.50" fill="#a99c22"/>
<rect x="631.65" y="522.50" width="2.60" height="14.50" fill="#26240f"/>
<rect x="648.25" y="521.50" width="2.60" height="15.50" fill="#a99c22"/>
<rect x="650.65" y="522.50" width="5.00" height="14.50" fill="#26240f"/>
<rect x="625.45" y="557.00" width="2.60" height="18.50" fill="#26240f"/>
<rect x="645.75" y="557.00" width="2.60" height="14.00" fill="#26240f"/>
<rect x="665.45" y="521.50" width="2.60" height="54.00" fill="#a99c22"/>
<rect x="665.45" y="476.00" width="2.60" height="9.00" fill="#26240f"/>
<rect x="668.05" y="521.50" width="2.60" height="15.50" fill="#a99c22"/>
<rect x="670.45" y="522.50" width="5.00" height="14.50" fill="#26240f"/>
<rect x="688.25" y="521.50" width="2.60" height="15.50" fill="#a99c22"/>
<rect x="690.65" y="522.50" width="5.00" height="14.50" fill="#26240f"/>
<rect x="665.45" y="557.00" width="2.60" height="18.50" fill="#26240f"/>
<rect x="685.75" y="557.00" width="2.60" height="14.00" fill="#26240f"/>
<rect x="0.00" y="581.00" width="1200.00" height="100.50" fill="#fdee36"/>
<rect x="0.00" y="581.00" width="1200.00" height="1.20" fill="#c9bd2a"/>
<rect x="0.00" y="625.80" width="1200.00" height="2.00" fill="#b6a823"/>
<rect x="218.80" y="581.00" width="2.00" height="100.50" fill="#b6a823"/>
<rect x="381.50" y="581.00" width="2.00" height="100.50" fill="#b6a823"/>
<rect x="54.00" y="581.00" width="1.00" height="46.00" fill="#b6a823"/>
<rect x="-25.90" y="627.50" width="2.60" height="54.00" fill="#a99c22"/>
<rect x="-25.90" y="582.00" width="2.60" height="8.50" fill="#26240f"/>
<rect x="-25.90" y="671.50" width="2.60" height="10.00" fill="#26240f"/>
<rect x="5.60" y="640.30" width="2.40" height="2.40" fill="#26240f"/>
<rect x="8.60" y="651.30" width="2.40" height="2.40" fill="#26240f"/>
<rect x="-5.40" y="666.30" width="2.40" height="2.40" fill="#26240f"/>
<rect x="-21.10" y="660.20" width="2.50" height="2.40" fill="#26240f"/>
<rect x="-16.10" y="660.20" width="2.50" height="2.40" fill="#26240f"/>
<rect x="-11.60" y="660.20" width="5.50" height="2.40" fill="#26240f"/>
<rect x="-3.10" y="660.20" width="2.50" height="2.40" fill="#26240f"/>
<rect x="1.40" y="660.20" width="2.00" height="2.40" fill="#26240f"/>
<rect x="4.90" y="660.20" width="6.00" height="2.40" fill="#26240f"/>
<rect x="12.40" y="660.20" width="2.50" height="2.40" fill="#26240f"/>
<rect x="14.50" y="627.50" width="2.60" height="54.00" fill="#a99c22"/>
<rect x="14.50" y="582.00" width="2.60" height="8.50" fill="#26240f"/>
<rect x="14.50" y="671.50" width="2.60" height="10.00" fill="#26240f"/>
<rect x="46.00" y="640.30" width="2.40" height="2.40" fill="#26240f"/>
<rect x="49.00" y="651.30" width="2.40" height="2.40" fill="#26240f"/>
<rect x="35.00" y="666.30" width="2.40" height="2.40" fill="#26240f"/>
<rect x="19.30" y="660.20" width="2.50" height="2.40" fill="#26240f"/>
<rect x="24.30" y="660.20" width="2.50" height="2.40" fill="#26240f"/>
<rect x="28.80" y="660.20" width="5.50" height="2.40" fill="#26240f"/>
<rect x="37.30" y="660.20" width="2.50" height="2.40" fill="#26240f"/>
<rect x="41.80" y="660.20" width="2.00" height="2.40" fill="#26240f"/>
<rect x="45.30" y="660.20" width="6.00" height="2.40" fill="#26240f"/>
<rect x="52.80" y="660.20" width="2.50" height="2.40" fill="#26240f"/>
<rect x="54.60" y="627.50" width="2.60" height="54.00" fill="#a99c22"/>
<rect x="86.10" y="640.30" width="2.40" height="2.40" fill="#26240f"/>
<rect x="89.10" y="651.30" width="2.40" height="2.40" fill="#26240f"/>
<rect x="75.10" y="666.30" width="2.40" height="2.40" fill="#26240f"/>
<rect x="59.40" y="660.20" width="2.50" height="2.40" fill="#26240f"/>
<rect x="64.40" y="660.20" width="2.50" height="2.40" fill="#26240f"/>
<rect x="68.90" y="660.20" width="5.50" height="2.40" fill="#26240f"/>
<rect x="77.40" y="660.20" width="2.50" height="2.40" fill="#26240f"/>
<rect x="81.90" y="660.20" width="2.00" height="2.40" fill="#26240f"/>
<rect x="85.40" y="660.20" width="6.00" height="2.40" fill="#26240f"/>
<rect x="92.90" y="660.20" width="2.50" height="2.40" fill="#26240f"/>
<rect x="97.50" y="627.50" width="2.60" height="54.00" fill="#a99c22"/>
<rect x="97.50" y="582.00" width="2.60" height="8.50" fill="#26240f"/>
<rect x="97.50" y="671.50" width="2.60" height="10.00" fill="#26240f"/>
<rect x="129.00" y="640.30" width="2.40" height="2.40" fill="#26240f"/>
<rect x="132.00" y="651.30" width="2.40" height="2.40" fill="#26240f"/>
<rect x="118.00" y="666.30" width="2.40" height="2.40" fill="#26240f"/>
<rect x="102.30" y="660.20" width="2.50" height="2.40" fill="#26240f"/>
<rect x="107.30" y="660.20" width="2.50" height="2.40" fill="#26240f"/>
<rect x="111.80" y="660.20" width="5.50" height="2.40" fill="#26240f"/>
<rect x="120.30" y="660.20" width="2.50" height="2.40" fill="#26240f"/>
<rect x="124.80" y="660.20" width="2.00" height="2.40" fill="#26240f"/>
<rect x="128.30" y="660.20" width="6.00" height="2.40" fill="#26240f"/>
<rect x="135.80" y="660.20" width="2.50" height="2.40" fill="#26240f"/>
<rect x="137.70" y="627.50" width="2.60" height="54.00" fill="#a99c22"/>
<rect x="137.70" y="582.00" width="2.60" height="8.50" fill="#26240f"/>
<rect x="137.70" y="671.50" width="2.60" height="10.00" fill="#26240f"/>
<rect x="169.20" y="640.30" width="2.40" height="2.40" fill="#26240f"/>
<rect x="172.20" y="651.30" width="2.40" height="2.40" fill="#26240f"/>
<rect x="158.20" y="666.30" width="2.40" height="2.40" fill="#26240f"/>
<rect x="142.50" y="660.20" width="2.50" height="2.40" fill="#26240f"/>
<rect x="147.50" y="660.20" width="2.50" height="2.40" fill="#26240f"/>
<rect x="152.00" y="660.20" width="5.50" height="2.40" fill="#26240f"/>
<rect x="160.50" y="660.20" width="2.50" height="2.40" fill="#26240f"/>
<rect x="165.00" y="660.20" width="2.00" height="2.40" fill="#26240f"/>
<rect x="168.50" y="660.20" width="6.00" height="2.40" fill="#26240f"/>
<rect x="176.00" y="660.20" width="2.50" height="2.40" fill="#26240f"/>
<rect x="177.70" y="627.50" width="2.60" height="54.00" fill="#a99c22"/>
<rect x="177.70" y="582.00" width="2.60" height="8.50" fill="#26240f"/>
<rect x="177.70" y="671.50" width="2.60" height="10.00" fill="#26240f"/>
<rect x="209.20" y="640.30" width="2.40" height="2.40" fill="#26240f"/>
<rect x="212.20" y="651.30" width="2.40" height="2.40" fill="#26240f"/>
<rect x="198.20" y="666.30" width="2.40" height="2.40" fill="#26240f"/>
<rect x="182.50" y="660.20" width="2.50" height="2.40" fill="#26240f"/>
<rect x="187.50" y="660.20" width="2.50" height="2.40" fill="#26240f"/>
<rect x="192.00" y="660.20" width="5.50" height="2.40" fill="#26240f"/>
<rect x="200.50" y="660.20" width="2.50" height="2.40" fill="#26240f"/>
<rect x="205.00" y="660.20" width="2.00" height="2.40" fill="#26240f"/>
<rect x="208.50" y="660.20" width="6.00" height="2.40" fill="#26240f"/>
<rect x="216.00" y="660.20" width="2.50" height="2.40" fill="#26240f"/>
<rect x="218.50" y="627.50" width="2.60" height="54.00" fill="#a99c22"/>
<rect x="250.00" y="640.30" width="2.40" height="2.40" fill="#26240f"/>
<rect x="253.00" y="651.30" width="2.40" height="2.40" fill="#26240f"/>
<rect x="239.00" y="666.30" width="2.40" height="2.40" fill="#26240f"/>
<rect x="223.30" y="660.20" width="2.50" height="2.40" fill="#26240f"/>
<rect x="228.30" y="660.20" width="2.50" height="2.40" fill="#26240f"/>
<rect x="232.80" y="660.20" width="5.50" height="2.40" fill="#26240f"/>
<rect x="241.30" y="660.20" width="2.50" height="2.40" fill="#26240f"/>
<rect x="245.80" y="660.20" width="2.00" height="2.40" fill="#26240f"/>
<rect x="249.30" y="660.20" width="6.00" height="2.40" fill="#26240f"/>
<rect x="256.80" y="660.20" width="2.50" height="2.40" fill="#26240f"/>
<rect x="257.95" y="627.50" width="2.60" height="54.00" fill="#a99c22"/>
<rect x="257.95" y="582.00" width="2.60" height="8.50" fill="#26240f"/>
<rect x="257.95" y="671.50" width="2.60" height="10.00" fill="#26240f"/>
<rect x="289.45" y="640.30" width="2.40" height="2.40" fill="#26240f"/>
<rect x="292.45" y="651.30" width="2.40" height="2.40" fill="#26240f"/>
<rect x="278.45" y="666.30" width="2.40" height="2.40" fill="#26240f"/>
<rect x="262.75" y="660.20" width="2.50" height="2.40" fill="#26240f"/>
<rect x="267.75" y="660.20" width="2.50" height="2.40" fill="#26240f"/>
<rect x="272.25" y="660.20" width="5.50" height="2.40" fill="#26240f"/>
<rect x="280.75" y="660.20" width="2.50" height="2.40" fill="#26240f"/>
<rect x="285.25" y="660.20" width="2.00" height="2.40" fill="#26240f"/>
<rect x="288.75" y="660.20" width="6.00" height="2.40" fill="#26240f"/>
<rect x="296.25" y="660.20" width="2.50" height="2.40" fill="#26240f"/>
<rect x="297.95" y="627.50" width="2.60" height="54.00" fill="#a99c22"/>
<rect x="297.95" y="582.00" width="2.60" height="8.50" fill="#26240f"/>
<rect x="297.95" y="671.50" width="2.60" height="10.00" fill="#26240f"/>
<rect x="329.45" y="640.30" width="2.40" height="2.40" fill="#26240f"/>
<rect x="332.45" y="651.30" width="2.40" height="2.40" fill="#26240f"/>
<rect x="318.45" y="666.30" width="2.40" height="2.40" fill="#26240f"/>
<rect x="302.75" y="660.20" width="2.50" height="2.40" fill="#26240f"/>
<rect x="307.75" y="660.20" width="2.50" height="2.40" fill="#26240f"/>
<rect x="312.25" y="660.20" width="5.50" height="2.40" fill="#26240f"/>
<rect x="320.75" y="660.20" width="2.50" height="2.40" fill="#26240f"/>
<rect x="325.25" y="660.20" width="2.00" height="2.40" fill="#26240f"/>
<rect x="328.75" y="660.20" width="6.00" height="2.40" fill="#26240f"/>
<rect x="336.25" y="660.20" width="2.50" height="2.40" fill="#26240f"/>
<rect x="341.20" y="627.50" width="2.60" height="54.00" fill="#a99c22"/>
<rect x="341.20" y="582.00" width="2.60" height="8.50" fill="#26240f"/>
<rect x="341.20" y="671.50" width="2.60" height="10.00" fill="#26240f"/>
<rect x="372.70" y="640.30" width="2.40" height="2.40" fill="#26240f"/>
<rect x="375.70" y="651.30" width="2.40" height="2.40" fill="#26240f"/>
<rect x="361.70" y="666.30" width="2.40" height="2.40" fill="#26240f"/>
<rect x="346.00" y="660.20" width="2.50" height="2.40" fill="#26240f"/>
<rect x="351.00" y="660.20" width="2.50" height="2.40" fill="#26240f"/>
<rect x="355.50" y="660.20" width="5.50" height="2.40" fill="#26240f"/>
<rect x="364.00" y="660.20" width="2.50" height="2.40" fill="#26240f"/>
<rect x="368.50" y="660.20" width="2.00" height="2.40" fill="#26240f"/>
<rect x="372.00" y="660.20" width="6.00" height="2.40" fill="#26240f"/>
<rect x="379.50" y="660.20" width="2.50" height="2.40" fill="#26240f"/>
<rect x="381.20" y="627.50" width="2.60" height="54.00" fill="#a99c22"/>
<rect x="412.70" y="640.30" width="2.40" height="2.40" fill="#26240f"/>
<rect x="415.70" y="651.30" width="2.40" height="2.40" fill="#26240f"/>
<rect x="401.70" y="666.30" width="2.40" height="2.40" fill="#26240f"/>
<rect x="386.00" y="660.20" width="2.50" height="2.40" fill="#26240f"/>
<rect x="391.00" y="660.20" width="2.50" height="2.40" fill="#26240f"/>
<rect x="395.50" y="660.20" width="5.50" height="2.40" fill="#26240f"/>
<rect x="404.00" y="660.20" width="2.50" height="2.40" fill="#26240f"/>
<rect x="408.50" y="660.20" width="2.00" height="2.40" fill="#26240f"/>
<rect x="412.00" y="660.20" width="6.00" height="2.40" fill="#26240f"/>
<rect x="419.50" y="660.20" width="2.50" height="2.40" fill="#26240f"/>
<rect x="421.20" y="627.50" width="2.60" height="54.00" fill="#a99c22"/>
<rect x="421.20" y="582.00" width="2.60" height="8.50" fill="#26240f"/>
<rect x="421.20" y="671.50" width="2.60" height="10.00" fill="#26240f"/>
<rect x="452.70" y="640.30" width="2.40" height="2.40" fill="#26240f"/>
<rect x="455.70" y="651.30" width="2.40" height="2.40" fill="#26240f"/>
<rect x="441.70" y="666.30" width="2.40" height="2.40" fill="#26240f"/>
<rect x="426.00" y="660.20" width="2.50" height="2.40" fill="#26240f"/>
<rect x="431.00" y="660.20" width="2.50" height="2.40" fill="#26240f"/>
<rect x="435.50" y="660.20" width="5.50" height="2.40" fill="#26240f"/>
<rect x="444.00" y="660.20" width="2.50" height="2.40" fill="#26240f"/>
<rect x="448.50" y="660.20" width="2.00" height="2.40" fill="#26240f"/>
<rect x="452.00" y="660.20" width="6.00" height="2.40" fill="#26240f"/>
<rect x="459.50" y="660.20" width="2.50" height="2.40" fill="#26240f"/>
<rect x="461.70" y="627.50" width="2.60" height="54.00" fill="#a99c22"/>
<rect x="461.70" y="582.00" width="2.60" height="8.50" fill="#26240f"/>
<rect x="461.70" y="671.50" width="2.60" height="10.00" fill="#26240f"/>
<rect x="493.20" y="640.30" width="2.40" height="2.40" fill="#26240f"/>
<rect x="496.20" y="651.30" width="2.40" height="2.40" fill="#26240f"/>
<rect x="482.20" y="666.30" width="2.40" height="2.40" fill="#26240f"/>
<rect x="466.50" y="660.20" width="2.50" height="2.40" fill="#26240f"/>
<rect x="471.50" y="660.20" width="2.50" height="2.40" fill="#26240f"/>
<rect x="476.00" y="660.20" width="5.50" height="2.40" fill="#26240f"/>
<rect x="484.50" y="660.20" width="2.50" height="2.40" fill="#26240f"/>
<rect x="489.00" y="660.20" width="2.00" height="2.40" fill="#26240f"/>
<rect x="492.50" y="660.20" width="6.00" height="2.40" fill="#26240f"/>
<rect x="500.00" y="660.20" width="2.50" height="2.40" fill="#26240f"/>
<rect x="501.70" y="627.50" width="2.60" height="54.00" fill="#a99c22"/>
<rect x="501.70" y="582.00" width="2.60" height="8.50" fill="#26240f"/>
<rect x="501.70" y="671.50" width="2.60" height="10.00" fill="#26240f"/>
<rect x="533.20" y="640.30" width="2.40" height="2.40" fill="#26240f"/>
<rect x="536.20" y="651.30" width="2.40" height="2.40" fill="#26240f"/>
<rect x="522.20" y="666.30" width="2.40" height="2.40" fill="#26240f"/>
<rect x="506.50" y="660.20" width="2.50" height="2.40" fill="#26240f"/>
<rect x="511.50" y="660.20" width="2.50" height="2.40" fill="#26240f"/>
<rect x="516.00" y="660.20" width="5.50" height="2.40" fill="#26240f"/>
<rect x="524.50" y="660.20" width="2.50" height="2.40" fill="#26240f"/>
<rect x="529.00" y="660.20" width="2.00" height="2.40" fill="#26240f"/>
<rect x="532.50" y="660.20" width="6.00" height="2.40" fill="#26240f"/>
<rect x="540.00" y="660.20" width="2.50" height="2.40" fill="#26240f"/>
<rect x="544.95" y="627.50" width="2.60" height="54.00" fill="#a99c22"/>
<rect x="544.95" y="582.00" width="2.60" height="8.50" fill="#26240f"/>
<rect x="544.95" y="671.50" width="2.60" height="10.00" fill="#26240f"/>
<rect x="576.45" y="640.30" width="2.40" height="2.40" fill="#26240f"/>
<rect x="579.45" y="651.30" width="2.40" height="2.40" fill="#26240f"/>
<rect x="565.45" y="666.30" width="2.40" height="2.40" fill="#26240f"/>
<rect x="549.75" y="660.20" width="2.50" height="2.40" fill="#26240f"/>
<rect x="554.75" y="660.20" width="2.50" height="2.40" fill="#26240f"/>
<rect x="559.25" y="660.20" width="5.50" height="2.40" fill="#26240f"/>
<rect x="567.75" y="660.20" width="2.50" height="2.40" fill="#26240f"/>
<rect x="572.25" y="660.20" width="2.00" height="2.40" fill="#26240f"/>
<rect x="575.75" y="660.20" width="6.00" height="2.40" fill="#26240f"/>
<rect x="583.25" y="660.20" width="2.50" height="2.40" fill="#26240f"/>
<rect x="584.95" y="627.50" width="2.60" height="54.00" fill="#a99c22"/>
<rect x="584.95" y="582.00" width="2.60" height="8.50" fill="#26240f"/>
<rect x="584.95" y="671.50" width="2.60" height="10.00" fill="#26240f"/>
<rect x="616.45" y="640.30" width="2.40" height="2.40" fill="#26240f"/>
<rect x="619.45" y="651.30" width="2.40" height="2.40" fill="#26240f"/>
<rect x="605.45" y="666.30" width="2.40" height="2.40" fill="#26240f"/>
<rect x="589.75" y="660.20" width="2.50" height="2.40" fill="#26240f"/>
<rect x="594.75" y="660.20" width="2.50" height="2.40" fill="#26240f"/>
<rect x="599.25" y="660.20" width="5.50" height="2.40" fill="#26240f"/>
<rect x="607.75" y="660.20" width="2.50" height="2.40" fill="#26240f"/>
<rect x="612.25" y="660.20" width="2.00" height="2.40" fill="#26240f"/>
<rect x="615.75" y="660.20" width="6.00" height="2.40" fill="#26240f"/>
<rect x="623.25" y="660.20" width="2.50" height="2.40" fill="#26240f"/>
<rect x="625.45" y="627.50" width="2.60" height="54.00" fill="#a99c22"/>
<rect x="625.45" y="582.00" width="2.60" height="8.50" fill="#26240f"/>
<rect x="625.45" y="671.50" width="2.60" height="10.00" fill="#26240f"/>
<rect x="656.95" y="640.30" width="2.40" height="2.40" fill="#26240f"/>
<rect x="659.95" y="651.30" width="2.40" height="2.40" fill="#26240f"/>
<rect x="645.95" y="666.30" width="2.40" height="2.40" fill="#26240f"/>
<rect x="630.25" y="660.20" width="2.50" height="2.40" fill="#26240f"/>
<rect x="635.25" y="660.20" width="2.50" height="2.40" fill="#26240f"/>
<rect x="639.75" y="660.20" width="5.50" height="2.40" fill="#26240f"/>
<rect x="648.25" y="660.20" width="2.50" height="2.40" fill="#26240f"/>
<rect x="652.75" y="660.20" width="2.00" height="2.40" fill="#26240f"/>
<rect x="656.25" y="660.20" width="6.00" height="2.40" fill="#26240f"/>
<rect x="663.75" y="660.20" width="2.50" height="2.40" fill="#26240f"/>
<rect x="665.45" y="627.50" width="2.60" height="54.00" fill="#a99c22"/>
<rect x="665.45" y="582.00" width="2.60" height="8.50" fill="#26240f"/>
<rect x="665.45" y="671.50" width="2.60" height="10.00" fill="#26240f"/>
<rect x="696.95" y="640.30" width="2.40" height="2.40" fill="#26240f"/>
<rect x="699.95" y="651.30" width="2.40" height="2.40" fill="#26240f"/>
<rect x="685.95" y="666.30" width="2.40" height="2.40" fill="#26240f"/>
<rect x="670.25" y="660.20" width="2.50" height="2.40" fill="#26240f"/>
<rect x="675.25" y="660.20" width="2.50" height="2.40" fill="#26240f"/>
<rect x="679.75" y="660.20" width="5.50" height="2.40" fill="#26240f"/>
<rect x="688.25" y="660.20" width="2.50" height="2.40" fill="#26240f"/>
<rect x="692.75" y="660.20" width="2.00" height="2.40" fill="#26240f"/>
<rect x="696.25" y="660.20" width="6.00" height="2.40" fill="#26240f"/>
<rect x="703.75" y="660.20" width="2.50" height="2.40" fill="#26240f"/>
<rect x="705.55" y="627.50" width="2.60" height="54.00" fill="#a99c22"/>
<rect x="705.55" y="582.00" width="2.60" height="8.50" fill="#26240f"/>
<rect x="705.55" y="671.50" width="2.60" height="10.00" fill="#26240f"/>
<rect x="737.05" y="640.30" width="2.40" height="2.40" fill="#26240f"/>
<rect x="740.05" y="651.30" width="2.40" height="2.40" fill="#26240f"/>
<rect x="726.05" y="666.30" width="2.40" height="2.40" fill="#26240f"/>
<rect x="710.35" y="660.20" width="2.50" height="2.40" fill="#26240f"/>
<rect x="715.35" y="660.20" width="2.50" height="2.40" fill="#26240f"/>
<rect x="719.85" y="660.20" width="5.50" height="2.40" fill="#26240f"/>
<rect x="728.35" y="660.20" width="2.50" height="2.40" fill="#26240f"/>
<rect x="732.85" y="660.20" width="2.00" height="2.40" fill="#26240f"/>
<rect x="736.35" y="660.20" width="6.00" height="2.40" fill="#26240f"/>
<rect x="743.85" y="660.20" width="2.50" height="2.40" fill="#26240f"/>
<rect x="745.70" y="627.50" width="2.60" height="54.00" fill="#a99c22"/>
<rect x="745.70" y="582.00" width="2.60" height="8.50" fill="#26240f"/>
<rect x="745.70" y="671.50" width="2.60" height="10.00" fill="#26240f"/>
<rect x="777.20" y="640.30" width="2.40" height="2.40" fill="#26240f"/>
<rect x="780.20" y="651.30" width="2.40" height="2.40" fill="#26240f"/>
<rect x="766.20" y="666.30" width="2.40" height="2.40" fill="#26240f"/>
<rect x="750.50" y="660.20" width="2.50" height="2.40" fill="#26240f"/>
<rect x="755.50" y="660.20" width="2.50" height="2.40" fill="#26240f"/>
<rect x="760.00" y="660.20" width="5.50" height="2.40" fill="#26240f"/>
<rect x="768.50" y="660.20" width="2.50" height="2.40" fill="#26240f"/>
<rect x="773.00" y="660.20" width="2.00" height="2.40" fill="#26240f"/>
<rect x="776.50" y="660.20" width="6.00" height="2.40" fill="#26240f"/>
<rect x="784.00" y="660.20" width="2.50" height="2.40" fill="#26240f"/>
<rect x="788.70" y="627.50" width="2.60" height="54.00" fill="#a99c22"/>
<rect x="788.70" y="582.00" width="2.60" height="8.50" fill="#26240f"/>
<rect x="788.70" y="671.50" width="2.60" height="10.00" fill="#26240f"/>
<rect x="820.20" y="640.30" width="2.40" height="2.40" fill="#26240f"/>
<rect x="823.20" y="651.30" width="2.40" height="2.40" fill="#26240f"/>
<rect x="809.20" y="666.30" width="2.40" height="2.40" fill="#26240f"/>
<rect x="793.50" y="660.20" width="2.50" height="2.40" fill="#26240f"/>
<rect x="798.50" y="660.20" width="2.50" height="2.40" fill="#26240f"/>
<rect x="803.00" y="660.20" width="5.50" height="2.40" fill="#26240f"/>
<rect x="811.50" y="660.20" width="2.50" height="2.40" fill="#26240f"/>
<rect x="816.00" y="660.20" width="2.00" height="2.40" fill="#26240f"/>
<rect x="819.50" y="660.20" width="6.00" height="2.40" fill="#26240f"/>
<rect x="827.00" y="660.20" width="2.50" height="2.40" fill="#26240f"/>
<rect x="828.70" y="627.50" width="2.60" height="54.00" fill="#a99c22"/>
<rect x="828.70" y="582.00" width="2.60" height="8.50" fill="#26240f"/>
<rect x="828.70" y="671.50" width="2.60" height="10.00" fill="#26240f"/>
<rect x="860.20" y="640.30" width="2.40" height="2.40" fill="#26240f"/>
<rect x="863.20" y="651.30" width="2.40" height="2.40" fill="#26240f"/>
<rect x="849.20" y="666.30" width="2.40" height="2.40" fill="#26240f"/>
<rect x="833.50" y="660.20" width="2.50" height="2.40" fill="#26240f"/>
<rect x="838.50" y="660.20" width="2.50" height="2.40" fill="#26240f"/>
<rect x="843.00" y="660.20" width="5.50" height="2.40" fill="#26240f"/>
<rect x="851.50" y="660.20" width="2.50" height="2.40" fill="#26240f"/>
<rect x="856.00" y="660.20" width="2.00" height="2.40" fill="#26240f"/>
<rect x="859.50" y="660.20" width="6.00" height="2.40" fill="#26240f"/>
<rect x="867.00" y="660.20" width="2.50" height="2.40" fill="#26240f"/>
<rect x="868.95" y="627.50" width="2.60" height="54.00" fill="#a99c22"/>
<rect x="868.95" y="582.00" width="2.60" height="8.50" fill="#26240f"/>
<rect x="868.95" y="671.50" width="2.60" height="10.00" fill="#26240f"/>
<rect x="900.45" y="640.30" width="2.40" height="2.40" fill="#26240f"/>
<rect x="903.45" y="651.30" width="2.40" height="2.40" fill="#26240f"/>
<rect x="889.45" y="666.30" width="2.40" height="2.40" fill="#26240f"/>
<rect x="873.75" y="660.20" width="2.50" height="2.40" fill="#26240f"/>
<rect x="878.75" y="660.20" width="2.50" height="2.40" fill="#26240f"/>
<rect x="883.25" y="660.20" width="5.50" height="2.40" fill="#26240f"/>
<rect x="891.75" y="660.20" width="2.50" height="2.40" fill="#26240f"/>
<rect x="896.25" y="660.20" width="2.00" height="2.40" fill="#26240f"/>
<rect x="899.75" y="660.20" width="6.00" height="2.40" fill="#26240f"/>
<rect x="907.25" y="660.20" width="2.50" height="2.40" fill="#26240f"/>
<rect x="909.20" y="627.50" width="2.60" height="54.00" fill="#a99c22"/>
<rect x="909.20" y="582.00" width="2.60" height="8.50" fill="#26240f"/>
<rect x="909.20" y="671.50" width="2.60" height="10.00" fill="#26240f"/>
<rect x="940.70" y="640.30" width="2.40" height="2.40" fill="#26240f"/>
<rect x="943.70" y="651.30" width="2.40" height="2.40" fill="#26240f"/>
<rect x="929.70" y="666.30" width="2.40" height="2.40" fill="#26240f"/>
<rect x="914.00" y="660.20" width="2.50" height="2.40" fill="#26240f"/>
<rect x="919.00" y="660.20" width="2.50" height="2.40" fill="#26240f"/>
<rect x="923.50" y="660.20" width="5.50" height="2.40" fill="#26240f"/>
<rect x="932.00" y="660.20" width="2.50" height="2.40" fill="#26240f"/>
<rect x="936.50" y="660.20" width="2.00" height="2.40" fill="#26240f"/>
<rect x="940.00" y="660.20" width="6.00" height="2.40" fill="#26240f"/>
<rect x="947.50" y="660.20" width="2.50" height="2.40" fill="#26240f"/>
<rect x="949.45" y="627.50" width="2.60" height="54.00" fill="#a99c22"/>
<rect x="949.45" y="582.00" width="2.60" height="8.50" fill="#26240f"/>
<rect x="949.45" y="671.50" width="2.60" height="10.00" fill="#26240f"/>
<rect x="980.95" y="640.30" width="2.40" height="2.40" fill="#26240f"/>
<rect x="983.95" y="651.30" width="2.40" height="2.40" fill="#26240f"/>
<rect x="969.95" y="666.30" width="2.40" height="2.40" fill="#26240f"/>
<rect x="954.25" y="660.20" width="2.50" height="2.40" fill="#26240f"/>
<rect x="959.25" y="660.20" width="2.50" height="2.40" fill="#26240f"/>
<rect x="963.75" y="660.20" width="5.50" height="2.40" fill="#26240f"/>
<rect x="972.25" y="660.20" width="2.50" height="2.40" fill="#26240f"/>
<rect x="976.75" y="660.20" width="2.00" height="2.40" fill="#26240f"/>
<rect x="980.25" y="660.20" width="6.00" height="2.40" fill="#26240f"/>
<rect x="987.75" y="660.20" width="2.50" height="2.40" fill="#26240f"/>
<rect x="992.45" y="627.50" width="2.60" height="54.00" fill="#a99c22"/>
<rect x="992.45" y="582.00" width="2.60" height="8.50" fill="#26240f"/>
<rect x="992.45" y="671.50" width="2.60" height="10.00" fill="#26240f"/>
<rect x="1023.95" y="640.30" width="2.40" height="2.40" fill="#26240f"/>
<rect x="1026.95" y="651.30" width="2.40" height="2.40" fill="#26240f"/>
<rect x="1012.95" y="666.30" width="2.40" height="2.40" fill="#26240f"/>
<rect x="997.25" y="660.20" width="2.50" height="2.40" fill="#26240f"/>
<rect x="1002.25" y="660.20" width="2.50" height="2.40" fill="#26240f"/>
<rect x="1006.75" y="660.20" width="5.50" height="2.40" fill="#26240f"/>
<rect x="1015.25" y="660.20" width="2.50" height="2.40" fill="#26240f"/>
<rect x="1019.75" y="660.20" width="2.00" height="2.40" fill="#26240f"/>
<rect x="1023.25" y="660.20" width="6.00" height="2.40" fill="#26240f"/>
<rect x="1030.75" y="660.20" width="2.50" height="2.40" fill="#26240f"/>
<rect x="1032.45" y="627.50" width="2.60" height="54.00" fill="#a99c22"/>
<rect x="1032.45" y="582.00" width="2.60" height="8.50" fill="#26240f"/>
<rect x="1032.45" y="671.50" width="2.60" height="10.00" fill="#26240f"/>
<rect x="1063.95" y="640.30" width="2.40" height="2.40" fill="#26240f"/>
<rect x="1066.95" y="651.30" width="2.40" height="2.40" fill="#26240f"/>
<rect x="1052.95" y="666.30" width="2.40" height="2.40" fill="#26240f"/>
<rect x="1037.25" y="660.20" width="2.50" height="2.40" fill="#26240f"/>
<rect x="1042.25" y="660.20" width="2.50" height="2.40" fill="#26240f"/>
<rect x="1046.75" y="660.20" width="5.50" height="2.40" fill="#26240f"/>
<rect x="1055.25" y="660.20" width="2.50" height="2.40" fill="#26240f"/>
<rect x="1059.75" y="660.20" width="2.00" height="2.40" fill="#26240f"/>
<rect x="1063.25" y="660.20" width="6.00" height="2.40" fill="#26240f"/>
<rect x="1070.75" y="660.20" width="2.50" height="2.40" fill="#26240f"/>
<rect x="1072.45" y="627.50" width="2.60" height="54.00" fill="#a99c22"/>
<rect x="1072.45" y="582.00" width="2.60" height="8.50" fill="#26240f"/>
<rect x="1072.45" y="671.50" width="2.60" height="10.00" fill="#26240f"/>
<rect x="1103.95" y="640.30" width="2.40" height="2.40" fill="#26240f"/>
<rect x="1106.95" y="651.30" width="2.40" height="2.40" fill="#26240f"/>
<rect x="1092.95" y="666.30" width="2.40" height="2.40" fill="#26240f"/>
<rect x="1077.25" y="660.20" width="2.50" height="2.40" fill="#26240f"/>
<rect x="1082.25" y="660.20" width="2.50" height="2.40" fill="#26240f"/>
<rect x="1086.75" y="660.20" width="5.50" height="2.40" fill="#26240f"/>
<rect x="1095.25" y="660.20" width="2.50" height="2.40" fill="#26240f"/>
<rect x="1099.75" y="660.20" width="2.00" height="2.40" fill="#26240f"/>
<rect x="1103.25" y="660.20" width="6.00" height="2.40" fill="#26240f"/>
<rect x="1110.75" y="660.20" width="2.50" height="2.40" fill="#26240f"/>
<rect x="1112.95" y="627.50" width="2.60" height="54.00" fill="#a99c22"/>
<rect x="1112.95" y="582.00" width="2.60" height="8.50" fill="#26240f"/>
<rect x="1112.95" y="671.50" width="2.60" height="10.00" fill="#26240f"/>
<rect x="1144.45" y="640.30" width="2.40" height="2.40" fill="#26240f"/>
<rect x="1147.45" y="651.30" width="2.40" height="2.40" fill="#26240f"/>
<rect x="1133.45" y="666.30" width="2.40" height="2.40" fill="#26240f"/>
<rect x="1117.75" y="660.20" width="2.50" height="2.40" fill="#26240f"/>
<rect x="1122.75" y="660.20" width="2.50" height="2.40" fill="#26240f"/>
<rect x="1127.25" y="660.20" width="5.50" height="2.40" fill="#26240f"/>
<rect x="1135.75" y="660.20" width="2.50" height="2.40" fill="#26240f"/>
<rect x="1140.25" y="660.20" width="2.00" height="2.40" fill="#26240f"/>
<rect x="1143.75" y="660.20" width="6.00" height="2.40" fill="#26240f"/>
<rect x="1151.25" y="660.20" width="2.50" height="2.40" fill="#26240f"/>
<rect x="1152.95" y="627.50" width="2.60" height="54.00" fill="#a99c22"/>
<rect x="1152.95" y="582.00" width="2.60" height="8.50" fill="#26240f"/>
<rect x="1152.95" y="671.50" width="2.60" height="10.00" fill="#26240f"/>
<rect x="1184.45" y="640.30" width="2.40" height="2.40" fill="#26240f"/>
<rect x="1187.45" y="651.30" width="2.40" height="2.40" fill="#26240f"/>
<rect x="1173.45" y="666.30" width="2.40" height="2.40" fill="#26240f"/>
<rect x="1157.75" y="660.20" width="2.50" height="2.40" fill="#26240f"/>
<rect x="1162.75" y="660.20" width="2.50" height="2.40" fill="#26240f"/>
<rect x="1167.25" y="660.20" width="5.50" height="2.40" fill="#26240f"/>
<rect x="1175.75" y="660.20" width="2.50" height="2.40" fill="#26240f"/>
<rect x="1180.25" y="660.20" width="2.00" height="2.40" fill="#26240f"/>
<rect x="1183.75" y="660.20" width="6.00" height="2.40" fill="#26240f"/>
<rect x="1191.25" y="660.20" width="2.50" height="2.40" fill="#26240f"/>
<rect x="1193.70" y="627.50" width="2.60" height="54.00" fill="#a99c22"/>
<rect x="1193.70" y="582.00" width="2.60" height="8.50" fill="#26240f"/>
<rect x="1193.70" y="671.50" width="2.60" height="10.00" fill="#26240f"/>
<rect x="1225.20" y="640.30" width="2.40" height="2.40" fill="#26240f"/>
<rect x="1228.20" y="651.30" width="2.40" height="2.40" fill="#26240f"/>
<rect x="1214.20" y="666.30" width="2.40" height="2.40" fill="#26240f"/>
<rect x="1198.50" y="660.20" width="2.50" height="2.40" fill="#26240f"/>
<rect x="1203.50" y="660.20" width="2.50" height="2.40" fill="#26240f"/>
<rect x="1208.00" y="660.20" width="5.50" height="2.40" fill="#26240f"/>
<rect x="1216.50" y="660.20" width="2.50" height="2.40" fill="#26240f"/>
<rect x="1221.00" y="660.20" width="2.00" height="2.40" fill="#26240f"/>
<rect x="1224.50" y="660.20" width="6.00" height="2.40" fill="#26240f"/>
<rect x="1232.00" y="660.20" width="2.50" height="2.40" fill="#26240f"/>
<rect x="1234.20" y="627.50" width="2.60" height="54.00" fill="#a99c22"/>
<rect x="1234.20" y="582.00" width="2.60" height="8.50" fill="#26240f"/>
<rect x="1234.20" y="671.50" width="2.60" height="10.00" fill="#26240f"/>
<rect x="1265.70" y="640.30" width="2.40" height="2.40" fill="#26240f"/>
<rect x="1268.70" y="651.30" width="2.40" height="2.40" fill="#26240f"/>
<rect x="1254.70" y="666.30" width="2.40" height="2.40" fill="#26240f"/>
<rect x="1239.00" y="660.20" width="2.50" height="2.40" fill="#26240f"/>
<rect x="1244.00" y="660.20" width="2.50" height="2.40" fill="#26240f"/>
<rect x="1248.50" y="660.20" width="5.50" height="2.40" fill="#26240f"/>
<rect x="1257.00" y="660.20" width="2.50" height="2.40" fill="#26240f"/>
<rect x="1261.50" y="660.20" width="2.00" height="2.40" fill="#26240f"/>
<rect x="1265.00" y="660.20" width="6.00" height="2.40" fill="#26240f"/>
<rect x="1272.50" y="660.20" width="2.50" height="2.40" fill="#26240f"/>
<rect x="0.00" y="687.00" width="1200.00" height="100.50" fill="#fb3cda"/>
<rect x="0.00" y="687.00" width="1200.00" height="1.20" fill="#c930b0"/>
<rect x="0.00" y="731.30" width="1200.00" height="2.00" fill="#bb2ca8"/>
<rect x="137.70" y="687.00" width="2.60" height="100.50" fill="#931e8f"/>
<rect x="218.50" y="687.00" width="2.60" height="100.50" fill="#931e8f"/>
<rect x="297.95" y="687.00" width="2.60" height="100.50" fill="#931e8f"/>
<rect x="54.00" y="687.00" width="1.00" height="46.00" fill="#931e8f"/>
<rect x="-25.90" y="733.00" width="2.60" height="54.50" fill="#931e8f"/>
<rect x="-25.90" y="688.00" width="2.60" height="8.50" fill="#3d0c40"/>
<rect x="-25.90" y="777.50" width="2.60" height="10.00" fill="#3d0c40"/>
<rect x="2.40" y="735.20" width="4.00" height="2.20" fill="#86198a"/>
<rect x="8.40" y="735.20" width="6.00" height="2.20" fill="#86198a"/>
<rect x="-18.60" y="743.60" width="2.00" height="2.20" fill="#86198a"/>
<rect x="-14.60" y="743.60" width="2.00" height="2.20" fill="#86198a"/>
<rect x="-11.10" y="743.60" width="8.50" height="2.20" fill="#86198a"/>
<rect x="-0.10" y="746.30" width="2.00" height="2.20" fill="#86198a"/>
<rect x="-20.60" y="752.20" width="2.00" height="2.20" fill="#86198a"/>
<rect x="3.40" y="764.20" width="4.00" height="2.20" fill="#86198a"/>
<rect x="9.90" y="764.20" width="5.50" height="2.20" fill="#86198a"/>
<rect x="-18.60" y="775.30" width="2.00" height="2.20" fill="#86198a"/>
<rect x="-14.60" y="775.30" width="2.00" height="2.20" fill="#86198a"/>
<rect x="-11.10" y="775.30" width="8.50" height="2.20" fill="#86198a"/>
<rect x="-0.10" y="778.00" width="2.00" height="2.20" fill="#86198a"/>
<rect x="-20.60" y="784.00" width="2.00" height="2.20" fill="#86198a"/>
<rect x="14.50" y="733.00" width="2.60" height="54.50" fill="#931e8f"/>
<rect x="14.50" y="688.00" width="2.60" height="8.50" fill="#3d0c40"/>
<rect x="14.50" y="777.50" width="2.60" height="10.00" fill="#3d0c40"/>
<rect x="42.80" y="735.20" width="4.00" height="2.20" fill="#86198a"/>
<rect x="48.80" y="735.20" width="6.00" height="2.20" fill="#86198a"/>
<rect x="21.80" y="743.60" width="2.00" height="2.20" fill="#86198a"/>
<rect x="25.80" y="743.60" width="2.00" height="2.20" fill="#86198a"/>
<rect x="29.30" y="743.60" width="8.50" height="2.20" fill="#86198a"/>
<rect x="40.30" y="746.30" width="2.00" height="2.20" fill="#86198a"/>
<rect x="19.80" y="752.20" width="2.00" height="2.20" fill="#86198a"/>
<rect x="43.80" y="764.20" width="4.00" height="2.20" fill="#86198a"/>
<rect x="50.30" y="764.20" width="5.50" height="2.20" fill="#86198a"/>
<rect x="21.80" y="775.30" width="2.00" height="2.20" fill="#86198a"/>
<rect x="25.80" y="775.30" width="2.00" height="2.20" fill="#86198a"/>
<rect x="29.30" y="775.30" width="8.50" height="2.20" fill="#86198a"/>
<rect x="40.30" y="778.00" width="2.00" height="2.20" fill="#86198a"/>
<rect x="19.80" y="784.00" width="2.00" height="2.20" fill="#86198a"/>
<rect x="54.60" y="733.00" width="2.60" height="54.50" fill="#931e8f"/>
<rect x="82.90" y="735.20" width="4.00" height="2.20" fill="#86198a"/>
<rect x="88.90" y="735.20" width="6.00" height="2.20" fill="#86198a"/>
<rect x="61.90" y="743.60" width="2.00" height="2.20" fill="#86198a"/>
<rect x="65.90" y="743.60" width="2.00" height="2.20" fill="#86198a"/>
<rect x="69.40" y="743.60" width="8.50" height="2.20" fill="#86198a"/>
<rect x="80.40" y="746.30" width="2.00" height="2.20" fill="#86198a"/>
<rect x="59.90" y="752.20" width="2.00" height="2.20" fill="#86198a"/>
<rect x="83.90" y="764.20" width="4.00" height="2.20" fill="#86198a"/>
<rect x="90.40" y="764.20" width="5.50" height="2.20" fill="#86198a"/>
<rect x="61.90" y="775.30" width="2.00" height="2.20" fill="#86198a"/>
<rect x="65.90" y="775.30" width="2.00" height="2.20" fill="#86198a"/>
<rect x="69.40" y="775.30" width="8.50" height="2.20" fill="#86198a"/>
<rect x="80.40" y="778.00" width="2.00" height="2.20" fill="#86198a"/>
<rect x="59.90" y="784.00" width="2.00" height="2.20" fill="#86198a"/>
<rect x="97.50" y="733.00" width="2.60" height="54.50" fill="#931e8f"/>
<rect x="97.50" y="688.00" width="2.60" height="8.50" fill="#3d0c40"/>
<rect x="97.50" y="777.50" width="2.60" height="10.00" fill="#3d0c40"/>
<rect x="125.80" y="735.20" width="4.00" height="2.20" fill="#86198a"/>
<rect x="131.80" y="735.20" width="6.00" height="2.20" fill="#86198a"/>
<rect x="104.80" y="743.60" width="2.00" height="2.20" fill="#86198a"/>
<rect x="108.80" y="743.60" width="2.00" height="2.20" fill="#86198a"/>
<rect x="112.30" y="743.60" width="8.50" height="2.20" fill="#86198a"/>
<rect x="123.30" y="746.30" width="2.00" height="2.20" fill="#86198a"/>
<rect x="102.80" y="752.20" width="2.00" height="2.20" fill="#86198a"/>
<rect x="126.80" y="764.20" width="4.00" height="2.20" fill="#86198a"/>
<rect x="133.30" y="764.20" width="5.50" height="2.20" fill="#86198a"/>
<rect x="104.80" y="775.30" width="2.00" height="2.20" fill="#86198a"/>
<rect x="108.80" y="775.30" width="2.00" height="2.20" fill="#86198a"/>
<rect x="112.30" y="775.30" width="8.50" height="2.20" fill="#86198a"/>
<rect x="123.30" y="778.00" width="2.00" height="2.20" fill="#86198a"/>
<rect x="102.80" y="784.00" width="2.00" height="2.20" fill="#86198a"/>
<rect x="137.70" y="733.00" width="2.60" height="54.50" fill="#931e8f"/>
<rect x="166.00" y="735.20" width="4.00" height="2.20" fill="#86198a"/>
<rect x="172.00" y="735.20" width="6.00" height="2.20" fill="#86198a"/>
<rect x="145.00" y="743.60" width="2.00" height="2.20" fill="#86198a"/>
<rect x="149.00" y="743.60" width="2.00" height="2.20" fill="#86198a"/>
<rect x="152.50" y="743.60" width="8.50" height="2.20" fill="#86198a"/>
<rect x="163.50" y="746.30" width="2.00" height="2.20" fill="#86198a"/>
<rect x="143.00" y="752.20" width="2.00" height="2.20" fill="#86198a"/>
<rect x="167.00" y="764.20" width="4.00" height="2.20" fill="#86198a"/>
<rect x="173.50" y="764.20" width="5.50" height="2.20" fill="#86198a"/>
<rect x="145.00" y="775.30" width="2.00" height="2.20" fill="#86198a"/>
<rect x="149.00" y="775.30" width="2.00" height="2.20" fill="#86198a"/>
<rect x="152.50" y="775.30" width="8.50" height="2.20" fill="#86198a"/>
<rect x="163.50" y="778.00" width="2.00" height="2.20" fill="#86198a"/>
<rect x="143.00" y="784.00" width="2.00" height="2.20" fill="#86198a"/>
<rect x="177.70" y="733.00" width="2.60" height="54.50" fill="#931e8f"/>
<rect x="177.70" y="688.00" width="2.60" height="8.50" fill="#3d0c40"/>
<rect x="177.70" y="777.50" width="2.60" height="10.00" fill="#3d0c40"/>
<rect x="206.00" y="735.20" width="4.00" height="2.20" fill="#86198a"/>
<rect x="212.00" y="735.20" width="6.00" height="2.20" fill="#86198a"/>
<rect x="185.00" y="743.60" width="2.00" height="2.20" fill="#86198a"/>
<rect x="189.00" y="743.60" width="2.00" height="2.20" fill="#86198a"/>
<rect x="192.50" y="743.60" width="8.50" height="2.20" fill="#86198a"/>
<rect x="203.50" y="746.30" width="2.00" height="2.20" fill="#86198a"/>
<rect x="183.00" y="752.20" width="2.00" height="2.20" fill="#86198a"/>
<rect x="207.00" y="764.20" width="4.00" height="2.20" fill="#86198a"/>
<rect x="213.50" y="764.20" width="5.50" height="2.20" fill="#86198a"/>
<rect x="185.00" y="775.30" width="2.00" height="2.20" fill="#86198a"/>
<rect x="189.00" y="775.30" width="2.00" height="2.20" fill="#86198a"/>
<rect x="192.50" y="775.30" width="8.50" height="2.20" fill="#86198a"/>
<rect x="203.50" y="778.00" width="2.00" height="2.20" fill="#86198a"/>
<rect x="183.00" y="784.00" width="2.00" height="2.20" fill="#86198a"/>
<rect x="218.50" y="733.00" width="2.60" height="54.50" fill="#931e8f"/>
<rect x="246.80" y="735.20" width="4.00" height="2.20" fill="#86198a"/>
<rect x="252.80" y="735.20" width="6.00" height="2.20" fill="#86198a"/>
<rect x="225.80" y="743.60" width="2.00" height="2.20" fill="#86198a"/>
<rect x="229.80" y="743.60" width="2.00" height="2.20" fill="#86198a"/>
<rect x="233.30" y="743.60" width="8.50" height="2.20" fill="#86198a"/>
<rect x="244.30" y="746.30" width="2.00" height="2.20" fill="#86198a"/>
<rect x="223.80" y="752.20" width="2.00" height="2.20" fill="#86198a"/>
<rect x="247.80" y="764.20" width="4.00" height="2.20" fill="#86198a"/>
<rect x="254.30" y="764.20" width="5.50" height="2.20" fill="#86198a"/>
<rect x="225.80" y="775.30" width="2.00" height="2.20" fill="#86198a"/>
<rect x="229.80" y="775.30" width="2.00" height="2.20" fill="#86198a"/>
<rect x="233.30" y="775.30" width="8.50" height="2.20" fill="#86198a"/>
<rect x="244.30" y="778.00" width="2.00" height="2.20" fill="#86198a"/>
<rect x="223.80" y="784.00" width="2.00" height="2.20" fill="#86198a"/>
<rect x="257.95" y="733.00" width="2.60" height="54.50" fill="#931e8f"/>
<rect x="257.95" y="688.00" width="2.60" height="8.50" fill="#3d0c40"/>
<rect x="257.95" y="777.50" width="2.60" height="10.00" fill="#3d0c40"/>
<rect x="286.25" y="735.20" width="4.00" height="2.20" fill="#86198a"/>
<rect x="292.25" y="735.20" width="6.00" height="2.20" fill="#86198a"/>
<rect x="265.25" y="743.60" width="2.00" height="2.20" fill="#86198a"/>
<rect x="269.25" y="743.60" width="2.00" height="2.20" fill="#86198a"/>
<rect x="272.75" y="743.60" width="8.50" height="2.20" fill="#86198a"/>
<rect x="283.75" y="746.30" width="2.00" height="2.20" fill="#86198a"/>
<rect x="263.25" y="752.20" width="2.00" height="2.20" fill="#86198a"/>
<rect x="287.25" y="764.20" width="4.00" height="2.20" fill="#86198a"/>
<rect x="293.75" y="764.20" width="5.50" height="2.20" fill="#86198a"/>
<rect x="265.25" y="775.30" width="2.00" height="2.20" fill="#86198a"/>
<rect x="269.25" y="775.30" width="2.00" height="2.20" fill="#86198a"/>
<rect x="272.75" y="775.30" width="8.50" height="2.20" fill="#86198a"/>
<rect x="283.75" y="778.00" width="2.00" height="2.20" fill="#86198a"/>
<rect x="263.25" y="784.00" width="2.00" height="2.20" fill="#86198a"/>
<rect x="297.95" y="733.00" width="2.60" height="54.50" fill="#931e8f"/>
<rect x="326.25" y="735.20" width="4.00" height="2.20" fill="#86198a"/>
<rect x="332.25" y="735.20" width="6.00" height="2.20" fill="#86198a"/>
<rect x="305.25" y="743.60" width="2.00" height="2.20" fill="#86198a"/>
<rect x="309.25" y="743.60" width="2.00" height="2.20" fill="#86198a"/>
<rect x="312.75" y="743.60" width="8.50" height="2.20" fill="#86198a"/>
<rect x="323.75" y="746.30" width="2.00" height="2.20" fill="#86198a"/>
<rect x="303.25" y="752.20" width="2.00" height="2.20" fill="#86198a"/>
<rect x="327.25" y="764.20" width="4.00" height="2.20" fill="#86198a"/>
<rect x="333.75" y="764.20" width="5.50" height="2.20" fill="#86198a"/>
<rect x="305.25" y="775.30" width="2.00" height="2.20" fill="#86198a"/>
<rect x="309.25" y="775.30" width="2.00" height="2.20" fill="#86198a"/>
<rect x="312.75" y="775.30" width="8.50" height="2.20" fill="#86198a"/>
<rect x="323.75" y="778.00" width="2.00" height="2.20" fill="#86198a"/>
<rect x="303.25" y="784.00" width="2.00" height="2.20" fill="#86198a"/>
<rect x="341.20" y="733.00" width="2.60" height="54.50" fill="#931e8f"/>
<rect x="341.20" y="688.00" width="2.60" height="8.50" fill="#3d0c40"/>
<rect x="341.20" y="777.50" width="2.60" height="10.00" fill="#3d0c40"/>
<rect x="369.50" y="735.20" width="4.00" height="2.20" fill="#86198a"/>
<rect x="375.50" y="735.20" width="6.00" height="2.20" fill="#86198a"/>
<rect x="348.50" y="743.60" width="2.00" height="2.20" fill="#86198a"/>
<rect x="352.50" y="743.60" width="2.00" height="2.20" fill="#86198a"/>
<rect x="356.00" y="743.60" width="8.50" height="2.20" fill="#86198a"/>
<rect x="367.00" y="746.30" width="2.00" height="2.20" fill="#86198a"/>
<rect x="346.50" y="752.20" width="2.00" height="2.20" fill="#86198a"/>
<rect x="370.50" y="764.20" width="4.00" height="2.20" fill="#86198a"/>
<rect x="377.00" y="764.20" width="5.50" height="2.20" fill="#86198a"/>
<rect x="348.50" y="775.30" width="2.00" height="2.20" fill="#86198a"/>
<rect x="352.50" y="775.30" width="2.00" height="2.20" fill="#86198a"/>
<rect x="356.00" y="775.30" width="8.50" height="2.20" fill="#86198a"/>
<rect x="367.00" y="778.00" width="2.00" height="2.20" fill="#86198a"/>
<rect x="346.50" y="784.00" width="2.00" height="2.20" fill="#86198a"/>
<rect x="381.20" y="733.00" width="2.60" height="54.50" fill="#931e8f"/>
<rect x="381.20" y="688.00" width="2.60" height="8.50" fill="#3d0c40"/>
<rect x="381.20" y="777.50" width="2.60" height="10.00" fill="#3d0c40"/>
<rect x="409.50" y="735.20" width="4.00" height="2.20" fill="#86198a"/>
<rect x="415.50" y="735.20" width="6.00" height="2.20" fill="#86198a"/>
<rect x="388.50" y="743.60" width="2.00" height="2.20" fill="#86198a"/>
<rect x="392.50" y="743.60" width="2.00" height="2.20" fill="#86198a"/>
<rect x="396.00" y="743.60" width="8.50" height="2.20" fill="#86198a"/>
<rect x="407.00" y="746.30" width="2.00" height="2.20" fill="#86198a"/>
<rect x="386.50" y="752.20" width="2.00" height="2.20" fill="#86198a"/>
<rect x="410.50" y="764.20" width="4.00" height="2.20" fill="#86198a"/>
<rect x="417.00" y="764.20" width="5.50" height="2.20" fill="#86198a"/>
<rect x="388.50" y="775.30" width="2.00" height="2.20" fill="#86198a"/>
<rect x="392.50" y="775.30" width="2.00" height="2.20" fill="#86198a"/>
<rect x="396.00" y="775.30" width="8.50" height="2.20" fill="#86198a"/>
<rect x="407.00" y="778.00" width="2.00" height="2.20" fill="#86198a"/>
<rect x="386.50" y="784.00" width="2.00" height="2.20" fill="#86198a"/>
<rect x="421.20" y="733.00" width="2.60" height="54.50" fill="#931e8f"/>
<rect x="421.20" y="688.00" width="2.60" height="8.50" fill="#3d0c40"/>
<rect x="421.20" y="777.50" width="2.60" height="10.00" fill="#3d0c40"/>
<rect x="449.50" y="735.20" width="4.00" height="2.20" fill="#86198a"/>
<rect x="455.50" y="735.20" width="6.00" height="2.20" fill="#86198a"/>
<rect x="428.50" y="743.60" width="2.00" height="2.20" fill="#86198a"/>
<rect x="432.50" y="743.60" width="2.00" height="2.20" fill="#86198a"/>
<rect x="436.00" y="743.60" width="8.50" height="2.20" fill="#86198a"/>
<rect x="447.00" y="746.30" width="2.00" height="2.20" fill="#86198a"/>
<rect x="426.50" y="752.20" width="2.00" height="2.20" fill="#86198a"/>
<rect x="450.50" y="764.20" width="4.00" height="2.20" fill="#86198a"/>
<rect x="457.00" y="764.20" width="5.50" height="2.20" fill="#86198a"/>
<rect x="428.50" y="775.30" width="2.00" height="2.20" fill="#86198a"/>
<rect x="432.50" y="775.30" width="2.00" height="2.20" fill="#86198a"/>
<rect x="436.00" y="775.30" width="8.50" height="2.20" fill="#86198a"/>
<rect x="447.00" y="778.00" width="2.00" height="2.20" fill="#86198a"/>
<rect x="426.50" y="784.00" width="2.00" height="2.20" fill="#86198a"/>
<rect x="461.70" y="733.00" width="2.60" height="54.50" fill="#931e8f"/>
<rect x="461.70" y="688.00" width="2.60" height="8.50" fill="#3d0c40"/>
<rect x="461.70" y="777.50" width="2.60" height="10.00" fill="#3d0c40"/>
<rect x="490.00" y="735.20" width="4.00" height="2.20" fill="#86198a"/>
<rect x="496.00" y="735.20" width="6.00" height="2.20" fill="#86198a"/>
<rect x="469.00" y="743.60" width="2.00" height="2.20" fill="#86198a"/>
<rect x="473.00" y="743.60" width="2.00" height="2.20" fill="#86198a"/>
<rect x="476.50" y="743.60" width="8.50" height="2.20" fill="#86198a"/>
<rect x="487.50" y="746.30" width="2.00" height="2.20" fill="#86198a"/>
<rect x="467.00" y="752.20" width="2.00" height="2.20" fill="#86198a"/>
<rect x="491.00" y="764.20" width="4.00" height="2.20" fill="#86198a"/>
<rect x="497.50" y="764.20" width="5.50" height="2.20" fill="#86198a"/>
<rect x="469.00" y="775.30" width="2.00" height="2.20" fill="#86198a"/>
<rect x="473.00" y="775.30" width="2.00" height="2.20" fill="#86198a"/>
<rect x="476.50" y="775.30" width="8.50" height="2.20" fill="#86198a"/>
<rect x="487.50" y="778.00" width="2.00" height="2.20" fill="#86198a"/>
<rect x="467.00" y="784.00" width="2.00" height="2.20" fill="#86198a"/>
<rect x="501.70" y="733.00" width="2.60" height="54.50" fill="#931e8f"/>
<rect x="501.70" y="688.00" width="2.60" height="8.50" fill="#3d0c40"/>
<rect x="501.70" y="777.50" width="2.60" height="10.00" fill="#3d0c40"/>
<rect x="530.00" y="735.20" width="4.00" height="2.20" fill="#86198a"/>
<rect x="536.00" y="735.20" width="6.00" height="2.20" fill="#86198a"/>
<rect x="509.00" y="743.60" width="2.00" height="2.20" fill="#86198a"/>
<rect x="513.00" y="743.60" width="2.00" height="2.20" fill="#86198a"/>
<rect x="516.50" y="743.60" width="8.50" height="2.20" fill="#86198a"/>
<rect x="527.50" y="746.30" width="2.00" height="2.20" fill="#86198a"/>
<rect x="507.00" y="752.20" width="2.00" height="2.20" fill="#86198a"/>
<rect x="531.00" y="764.20" width="4.00" height="2.20" fill="#86198a"/>
<rect x="537.50" y="764.20" width="5.50" height="2.20" fill="#86198a"/>
<rect x="509.00" y="775.30" width="2.00" height="2.20" fill="#86198a"/>
<rect x="513.00" y="775.30" width="2.00" height="2.20" fill="#86198a"/>
<rect x="516.50" y="775.30" width="8.50" height="2.20" fill="#86198a"/>
<rect x="527.50" y="778.00" width="2.00" height="2.20" fill="#86198a"/>
<rect x="507.00" y="784.00" width="2.00" height="2.20" fill="#86198a"/>
<rect x="544.95" y="733.00" width="2.60" height="54.50" fill="#931e8f"/>
<rect x="544.95" y="688.00" width="2.60" height="8.50" fill="#3d0c40"/>
<rect x="544.95" y="777.50" width="2.60" height="10.00" fill="#3d0c40"/>
<rect x="573.25" y="735.20" width="4.00" height="2.20" fill="#86198a"/>
<rect x="579.25" y="735.20" width="6.00" height="2.20" fill="#86198a"/>
<rect x="552.25" y="743.60" width="2.00" height="2.20" fill="#86198a"/>
<rect x="556.25" y="743.60" width="2.00" height="2.20" fill="#86198a"/>
<rect x="559.75" y="743.60" width="8.50" height="2.20" fill="#86198a"/>
<rect x="570.75" y="746.30" width="2.00" height="2.20" fill="#86198a"/>
<rect x="550.25" y="752.20" width="2.00" height="2.20" fill="#86198a"/>
<rect x="574.25" y="764.20" width="4.00" height="2.20" fill="#86198a"/>
<rect x="580.75" y="764.20" width="5.50" height="2.20" fill="#86198a"/>
<rect x="552.25" y="775.30" width="2.00" height="2.20" fill="#86198a"/>
<rect x="556.25" y="775.30" width="2.00" height="2.20" fill="#86198a"/>
<rect x="559.75" y="775.30" width="8.50" height="2.20" fill="#86198a"/>
<rect x="570.75" y="778.00" width="2.00" height="2.20" fill="#86198a"/>
<rect x="550.25" y="784.00" width="2.00" height="2.20" fill="#86198a"/>
<rect x="584.95" y="733.00" width="2.60" height="54.50" fill="#931e8f"/>
<rect x="584.95" y="688.00" width="2.60" height="8.50" fill="#3d0c40"/>
<rect x="584.95" y="777.50" width="2.60" height="10.00" fill="#3d0c40"/>
<rect x="613.25" y="735.20" width="4.00" height="2.20" fill="#86198a"/>
<rect x="619.25" y="735.20" width="6.00" height="2.20" fill="#86198a"/>
<rect x="592.25" y="743.60" width="2.00" height="2.20" fill="#86198a"/>
<rect x="596.25" y="743.60" width="2.00" height="2.20" fill="#86198a"/>
<rect x="599.75" y="743.60" width="8.50" height="2.20" fill="#86198a"/>
<rect x="610.75" y="746.30" width="2.00" height="2.20" fill="#86198a"/>
<rect x="590.25" y="752.20" width="2.00" height="2.20" fill="#86198a"/>
<rect x="614.25" y="764.20" width="4.00" height="2.20" fill="#86198a"/>
<rect x="620.75" y="764.20" width="5.50" height="2.20" fill="#86198a"/>
<rect x="592.25" y="775.30" width="2.00" height="2.20" fill="#86198a"/>
<rect x="596.25" y="775.30" width="2.00" height="2.20" fill="#86198a"/>
<rect x="599.75" y="775.30" width="8.50" height="2.20" fill="#86198a"/>
<rect x="610.75" y="778.00" width="2.00" height="2.20" fill="#86198a"/>
<rect x="590.25" y="784.00" width="2.00" height="2.20" fill="#86198a"/>
<rect x="625.45" y="733.00" width="2.60" height="54.50" fill="#931e8f"/>
<rect x="625.45" y="688.00" width="2.60" height="8.50" fill="#3d0c40"/>
<rect x="625.45" y="777.50" width="2.60" height="10.00" fill="#3d0c40"/>
<rect x="653.75" y="735.20" width="4.00" height="2.20" fill="#86198a"/>
<rect x="659.75" y="735.20" width="6.00" height="2.20" fill="#86198a"/>
<rect x="632.75" y="743.60" width="2.00" height="2.20" fill="#86198a"/>
<rect x="636.75" y="743.60" width="2.00" height="2.20" fill="#86198a"/>
<rect x="640.25" y="743.60" width="8.50" height="2.20" fill="#86198a"/>
<rect x="651.25" y="746.30" width="2.00" height="2.20" fill="#86198a"/>
<rect x="630.75" y="752.20" width="2.00" height="2.20" fill="#86198a"/>
<rect x="654.75" y="764.20" width="4.00" height="2.20" fill="#86198a"/>
<rect x="661.25" y="764.20" width="5.50" height="2.20" fill="#86198a"/>
<rect x="632.75" y="775.30" width="2.00" height="2.20" fill="#86198a"/>
<rect x="636.75" y="775.30" width="2.00" height="2.20" fill="#86198a"/>
<rect x="640.25" y="775.30" width="8.50" height="2.20" fill="#86198a"/>
<rect x="651.25" y="778.00" width="2.00" height="2.20" fill="#86198a"/>
<rect x="630.75" y="784.00" width="2.00" height="2.20" fill="#86198a"/>
<rect x="665.45" y="733.00" width="2.60" height="54.50" fill="#931e8f"/>
<rect x="665.45" y="688.00" width="2.60" height="8.50" fill="#3d0c40"/>
<rect x="665.45" y="777.50" width="2.60" height="10.00" fill="#3d0c40"/>
<rect x="693.75" y="735.20" width="4.00" height="2.20" fill="#86198a"/>
<rect x="699.75" y="735.20" width="6.00" height="2.20" fill="#86198a"/>
<rect x="672.75" y="743.60" width="2.00" height="2.20" fill="#86198a"/>
<rect x="676.75" y="743.60" width="2.00" height="2.20" fill="#86198a"/>
<rect x="680.25" y="743.60" width="8.50" height="2.20" fill="#86198a"/>
<rect x="691.25" y="746.30" width="2.00" height="2.20" fill="#86198a"/>
<rect x="670.75" y="752.20" width="2.00" height="2.20" fill="#86198a"/>
<rect x="694.75" y="764.20" width="4.00" height="2.20" fill="#86198a"/>
<rect x="701.25" y="764.20" width="5.50" height="2.20" fill="#86198a"/>
<rect x="672.75" y="775.30" width="2.00" height="2.20" fill="#86198a"/>
<rect x="676.75" y="775.30" width="2.00" height="2.20" fill="#86198a"/>
<rect x="680.25" y="775.30" width="8.50" height="2.20" fill="#86198a"/>
<rect x="691.25" y="778.00" width="2.00" height="2.20" fill="#86198a"/>
<rect x="670.75" y="784.00" width="2.00" height="2.20" fill="#86198a"/>
<rect x="705.55" y="733.00" width="2.60" height="54.50" fill="#931e8f"/>
<rect x="705.55" y="688.00" width="2.60" height="8.50" fill="#3d0c40"/>
<rect x="705.55" y="777.50" width="2.60" height="10.00" fill="#3d0c40"/>
<rect x="733.85" y="735.20" width="4.00" height="2.20" fill="#86198a"/>
<rect x="739.85" y="735.20" width="6.00" height="2.20" fill="#86198a"/>
<rect x="712.85" y="743.60" width="2.00" height="2.20" fill="#86198a"/>
<rect x="716.85" y="743.60" width="2.00" height="2.20" fill="#86198a"/>
<rect x="720.35" y="743.60" width="8.50" height="2.20" fill="#86198a"/>
<rect x="731.35" y="746.30" width="2.00" height="2.20" fill="#86198a"/>
<rect x="710.85" y="752.20" width="2.00" height="2.20" fill="#86198a"/>
<rect x="734.85" y="764.20" width="4.00" height="2.20" fill="#86198a"/>
<rect x="741.35" y="764.20" width="5.50" height="2.20" fill="#86198a"/>
<rect x="712.85" y="775.30" width="2.00" height="2.20" fill="#86198a"/>
<rect x="716.85" y="775.30" width="2.00" height="2.20" fill="#86198a"/>
<rect x="720.35" y="775.30" width="8.50" height="2.20" fill="#86198a"/>
<rect x="731.35" y="778.00" width="2.00" height="2.20" fill="#86198a"/>
<rect x="710.85" y="784.00" width="2.00" height="2.20" fill="#86198a"/>
<rect x="745.70" y="733.00" width="2.60" height="54.50" fill="#931e8f"/>
<rect x="745.70" y="688.00" width="2.60" height="8.50" fill="#3d0c40"/>
<rect x="745.70" y="777.50" width="2.60" height="10.00" fill="#3d0c40"/>
<rect x="774.00" y="735.20" width="4.00" height="2.20" fill="#86198a"/>
<rect x="780.00" y="735.20" width="6.00" height="2.20" fill="#86198a"/>
<rect x="753.00" y="743.60" width="2.00" height="2.20" fill="#86198a"/>
<rect x="757.00" y="743.60" width="2.00" height="2.20" fill="#86198a"/>
<rect x="760.50" y="743.60" width="8.50" height="2.20" fill="#86198a"/>
<rect x="771.50" y="746.30" width="2.00" height="2.20" fill="#86198a"/>
<rect x="751.00" y="752.20" width="2.00" height="2.20" fill="#86198a"/>
<rect x="775.00" y="764.20" width="4.00" height="2.20" fill="#86198a"/>
<rect x="781.50" y="764.20" width="5.50" height="2.20" fill="#86198a"/>
<rect x="753.00" y="775.30" width="2.00" height="2.20" fill="#86198a"/>
<rect x="757.00" y="775.30" width="2.00" height="2.20" fill="#86198a"/>
<rect x="760.50" y="775.30" width="8.50" height="2.20" fill="#86198a"/>
<rect x="771.50" y="778.00" width="2.00" height="2.20" fill="#86198a"/>
<rect x="751.00" y="784.00" width="2.00" height="2.20" fill="#86198a"/>
<rect x="788.70" y="733.00" width="2.60" height="54.50" fill="#931e8f"/>
<rect x="788.70" y="688.00" width="2.60" height="8.50" fill="#3d0c40"/>
<rect x="788.70" y="777.50" width="2.60" height="10.00" fill="#3d0c40"/>
<rect x="817.00" y="735.20" width="4.00" height="2.20" fill="#86198a"/>
<rect x="823.00" y="735.20" width="6.00" height="2.20" fill="#86198a"/>
<rect x="796.00" y="743.60" width="2.00" height="2.20" fill="#86198a"/>
<rect x="800.00" y="743.60" width="2.00" height="2.20" fill="#86198a"/>
<rect x="803.50" y="743.60" width="8.50" height="2.20" fill="#86198a"/>
<rect x="814.50" y="746.30" width="2.00" height="2.20" fill="#86198a"/>
<rect x="794.00" y="752.20" width="2.00" height="2.20" fill="#86198a"/>
<rect x="818.00" y="764.20" width="4.00" height="2.20" fill="#86198a"/>
<rect x="824.50" y="764.20" width="5.50" height="2.20" fill="#86198a"/>
<rect x="796.00" y="775.30" width="2.00" height="2.20" fill="#86198a"/>
<rect x="800.00" y="775.30" width="2.00" height="2.20" fill="#86198a"/>
<rect x="803.50" y="775.30" width="8.50" height="2.20" fill="#86198a"/>
<rect x="814.50" y="778.00" width="2.00" height="2.20" fill="#86198a"/>
<rect x="794.00" y="784.00" width="2.00" height="2.20" fill="#86198a"/>
<rect x="828.70" y="733.00" width="2.60" height="54.50" fill="#931e8f"/>
<rect x="828.70" y="688.00" width="2.60" height="8.50" fill="#3d0c40"/>
<rect x="828.70" y="777.50" width="2.60" height="10.00" fill="#3d0c40"/>
<rect x="857.00" y="735.20" width="4.00" height="2.20" fill="#86198a"/>
<rect x="863.00" y="735.20" width="6.00" height="2.20" fill="#86198a"/>
<rect x="836.00" y="743.60" width="2.00" height="2.20" fill="#86198a"/>
<rect x="840.00" y="743.60" width="2.00" height="2.20" fill="#86198a"/>
<rect x="843.50" y="743.60" width="8.50" height="2.20" fill="#86198a"/>
<rect x="854.50" y="746.30" width="2.00" height="2.20" fill="#86198a"/>
<rect x="834.00" y="752.20" width="2.00" height="2.20" fill="#86198a"/>
<rect x="858.00" y="764.20" width="4.00" height="2.20" fill="#86198a"/>
<rect x="864.50" y="764.20" width="5.50" height="2.20" fill="#86198a"/>
<rect x="836.00" y="775.30" width="2.00" height="2.20" fill="#86198a"/>
<rect x="840.00" y="775.30" width="2.00" height="2.20" fill="#86198a"/>
<rect x="843.50" y="775.30" width="8.50" height="2.20" fill="#86198a"/>
<rect x="854.50" y="778.00" width="2.00" height="2.20" fill="#86198a"/>
<rect x="834.00" y="784.00" width="2.00" height="2.20" fill="#86198a"/>
<rect x="868.95" y="733.00" width="2.60" height="54.50" fill="#931e8f"/>
<rect x="868.95" y="688.00" width="2.60" height="8.50" fill="#3d0c40"/>
<rect x="868.95" y="777.50" width="2.60" height="10.00" fill="#3d0c40"/>
<rect x="897.25" y="735.20" width="4.00" height="2.20" fill="#86198a"/>
<rect x="903.25" y="735.20" width="6.00" height="2.20" fill="#86198a"/>
<rect x="876.25" y="743.60" width="2.00" height="2.20" fill="#86198a"/>
<rect x="880.25" y="743.60" width="2.00" height="2.20" fill="#86198a"/>
<rect x="883.75" y="743.60" width="8.50" height="2.20" fill="#86198a"/>
<rect x="894.75" y="746.30" width="2.00" height="2.20" fill="#86198a"/>
<rect x="874.25" y="752.20" width="2.00" height="2.20" fill="#86198a"/>
<rect x="898.25" y="764.20" width="4.00" height="2.20" fill="#86198a"/>
<rect x="904.75" y="764.20" width="5.50" height="2.20" fill="#86198a"/>
<rect x="876.25" y="775.30" width="2.00" height="2.20" fill="#86198a"/>
<rect x="880.25" y="775.30" width="2.00" height="2.20" fill="#86198a"/>
<rect x="883.75" y="775.30" width="8.50" height="2.20" fill="#86198a"/>
<rect x="894.75" y="778.00" width="2.00" height="2.20" fill="#86198a"/>
<rect x="874.25" y="784.00" width="2.00" height="2.20" fill="#86198a"/>
<rect x="909.20" y="733.00" width="2.60" height="54.50" fill="#931e8f"/>
<rect x="909.20" y="688.00" width="2.60" height="8.50" fill="#3d0c40"/>
<rect x="909.20" y="777.50" width="2.60" height="10.00" fill="#3d0c40"/>
<rect x="937.50" y="735.20" width="4.00" height="2.20" fill="#86198a"/>
<rect x="943.50" y="735.20" width="6.00" height="2.20" fill="#86198a"/>
<rect x="916.50" y="743.60" width="2.00" height="2.20" fill="#86198a"/>
<rect x="920.50" y="743.60" width="2.00" height="2.20" fill="#86198a"/>
<rect x="924.00" y="743.60" width="8.50" height="2.20" fill="#86198a"/>
<rect x="935.00" y="746.30" width="2.00" height="2.20" fill="#86198a"/>
<rect x="914.50" y="752.20" width="2.00" height="2.20" fill="#86198a"/>
<rect x="938.50" y="764.20" width="4.00" height="2.20" fill="#86198a"/>
<rect x="945.00" y="764.20" width="5.50" height="2.20" fill="#86198a"/>
<rect x="916.50" y="775.30" width="2.00" height="2.20" fill="#86198a"/>
<rect x="920.50" y="775.30" width="2.00" height="2.20" fill="#86198a"/>
<rect x="924.00" y="775.30" width="8.50" height="2.20" fill="#86198a"/>
<rect x="935.00" y="778.00" width="2.00" height="2.20" fill="#86198a"/>
<rect x="914.50" y="784.00" width="2.00" height="2.20" fill="#86198a"/>
<rect x="949.45" y="733.00" width="2.60" height="54.50" fill="#931e8f"/>
<rect x="949.45" y="688.00" width="2.60" height="8.50" fill="#3d0c40"/>
<rect x="949.45" y="777.50" width="2.60" height="10.00" fill="#3d0c40"/>
<rect x="977.75" y="735.20" width="4.00" height="2.20" fill="#86198a"/>
<rect x="983.75" y="735.20" width="6.00" height="2.20" fill="#86198a"/>
<rect x="956.75" y="743.60" width="2.00" height="2.20" fill="#86198a"/>
<rect x="960.75" y="743.60" width="2.00" height="2.20" fill="#86198a"/>
<rect x="964.25" y="743.60" width="8.50" height="2.20" fill="#86198a"/>
<rect x="975.25" y="746.30" width="2.00" height="2.20" fill="#86198a"/>
<rect x="954.75" y="752.20" width="2.00" height="2.20" fill="#86198a"/>
<rect x="978.75" y="764.20" width="4.00" height="2.20" fill="#86198a"/>
<rect x="985.25" y="764.20" width="5.50" height="2.20" fill="#86198a"/>
<rect x="956.75" y="775.30" width="2.00" height="2.20" fill="#86198a"/>
<rect x="960.75" y="775.30" width="2.00" height="2.20" fill="#86198a"/>
<rect x="964.25" y="775.30" width="8.50" height="2.20" fill="#86198a"/>
<rect x="975.25" y="778.00" width="2.00" height="2.20" fill="#86198a"/>
<rect x="954.75" y="784.00" width="2.00" height="2.20" fill="#86198a"/>
<rect x="992.45" y="733.00" width="2.60" height="54.50" fill="#931e8f"/>
<rect x="992.45" y="688.00" width="2.60" height="8.50" fill="#3d0c40"/>
<rect x="992.45" y="777.50" width="2.60" height="10.00" fill="#3d0c40"/>
<rect x="1020.75" y="735.20" width="4.00" height="2.20" fill="#86198a"/>
<rect x="1026.75" y="735.20" width="6.00" height="2.20" fill="#86198a"/>
<rect x="999.75" y="743.60" width="2.00" height="2.20" fill="#86198a"/>
<rect x="1003.75" y="743.60" width="2.00" height="2.20" fill="#86198a"/>
<rect x="1007.25" y="743.60" width="8.50" height="2.20" fill="#86198a"/>
<rect x="1018.25" y="746.30" width="2.00" height="2.20" fill="#86198a"/>
<rect x="997.75" y="752.20" width="2.00" height="2.20" fill="#86198a"/>
<rect x="1021.75" y="764.20" width="4.00" height="2.20" fill="#86198a"/>
<rect x="1028.25" y="764.20" width="5.50" height="2.20" fill="#86198a"/>
<rect x="999.75" y="775.30" width="2.00" height="2.20" fill="#86198a"/>
<rect x="1003.75" y="775.30" width="2.00" height="2.20" fill="#86198a"/>
<rect x="1007.25" y="775.30" width="8.50" height="2.20" fill="#86198a"/>
<rect x="1018.25" y="778.00" width="2.00" height="2.20" fill="#86198a"/>
<rect x="997.75" y="784.00" width="2.00" height="2.20" fill="#86198a"/>
<rect x="1032.45" y="733.00" width="2.60" height="54.50" fill="#931e8f"/>
<rect x="1032.45" y="688.00" width="2.60" height="8.50" fill="#3d0c40"/>
<rect x="1032.45" y="777.50" width="2.60" height="10.00" fill="#3d0c40"/>
<rect x="1060.75" y="735.20" width="4.00" height="2.20" fill="#86198a"/>
<rect x="1066.75" y="735.20" width="6.00" height="2.20" fill="#86198a"/>
<rect x="1039.75" y="743.60" width="2.00" height="2.20" fill="#86198a"/>
<rect x="1043.75" y="743.60" width="2.00" height="2.20" fill="#86198a"/>
<rect x="1047.25" y="743.60" width="8.50" height="2.20" fill="#86198a"/>
<rect x="1058.25" y="746.30" width="2.00" height="2.20" fill="#86198a"/>
<rect x="1037.75" y="752.20" width="2.00" height="2.20" fill="#86198a"/>
<rect x="1061.75" y="764.20" width="4.00" height="2.20" fill="#86198a"/>
<rect x="1068.25" y="764.20" width="5.50" height="2.20" fill="#86198a"/>
<rect x="1039.75" y="775.30" width="2.00" height="2.20" fill="#86198a"/>
<rect x="1043.75" y="775.30" width="2.00" height="2.20" fill="#86198a"/>
<rect x="1047.25" y="775.30" width="8.50" height="2.20" fill="#86198a"/>
<rect x="1058.25" y="778.00" width="2.00" height="2.20" fill="#86198a"/>
<rect x="1037.75" y="784.00" width="2.00" height="2.20" fill="#86198a"/>
<rect x="1072.45" y="733.00" width="2.60" height="54.50" fill="#931e8f"/>
<rect x="1072.45" y="688.00" width="2.60" height="8.50" fill="#3d0c40"/>
<rect x="1072.45" y="777.50" width="2.60" height="10.00" fill="#3d0c40"/>
<rect x="1100.75" y="735.20" width="4.00" height="2.20" fill="#86198a"/>
<rect x="1106.75" y="735.20" width="6.00" height="2.20" fill="#86198a"/>
<rect x="1079.75" y="743.60" width="2.00" height="2.20" fill="#86198a"/>
<rect x="1083.75" y="743.60" width="2.00" height="2.20" fill="#86198a"/>
<rect x="1087.25" y="743.60" width="8.50" height="2.20" fill="#86198a"/>
<rect x="1098.25" y="746.30" width="2.00" height="2.20" fill="#86198a"/>
<rect x="1077.75" y="752.20" width="2.00" height="2.20" fill="#86198a"/>
<rect x="1101.75" y="764.20" width="4.00" height="2.20" fill="#86198a"/>
<rect x="1108.25" y="764.20" width="5.50" height="2.20" fill="#86198a"/>
<rect x="1079.75" y="775.30" width="2.00" height="2.20" fill="#86198a"/>
<rect x="1083.75" y="775.30" width="2.00" height="2.20" fill="#86198a"/>
<rect x="1087.25" y="775.30" width="8.50" height="2.20" fill="#86198a"/>
<rect x="1098.25" y="778.00" width="2.00" height="2.20" fill="#86198a"/>
<rect x="1077.75" y="784.00" width="2.00" height="2.20" fill="#86198a"/>
<rect x="1112.95" y="733.00" width="2.60" height="54.50" fill="#931e8f"/>
<rect x="1112.95" y="688.00" width="2.60" height="8.50" fill="#3d0c40"/>
<rect x="1112.95" y="777.50" width="2.60" height="10.00" fill="#3d0c40"/>
<rect x="1141.25" y="735.20" width="4.00" height="2.20" fill="#86198a"/>
<rect x="1147.25" y="735.20" width="6.00" height="2.20" fill="#86198a"/>
<rect x="1120.25" y="743.60" width="2.00" height="2.20" fill="#86198a"/>
<rect x="1124.25" y="743.60" width="2.00" height="2.20" fill="#86198a"/>
<rect x="1127.75" y="743.60" width="8.50" height="2.20" fill="#86198a"/>
<rect x="1138.75" y="746.30" width="2.00" height="2.20" fill="#86198a"/>
<rect x="1118.25" y="752.20" width="2.00" height="2.20" fill="#86198a"/>
<rect x="1142.25" y="764.20" width="4.00" height="2.20" fill="#86198a"/>
<rect x="1148.75" y="764.20" width="5.50" height="2.20" fill="#86198a"/>
<rect x="1120.25" y="775.30" width="2.00" height="2.20" fill="#86198a"/>
<rect x="1124.25" y="775.30" width="2.00" height="2.20" fill="#86198a"/>
<rect x="1127.75" y="775.30" width="8.50" height="2.20" fill="#86198a"/>
<rect x="1138.75" y="778.00" width="2.00" height="2.20" fill="#86198a"/>
<rect x="1118.25" y="784.00" width="2.00" height="2.20" fill="#86198a"/>
<rect x="1152.95" y="733.00" width="2.60" height="54.50" fill="#931e8f"/>
<rect x="1152.95" y="688.00" width="2.60" height="8.50" fill="#3d0c40"/>
<rect x="1152.95" y="777.50" width="2.60" height="10.00" fill="#3d0c40"/>
<rect x="1181.25" y="735.20" width="4.00" height="2.20" fill="#86198a"/>
<rect x="1187.25" y="735.20" width="6.00" height="2.20" fill="#86198a"/>
<rect x="1160.25" y="743.60" width="2.00" height="2.20" fill="#86198a"/>
<rect x="1164.25" y="743.60" width="2.00" height="2.20" fill="#86198a"/>
<rect x="1167.75" y="743.60" width="8.50" height="2.20" fill="#86198a"/>
<rect x="1178.75" y="746.30" width="2.00" height="2.20" fill="#86198a"/>
<rect x="1158.25" y="752.20" width="2.00" height="2.20" fill="#86198a"/>
<rect x="1182.25" y="764.20" width="4.00" height="2.20" fill="#86198a"/>
<rect x="1188.75" y="764.20" width="5.50" height="2.20" fill="#86198a"/>
<rect x="1160.25" y="775.30" width="2.00" height="2.20" fill="#86198a"/>
<rect x="1164.25" y="775.30" width="2.00" height="2.20" fill="#86198a"/>
<rect x="1167.75" y="775.30" width="8.50" height="2.20" fill="#86198a"/>
<rect x="1178.75" y="778.00" width="2.00" height="2.20" fill="#86198a"/>
<rect x="1158.25" y="784.00" width="2.00" height="2.20" fill="#86198a"/>
<rect x="1193.70" y="733.00" width="2.60" height="54.50" fill="#931e8f"/>
<rect x="1193.70" y="688.00" width="2.60" height="8.50" fill="#3d0c40"/>
<rect x="1193.70" y="777.50" width="2.60" height="10.00" fill="#3d0c40"/>
<rect x="1222.00" y="735.20" width="4.00" height="2.20" fill="#86198a"/>
<rect x="1228.00" y="735.20" width="6.00" height="2.20" fill="#86198a"/>
<rect x="1201.00" y="743.60" width="2.00" height="2.20" fill="#86198a"/>
<rect x="1205.00" y="743.60" width="2.00" height="2.20" fill="#86198a"/>
<rect x="1208.50" y="743.60" width="8.50" height="2.20" fill="#86198a"/>
<rect x="1219.50" y="746.30" width="2.00" height="2.20" fill="#86198a"/>
<rect x="1199.00" y="752.20" width="2.00" height="2.20" fill="#86198a"/>
<rect x="1223.00" y="764.20" width="4.00" height="2.20" fill="#86198a"/>
<rect x="1229.50" y="764.20" width="5.50" height="2.20" fill="#86198a"/>
<rect x="1201.00" y="775.30" width="2.00" height="2.20" fill="#86198a"/>
<rect x="1205.00" y="775.30" width="2.00" height="2.20" fill="#86198a"/>
<rect x="1208.50" y="775.30" width="8.50" height="2.20" fill="#86198a"/>
<rect x="1219.50" y="778.00" width="2.00" height="2.20" fill="#86198a"/>
<rect x="1199.00" y="784.00" width="2.00" height="2.20" fill="#86198a"/>
<rect x="1234.20" y="733.00" width="2.60" height="54.50" fill="#931e8f"/>
<rect x="1234.20" y="688.00" width="2.60" height="8.50" fill="#3d0c40"/>
<rect x="1234.20" y="777.50" width="2.60" height="10.00" fill="#3d0c40"/>
<rect x="1262.50" y="735.20" width="4.00" height="2.20" fill="#86198a"/>
<rect x="1268.50" y="735.20" width="6.00" height="2.20" fill="#86198a"/>
<rect x="1241.50" y="743.60" width="2.00" height="2.20" fill="#86198a"/>
<rect x="1245.50" y="743.60" width="2.00" height="2.20" fill="#86198a"/>
<rect x="1249.00" y="743.60" width="8.50" height="2.20" fill="#86198a"/>
<rect x="1260.00" y="746.30" width="2.00" height="2.20" fill="#86198a"/>
<rect x="1239.50" y="752.20" width="2.00" height="2.20" fill="#86198a"/>
<rect x="1263.50" y="764.20" width="4.00" height="2.20" fill="#86198a"/>
<rect x="1270.00" y="764.20" width="5.50" height="2.20" fill="#86198a"/>
<rect x="1241.50" y="775.30" width="2.00" height="2.20" fill="#86198a"/>
<rect x="1245.50" y="775.30" width="2.00" height="2.20" fill="#86198a"/>
<rect x="1249.00" y="775.30" width="8.50" height="2.20" fill="#86198a"/>
<rect x="1260.00" y="778.00" width="2.00" height="2.20" fill="#86198a"/>
<rect x="1239.50" y="784.00" width="2.00" height="2.20" fill="#86198a"/>
<rect x="450.00" y="810.00" width="398.00" height="34.00" fill="#353535"/>
<rect x="0.00" y="1024.50" width="1200.00" height="5.20" fill="#262626"/>
<rect x="0.00" y="1029.60" width="1200.00" height="61.00" fill="#363636"/>
<rect x="46.50" y="1030.00" width="2.40" height="6.30" fill="#949494"/>
<rect x="97.30" y="1030.00" width="2.40" height="6.30" fill="#949494"/>
<rect x="148.10" y="1030.00" width="2.40" height="6.30" fill="#949494"/>
<rect x="198.90" y="1030.00" width="2.40" height="6.30" fill="#949494"/>
<rect x="249.70" y="1030.00" width="2.40" height="6.30" fill="#949494"/>
<rect x="300.20" y="1030.00" width="3.00" height="22.50" fill="#949494"/>
<rect x="301.70" y="1050.00" width="4.20" height="2.50" fill="#949494"/>
<rect x="351.30" y="1030.00" width="2.40" height="6.30" fill="#949494"/>
<rect x="402.10" y="1030.00" width="2.40" height="6.30" fill="#949494"/>
<rect x="452.90" y="1030.00" width="2.40" height="6.30" fill="#949494"/>
<rect x="503.70" y="1030.00" width="2.40" height="6.30" fill="#949494"/>
<rect x="554.50" y="1030.00" width="2.40" height="6.30" fill="#949494"/>
<rect x="605.00" y="1030.00" width="3.00" height="22.50" fill="#949494"/>
<rect x="606.50" y="1050.00" width="4.20" height="2.50" fill="#949494"/>
<rect x="656.10" y="1030.00" width="2.40" height="6.30" fill="#949494"/>
<rect x="706.90" y="1030.00" width="2.40" height="6.30" fill="#949494"/>
<rect x="757.70" y="1030.00" width="2.40" height="6.30" fill="#949494"/>
<rect x="808.50" y="1030.00" width="2.40" height="6.30" fill="#949494"/>
<rect x="859.30" y="1030.00" width="2.40" height="6.30" fill="#949494"/>
<rect x="909.80" y="1030.00" width="3.00" height="22.50" fill="#949494"/>
<rect x="911.30" y="1050.00" width="4.20" height="2.50" fill="#949494"/>
<rect x="960.90" y="1030.00" width="2.40" height="6.30" fill="#949494"/>
<rect x="1011.70" y="1030.00" width="2.40" height="6.30" fill="#949494"/>
<rect x="1062.50" y="1030.00" width="2.40" height="6.30" fill="#949494"/>
<rect x="1113.30" y="1030.00" width="2.40" height="6.30" fill="#949494"/>
<rect x="1164.10" y="1030.00" width="2.40" height="6.30" fill="#949494"/>
<rect x="0.00" y="1090.00" width="1200.00" height="6.00" fill="#727272"/>
<rect x="0.00" y="1096.00" width="1200.00" height="504.00" fill="#2a2a2a"/>
<rect x="54.50" y="0.00" width="2.80" height="1030.00" fill="#a8a8a8"/>
<rect x="705.50" y="0.00" width="2.80" height="1030.00" fill="#a8a8a8"/>
<path d="M47 32.3 L55.5 32.3 L55.5 41.5Z" fill="#b2dded"/>
<path d="M707.5 32.3 L716 32.3 L707.5 41.5Z" fill="#b2dded"/>
<path d="M47.5 1043.8 L57.2 1043.8 L57.2 1033Z" fill="#b2dded"/>
<path d="M705.6 1033 L705.6 1043.8 L716 1043.8Z" fill="#b2dded"/>
<path d="M0 1116 H46 Q54.5 1116 54.5 1124 V1600 H0Z" fill="#3a3a3a"/>
<path d="M0 1116 H46 Q54.5 1116 54.5 1124 V1165 H0Z" fill="#454545"/>
<path d="M1200 1116 H528 Q519 1116 519 1125 V1600 H1200Z" fill="#363636"/>
<path d="M80 1600 V1124 Q80 1116 88 1116 H485 Q493 1116 493 1124 V1600Z" fill="#3c3c3c"/>
<path d="M80 1165 V1124 Q80 1116 88 1116 H485 Q493 1116 493 1124 V1165Z" fill="#6b8a99"/>
<rect x="86" y="1166" width="401" height="399" rx="9" fill="#1c1c1c"/>
<circle cx="67.5" cy="1249.0" r="3.9" fill="#1c1c1c"/>
<circle cx="67.5" cy="1263.2" r="3.9" fill="#1c1c1c"/>
<circle cx="67.5" cy="1277.4" r="3.9" fill="#1c1c1c"/>
<circle cx="67.5" cy="1291.6" r="3.9" fill="#1c1c1c"/>
<circle cx="67.5" cy="1305.8" r="3.9" fill="#1c1c1c"/>
<circle cx="67.5" cy="1320.0" r="3.9" fill="#1c1c1c"/>
<circle cx="67.5" cy="1334.2" r="3.9" fill="#1c1c1c"/>
<circle cx="67.5" cy="1348.4" r="3.9" fill="#1c1c1c"/>
<circle cx="67.5" cy="1362.6" r="3.9" fill="#1c1c1c"/>
<circle cx="67.5" cy="1376.8" r="3.9" fill="#1c1c1c"/>
<circle cx="67.5" cy="1391.0" r="3.9" fill="#1c1c1c"/>
<circle cx="67.5" cy="1405.2" r="3.9" fill="#1c1c1c"/>
<circle cx="67.5" cy="1419.4" r="3.9" fill="#1c1c1c"/>
<circle cx="67.5" cy="1433.6" r="3.9" fill="#1c1c1c"/>
<circle cx="67.5" cy="1447.8" r="3.9" fill="#1c1c1c"/>
<circle cx="67.5" cy="1462.0" r="3.9" fill="#1c1c1c"/>
<circle cx="67.5" cy="1476.2" r="3.9" fill="#1c1c1c"/>
<circle cx="67.5" cy="1490.4" r="3.9" fill="#1c1c1c"/>
<circle cx="67.5" cy="1504.6" r="3.9" fill="#1c1c1c"/>
<circle cx="67.5" cy="1518.8" r="3.9" fill="#1c1c1c"/>
<circle cx="67.5" cy="1533.0" r="3.9" fill="#1c1c1c"/>
<circle cx="505.5" cy="1249.0" r="3.9" fill="#1c1c1c"/>
<circle cx="505.5" cy="1263.2" r="3.9" fill="#1c1c1c"/>
<circle cx="505.5" cy="1277.4" r="3.9" fill="#1c1c1c"/>
<circle cx="505.5" cy="1291.6" r="3.9" fill="#1c1c1c"/>
<circle cx="505.5" cy="1305.8" r="3.9" fill="#1c1c1c"/>
<circle cx="505.5" cy="1320.0" r="3.9" fill="#1c1c1c"/>
<circle cx="505.5" cy="1334.2" r="3.9" fill="#1c1c1c"/>
<circle cx="505.5" cy="1348.4" r="3.9" fill="#1c1c1c"/>
<circle cx="505.5" cy="1362.6" r="3.9" fill="#1c1c1c"/>
<circle cx="505.5" cy="1376.8" r="3.9" fill="#1c1c1c"/>
<circle cx="505.5" cy="1391.0" r="3.9" fill="#1c1c1c"/>
<circle cx="505.5" cy="1405.2" r="3.9" fill="#1c1c1c"/>
<circle cx="505.5" cy="1419.4" r="3.9" fill="#1c1c1c"/>
<circle cx="505.5" cy="1433.6" r="3.9" fill="#1c1c1c"/>
<circle cx="505.5" cy="1447.8" r="3.9" fill="#1c1c1c"/>
<circle cx="505.5" cy="1462.0" r="3.9" fill="#1c1c1c"/>
<circle cx="505.5" cy="1476.2" r="3.9" fill="#1c1c1c"/>
<circle cx="505.5" cy="1490.4" r="3.9" fill="#1c1c1c"/>
<circle cx="505.5" cy="1504.6" r="3.9" fill="#1c1c1c"/>
<circle cx="505.5" cy="1518.8" r="3.9" fill="#1c1c1c"/>
<circle cx="505.5" cy="1533.0" r="3.9" fill="#1c1c1c"/>
<circle cx="107.2" cy="1140.5" r="16.9" fill="#ffad56" stroke="#141414" stroke-width="3.2"/>
<g fill="none" stroke="#33495a" stroke-width="3"><rect x="322.8" y="1131.5" width="23" height="17.5"/><path d="M328.5 1127.5v4M340.3 1127.5v4M328.5 1149v4M340.3 1149v4"/></g>
<rect x="322.8" y="1131.5" width="23" height="7" fill="#33495a"/>
<circle cx="374" cy="1140.5" r="18" fill="#1d1d1d"/>
<circle cx="420" cy="1140.5" r="18" fill="#1d1d1d"/>
<circle cx="466" cy="1140.5" r="18" fill="#1d1d1d"/>
<g fill="none" stroke="#d6d6d6" stroke-width="3.4" stroke-linecap="butt"><path d="M365.5 1140 A9 9 0 0 1 376.5 1131.8"/><path d="M383.5 1141 A9 9 0 0 1 372.5 1149.2"/></g>
<path d="M361.2 1138.3 L369.8 1138.3 L365.5 1144.8Z" fill="#d6d6d6"/><path d="M379.2 1142.7 L387.8 1142.7 L383.5 1136.2Z" fill="#d6d6d6"/>
<path d="M410.5 1131 H426 L430 1135 V1150 H410.5Z" fill="#d4d4d4"/><rect x="415.5" y="1133" width="9.5" height="5.5" fill="#1d1d1d"/>
<circle cx="457" cy="1140.5" r="2.8" fill="#d0d0d0"/>
<circle cx="466" cy="1140.5" r="2.8" fill="#d0d0d0"/>
<circle cx="475" cy="1140.5" r="2.8" fill="#d0d0d0"/>
<circle cx="122" cy="1200.5" r="14" fill="#ffb43c"/>
<circle cx="162" cy="1200.5" r="14" fill="none" stroke="#ffb43c" stroke-width="6"/>
<circle cx="286.7" cy="1365.3" r="160.2" fill="none" stroke="#664919" stroke-width="20"/>
<circle cx="286.7" cy="1365.3" r="146.75" fill="none" stroke="#131313" stroke-width="7.2"/>
<circle cx="286.7" cy="1365.3" r="134.15" fill="none" stroke="#16507d" stroke-width="18.3"/>
<rect x="455.00" y="1581.00" width="17.50" height="17.00" fill="#f2b705"/>
<rect x="418.00" y="1598.00" width="42.00" height="2.00" fill="#7d3526"/>
<g>
<path d="M421.5 201.3 L414 190.5 Q410.2 185.6 412.6 183.9 Q415.2 182.4 418.2 186.2 L420.8 189.4 L417.3 177.2 Q416.4 173.4 419 172.8 Q421.6 172.3 422.7 176 L424.9 184.2 L424.4 173.2 Q424.4 169.7 427.1 169.7 Q429.9 169.7 429.9 173.2 L430 184 L431.6 176 Q432.4 172.6 434.8 173.1 Q437.2 173.7 436.7 177.2 L435.6 186 L438.8 180.6 Q440.6 177.6 442.6 178.7 Q444.4 179.9 443.2 183.2 L438.3 196.5 L437.3 201.3 Z" fill="#ffffff" stroke="#0d101c" stroke-width="2.3" stroke-linejoin="round"/>
<path d="M425.6 188.5 v6.2 M430 188.5 v6.2 M434.4 188.5 v6.2" stroke="#0d101c" stroke-width="1.7" fill="none"/>
</g>
</svg>
<div class="t" style="left:64.5px;top:58.32px;font-size:27px;color:#2e2207;font-family:'Liberation Sans', sans-serif;font-weight:normal;letter-spacing:2.11px;-webkit-text-stroke:0.6px #2e2207;">[Your Arrangement Name] D</div>
<div class="t" style="left:714.5px;top:58.32px;font-size:27px;color:#2c3a05;font-family:'Liberation Sans', sans-serif;font-weight:normal;letter-spacing:2.05px;-webkit-text-stroke:0.6px #2c3a05;">[Your Arrangement Name] E</div>
<div class="t" style="left:-4px;top:58.32px;font-size:27px;color:#06314d;font-family:'Liberation Sans', sans-serif;font-weight:normal;letter-spacing:1.6px;-webkit-text-stroke:0.6px #06314d;width:58.5px;overflow:hidden;">t Na</div>
<div class="t" style="left:-12px;top:376.82px;font-size:27px;color:#141d38;font-family:'Liberation Sans', sans-serif;font-weight:normal;letter-spacing:1.6px;-webkit-text-stroke:0.6px #141d38;width:66.2px;overflow:hidden;">Top L</div>
<div class="t" style="left:63.5px;top:376.82px;font-size:27px;color:#141d38;font-family:'Liberation Sans', sans-serif;font-weight:normal;letter-spacing:1.6px;-webkit-text-stroke:0.6px #141d38;width:155px;overflow:hidden;">Apex_Top L</div>
<div class="t" style="left:227px;top:376.82px;font-size:27px;color:#141d38;font-family:'Liberation Sans', sans-serif;font-weight:normal;letter-spacing:1.66px;-webkit-text-stroke:0.6px #141d38;">Apex_Top Loop_D</div>
<div class="t" style="left:714px;top:376.82px;font-size:27px;color:#141d38;font-family:'Liberation Sans', sans-serif;font-weight:normal;letter-spacing:1.72px;-webkit-text-stroke:0.6px #141d38;">Apex_Top Loop_C</div>
<div class="t" style="left:227px;top:482.62px;font-size:27px;color:#2b2808;font-family:'Liberation Sans', sans-serif;font-weight:normal;letter-spacing:-0.84px;-webkit-text-stroke:0.6px #2b2808;">SUB</div>
<div class="t" style="left:-15.7px;top:588.92px;font-size:27px;color:#2b2808;font-family:'Liberation Sans', sans-serif;font-weight:normal;letter-spacing:2.2px;-webkit-text-stroke:0.6px #2b2808;width:69.9px;overflow:hidden;">X81Z</div>
<div class="t" style="left:63.5px;top:588.92px;font-size:27px;color:#2b2808;font-family:'Liberation Sans', sans-serif;font-weight:normal;letter-spacing:0.54px;-webkit-text-stroke:0.6px #2b2808;">1 PS TX81Z</div>
<div class="t" style="left:227px;top:588.92px;font-size:27px;color:#2b2808;font-family:'Liberation Sans', sans-serif;font-weight:normal;letter-spacing:0.54px;-webkit-text-stroke:0.6px #2b2808;">1 PS TX81Z</div>
<div class="t" style="left:390px;top:588.92px;font-size:27px;color:#2b2808;font-family:'Liberation Sans', sans-serif;font-weight:normal;letter-spacing:1.02px;-webkit-text-stroke:0.6px #2b2808;">1 PS TX81Z Bass Midi_Gm</div>
<div class="t" style="left:-0.5px;top:694.92px;font-size:27px;color:#3a0a3c;font-family:'Liberation Sans', sans-serif;font-weight:normal;letter-spacing:1.4px;-webkit-text-stroke:0.6px #3a0a3c;width:54.7px;overflow:hidden;">4 PS</div>
<div class="t" style="left:63px;top:694.92px;font-size:27px;color:#3a0a3c;font-family:'Liberation Sans', sans-serif;font-weight:normal;letter-spacing:1.4px;-webkit-text-stroke:0.6px #3a0a3c;width:75.3px;overflow:hidden;">04 PS</div>
<div class="t" style="left:147.5px;top:694.92px;font-size:27px;color:#3a0a3c;font-family:'Liberation Sans', sans-serif;font-weight:normal;letter-spacing:1.4px;-webkit-text-stroke:0.6px #3a0a3c;width:71.3px;overflow:hidden;">04 PS</div>
<div class="t" style="left:228px;top:694.92px;font-size:27px;color:#3a0a3c;font-family:'Liberation Sans', sans-serif;font-weight:normal;letter-spacing:1.4px;-webkit-text-stroke:0.6px #3a0a3c;width:70.5px;overflow:hidden;">04 PS</div>
<div class="t" style="left:307px;top:694.92px;font-size:27px;color:#3a0a3c;font-family:'Liberation Sans', sans-serif;font-weight:normal;letter-spacing:1.05px;-webkit-text-stroke:0.6px #3a0a3c;">04 PS KM1 Og 2 Chords F#m</div>
<div class="t" style="left:457px;top:811.32px;font-size:27px;color:#b6b6b6;font-family:'Liberation Sans', sans-serif;font-weight:normal;letter-spacing:1.44px;-webkit-text-stroke:0.6px #b6b6b6;">Drop Files and Devices Here</div>
<div class="t" style="left:4px;top:1035.34px;font-size:28.5px;color:#a6a6a6;font-family:'Liberation Sans', sans-serif;font-weight:normal;letter-spacing:0.5px;-webkit-text-stroke:0.1px #a6a6a6;">1:30</div>
<div class="t" style="left:309px;top:1035.34px;font-size:28.5px;color:#a6a6a6;font-family:'Liberation Sans', sans-serif;font-weight:normal;letter-spacing:0.5px;-webkit-text-stroke:0.1px #a6a6a6;">2:00</div>
<div class="t" style="left:614px;top:1035.34px;font-size:28.5px;color:#a6a6a6;font-family:'Liberation Sans', sans-serif;font-weight:normal;letter-spacing:0.5px;-webkit-text-stroke:0.1px #a6a6a6;">2:30</div>
<div class="t" style="left:918.5px;top:1035.34px;font-size:28.5px;color:#a6a6a6;font-family:'Liberation Sans', sans-serif;font-weight:normal;letter-spacing:0.5px;-webkit-text-stroke:0.1px #a6a6a6;">3:00</div>
<div class="t" style="left:138px;top:1124.92px;font-size:27px;color:#0d0d0d;font-family:'Liberation Sans', sans-serif;font-weight:normal;letter-spacing:1.45px;-webkit-text-stroke:0.9px #0d0d0d;">PS LoopSc...</div>
<div class="t" style="left:-11.5px;top:1180.2px;font-size:28px;color:#c4c4c4;font-family:'Liberation Sans', sans-serif;font-weight:normal;letter-spacing:0px;-webkit-text-stroke:0.6px #c4c4c4;">o</div>
<div class="t" style="left:-1px;top:1222.2px;font-size:28px;color:#c4c4c4;font-family:'Liberation Sans', sans-serif;font-weight:normal;letter-spacing:1px;-webkit-text-stroke:0.6px #c4c4c4;">nu</div>
<div class="t" style="left:238px;top:1297.87px;font-size:30px;color:#1e9df0;font-family:'DejaVu Sans', sans-serif;font-weight:normal;letter-spacing:2.2px;-webkit-text-stroke:0px #1e9df0;">1 / 32</div>
<div class="t" style="left:232.5px;top:1322.79px;font-size:86px;color:#ffb437;font-family:'DejaVu Sans', sans-serif;font-weight:normal;letter-spacing:1.5px;-webkit-text-stroke:0.9px #ffb437;">32</div>
<div class="t" style="left:228px;top:1409.77px;font-size:30px;color:#b0b0b0;font-family:'DejaVu Sans', sans-serif;font-weight:normal;letter-spacing:2.0px;-webkit-text-stroke:0px #b0b0b0;">1 / 128</div>
<div class="t" style="left:101px;top:1571.42px;font-size:27px;color:#c8c8c8;font-family:'Liberation Sans', sans-serif;font-weight:bold;letter-spacing:1.57px;-webkit-text-stroke:0px #c8c8c8;">Autoloop</div>
<div class="t" style="left:257px;top:1571.42px;font-size:27px;color:#c8c8c8;font-family:'Liberation Sans', sans-serif;font-weight:bold;letter-spacing:1.69px;-webkit-text-stroke:0px #c8c8c8;">Autoplay</div>
</div>
</body></html>
